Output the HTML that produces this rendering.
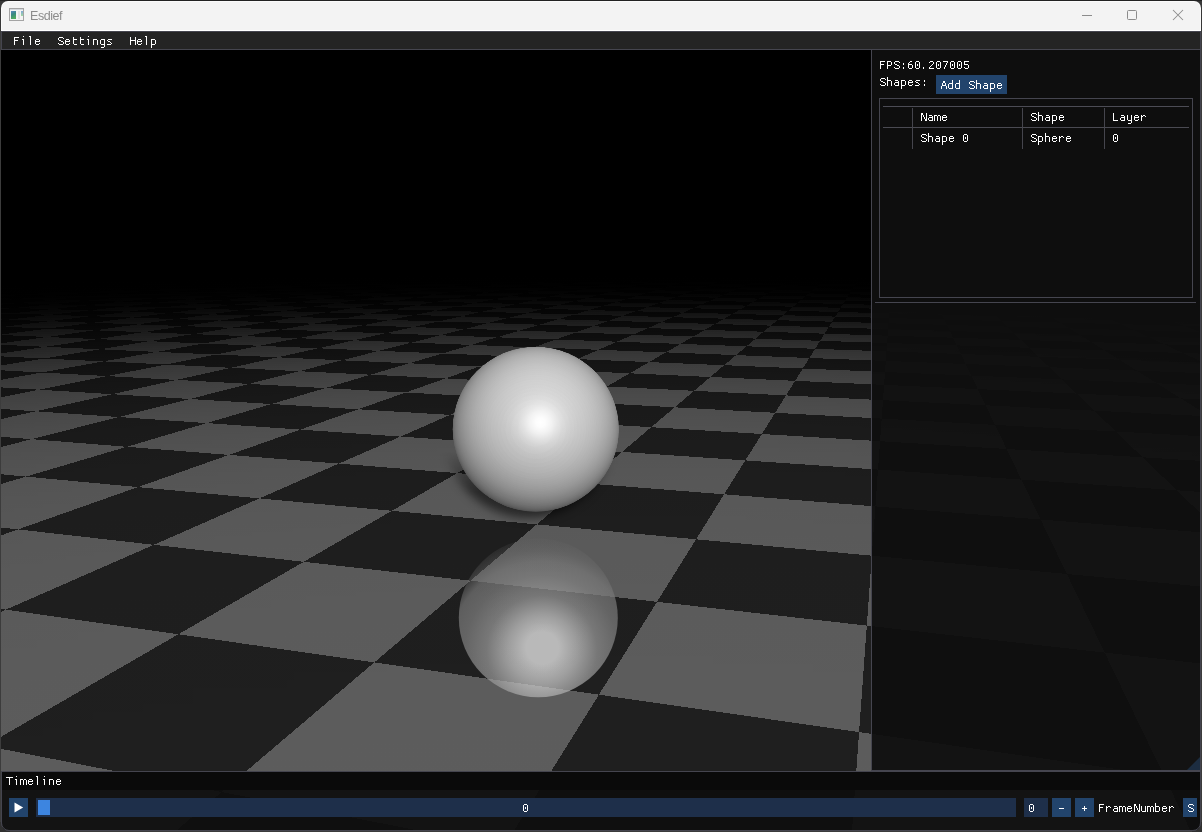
<!DOCTYPE html><html><head><meta charset="utf-8"><style>
html,body{margin:0;padding:0;width:1202px;height:832px;overflow:hidden;background:#383838;position:relative}
.a{position:absolute}
</style></head><body>
<svg width="1202" height="832" style="position:absolute;left:0;top:0">
<defs><clipPath id="vp"><rect x="1" y="50" width="1200" height="781"/></clipPath>
<linearGradient id="f0" x1="0" x2="1202" y1="0" y2="0" gradientUnits="userSpaceOnUse"><stop offset="0.000" stop-opacity="1.000"/><stop offset="0.083" stop-opacity="1.000"/><stop offset="0.166" stop-opacity="1.000"/><stop offset="0.250" stop-opacity="1.000"/><stop offset="0.333" stop-opacity="1.000"/><stop offset="0.416" stop-opacity="1.000"/><stop offset="0.500" stop-opacity="1.000"/><stop offset="0.582" stop-opacity="1.000"/><stop offset="0.666" stop-opacity="1.000"/><stop offset="0.749" stop-opacity="1.000"/><stop offset="0.832" stop-opacity="1.000"/><stop offset="0.915" stop-opacity="1.000"/><stop offset="1.000" stop-opacity="1.000"/></linearGradient><linearGradient id="f1" x1="0" x2="1202" y1="0" y2="0" gradientUnits="userSpaceOnUse"><stop offset="0.000" stop-opacity="1.000"/><stop offset="0.083" stop-opacity="1.000"/><stop offset="0.166" stop-opacity="1.000"/><stop offset="0.250" stop-opacity="1.000"/><stop offset="0.333" stop-opacity="1.000"/><stop offset="0.416" stop-opacity="1.000"/><stop offset="0.500" stop-opacity="1.000"/><stop offset="0.582" stop-opacity="1.000"/><stop offset="0.666" stop-opacity="1.000"/><stop offset="0.749" stop-opacity="1.000"/><stop offset="0.832" stop-opacity="1.000"/><stop offset="0.915" stop-opacity="1.000"/><stop offset="1.000" stop-opacity="1.000"/></linearGradient><linearGradient id="f2" x1="0" x2="1202" y1="0" y2="0" gradientUnits="userSpaceOnUse"><stop offset="0.000" stop-opacity="1.000"/><stop offset="0.083" stop-opacity="1.000"/><stop offset="0.166" stop-opacity="1.000"/><stop offset="0.250" stop-opacity="1.000"/><stop offset="0.333" stop-opacity="1.000"/><stop offset="0.416" stop-opacity="1.000"/><stop offset="0.500" stop-opacity="1.000"/><stop offset="0.582" stop-opacity="1.000"/><stop offset="0.666" stop-opacity="1.000"/><stop offset="0.749" stop-opacity="1.000"/><stop offset="0.832" stop-opacity="1.000"/><stop offset="0.915" stop-opacity="1.000"/><stop offset="1.000" stop-opacity="1.000"/></linearGradient><linearGradient id="f3" x1="0" x2="1202" y1="0" y2="0" gradientUnits="userSpaceOnUse"><stop offset="0.000" stop-opacity="1.000"/><stop offset="0.083" stop-opacity="1.000"/><stop offset="0.166" stop-opacity="1.000"/><stop offset="0.250" stop-opacity="1.000"/><stop offset="0.333" stop-opacity="1.000"/><stop offset="0.416" stop-opacity="1.000"/><stop offset="0.500" stop-opacity="1.000"/><stop offset="0.582" stop-opacity="1.000"/><stop offset="0.666" stop-opacity="1.000"/><stop offset="0.749" stop-opacity="1.000"/><stop offset="0.832" stop-opacity="1.000"/><stop offset="0.915" stop-opacity="1.000"/><stop offset="1.000" stop-opacity="1.000"/></linearGradient><linearGradient id="f4" x1="0" x2="1202" y1="0" y2="0" gradientUnits="userSpaceOnUse"><stop offset="0.000" stop-opacity="1.000"/><stop offset="0.083" stop-opacity="1.000"/><stop offset="0.166" stop-opacity="1.000"/><stop offset="0.250" stop-opacity="1.000"/><stop offset="0.333" stop-opacity="1.000"/><stop offset="0.416" stop-opacity="1.000"/><stop offset="0.500" stop-opacity="1.000"/><stop offset="0.582" stop-opacity="1.000"/><stop offset="0.666" stop-opacity="1.000"/><stop offset="0.749" stop-opacity="1.000"/><stop offset="0.832" stop-opacity="1.000"/><stop offset="0.915" stop-opacity="1.000"/><stop offset="1.000" stop-opacity="1.000"/></linearGradient><linearGradient id="f5" x1="0" x2="1202" y1="0" y2="0" gradientUnits="userSpaceOnUse"><stop offset="0.000" stop-opacity="1.000"/><stop offset="0.083" stop-opacity="1.000"/><stop offset="0.166" stop-opacity="1.000"/><stop offset="0.250" stop-opacity="1.000"/><stop offset="0.333" stop-opacity="1.000"/><stop offset="0.416" stop-opacity="1.000"/><stop offset="0.500" stop-opacity="1.000"/><stop offset="0.582" stop-opacity="1.000"/><stop offset="0.666" stop-opacity="1.000"/><stop offset="0.749" stop-opacity="1.000"/><stop offset="0.832" stop-opacity="1.000"/><stop offset="0.915" stop-opacity="1.000"/><stop offset="1.000" stop-opacity="1.000"/></linearGradient><linearGradient id="f6" x1="0" x2="1202" y1="0" y2="0" gradientUnits="userSpaceOnUse"><stop offset="0.000" stop-opacity="1.000"/><stop offset="0.083" stop-opacity="1.000"/><stop offset="0.166" stop-opacity="1.000"/><stop offset="0.250" stop-opacity="1.000"/><stop offset="0.333" stop-opacity="1.000"/><stop offset="0.416" stop-opacity="1.000"/><stop offset="0.500" stop-opacity="1.000"/><stop offset="0.582" stop-opacity="1.000"/><stop offset="0.666" stop-opacity="1.000"/><stop offset="0.749" stop-opacity="1.000"/><stop offset="0.832" stop-opacity="1.000"/><stop offset="0.915" stop-opacity="1.000"/><stop offset="1.000" stop-opacity="1.000"/></linearGradient><linearGradient id="f7" x1="0" x2="1202" y1="0" y2="0" gradientUnits="userSpaceOnUse"><stop offset="0.000" stop-opacity="1.000"/><stop offset="0.083" stop-opacity="1.000"/><stop offset="0.166" stop-opacity="1.000"/><stop offset="0.250" stop-opacity="1.000"/><stop offset="0.333" stop-opacity="1.000"/><stop offset="0.416" stop-opacity="1.000"/><stop offset="0.500" stop-opacity="1.000"/><stop offset="0.582" stop-opacity="1.000"/><stop offset="0.666" stop-opacity="1.000"/><stop offset="0.749" stop-opacity="1.000"/><stop offset="0.832" stop-opacity="1.000"/><stop offset="0.915" stop-opacity="1.000"/><stop offset="1.000" stop-opacity="1.000"/></linearGradient><linearGradient id="f8" x1="0" x2="1202" y1="0" y2="0" gradientUnits="userSpaceOnUse"><stop offset="0.000" stop-opacity="1.000"/><stop offset="0.083" stop-opacity="1.000"/><stop offset="0.166" stop-opacity="1.000"/><stop offset="0.250" stop-opacity="1.000"/><stop offset="0.333" stop-opacity="1.000"/><stop offset="0.416" stop-opacity="1.000"/><stop offset="0.500" stop-opacity="1.000"/><stop offset="0.582" stop-opacity="1.000"/><stop offset="0.666" stop-opacity="1.000"/><stop offset="0.749" stop-opacity="1.000"/><stop offset="0.832" stop-opacity="1.000"/><stop offset="0.915" stop-opacity="1.000"/><stop offset="1.000" stop-opacity="1.000"/></linearGradient><linearGradient id="f9" x1="0" x2="1202" y1="0" y2="0" gradientUnits="userSpaceOnUse"><stop offset="0.000" stop-opacity="1.000"/><stop offset="0.083" stop-opacity="1.000"/><stop offset="0.166" stop-opacity="1.000"/><stop offset="0.250" stop-opacity="1.000"/><stop offset="0.333" stop-opacity="1.000"/><stop offset="0.416" stop-opacity="1.000"/><stop offset="0.500" stop-opacity="1.000"/><stop offset="0.582" stop-opacity="1.000"/><stop offset="0.666" stop-opacity="1.000"/><stop offset="0.749" stop-opacity="1.000"/><stop offset="0.832" stop-opacity="1.000"/><stop offset="0.915" stop-opacity="1.000"/><stop offset="1.000" stop-opacity="1.000"/></linearGradient><linearGradient id="f10" x1="0" x2="1202" y1="0" y2="0" gradientUnits="userSpaceOnUse"><stop offset="0.000" stop-opacity="1.000"/><stop offset="0.083" stop-opacity="1.000"/><stop offset="0.166" stop-opacity="1.000"/><stop offset="0.250" stop-opacity="1.000"/><stop offset="0.333" stop-opacity="1.000"/><stop offset="0.416" stop-opacity="1.000"/><stop offset="0.500" stop-opacity="1.000"/><stop offset="0.582" stop-opacity="1.000"/><stop offset="0.666" stop-opacity="1.000"/><stop offset="0.749" stop-opacity="1.000"/><stop offset="0.832" stop-opacity="1.000"/><stop offset="0.915" stop-opacity="1.000"/><stop offset="1.000" stop-opacity="1.000"/></linearGradient><linearGradient id="f11" x1="0" x2="1202" y1="0" y2="0" gradientUnits="userSpaceOnUse"><stop offset="0.000" stop-opacity="1.000"/><stop offset="0.083" stop-opacity="1.000"/><stop offset="0.166" stop-opacity="1.000"/><stop offset="0.250" stop-opacity="1.000"/><stop offset="0.333" stop-opacity="1.000"/><stop offset="0.416" stop-opacity="1.000"/><stop offset="0.500" stop-opacity="1.000"/><stop offset="0.582" stop-opacity="1.000"/><stop offset="0.666" stop-opacity="1.000"/><stop offset="0.749" stop-opacity="1.000"/><stop offset="0.832" stop-opacity="1.000"/><stop offset="0.915" stop-opacity="1.000"/><stop offset="1.000" stop-opacity="1.000"/></linearGradient><linearGradient id="f12" x1="0" x2="1202" y1="0" y2="0" gradientUnits="userSpaceOnUse"><stop offset="0.000" stop-opacity="1.000"/><stop offset="0.083" stop-opacity="1.000"/><stop offset="0.166" stop-opacity="1.000"/><stop offset="0.250" stop-opacity="1.000"/><stop offset="0.333" stop-opacity="1.000"/><stop offset="0.416" stop-opacity="1.000"/><stop offset="0.500" stop-opacity="1.000"/><stop offset="0.582" stop-opacity="1.000"/><stop offset="0.666" stop-opacity="1.000"/><stop offset="0.749" stop-opacity="1.000"/><stop offset="0.832" stop-opacity="1.000"/><stop offset="0.915" stop-opacity="1.000"/><stop offset="1.000" stop-opacity="1.000"/></linearGradient><linearGradient id="f13" x1="0" x2="1202" y1="0" y2="0" gradientUnits="userSpaceOnUse"><stop offset="0.000" stop-opacity="1.000"/><stop offset="0.083" stop-opacity="1.000"/><stop offset="0.166" stop-opacity="1.000"/><stop offset="0.250" stop-opacity="1.000"/><stop offset="0.333" stop-opacity="1.000"/><stop offset="0.416" stop-opacity="1.000"/><stop offset="0.500" stop-opacity="1.000"/><stop offset="0.582" stop-opacity="1.000"/><stop offset="0.666" stop-opacity="1.000"/><stop offset="0.749" stop-opacity="1.000"/><stop offset="0.832" stop-opacity="1.000"/><stop offset="0.915" stop-opacity="1.000"/><stop offset="1.000" stop-opacity="1.000"/></linearGradient><linearGradient id="f14" x1="0" x2="1202" y1="0" y2="0" gradientUnits="userSpaceOnUse"><stop offset="0.000" stop-opacity="1.000"/><stop offset="0.083" stop-opacity="1.000"/><stop offset="0.166" stop-opacity="1.000"/><stop offset="0.250" stop-opacity="1.000"/><stop offset="0.333" stop-opacity="1.000"/><stop offset="0.416" stop-opacity="1.000"/><stop offset="0.500" stop-opacity="1.000"/><stop offset="0.582" stop-opacity="1.000"/><stop offset="0.666" stop-opacity="1.000"/><stop offset="0.749" stop-opacity="1.000"/><stop offset="0.832" stop-opacity="1.000"/><stop offset="0.915" stop-opacity="1.000"/><stop offset="1.000" stop-opacity="1.000"/></linearGradient><linearGradient id="f15" x1="0" x2="1202" y1="0" y2="0" gradientUnits="userSpaceOnUse"><stop offset="0.000" stop-opacity="1.000"/><stop offset="0.083" stop-opacity="1.000"/><stop offset="0.166" stop-opacity="1.000"/><stop offset="0.250" stop-opacity="1.000"/><stop offset="0.333" stop-opacity="1.000"/><stop offset="0.416" stop-opacity="1.000"/><stop offset="0.500" stop-opacity="1.000"/><stop offset="0.582" stop-opacity="1.000"/><stop offset="0.666" stop-opacity="1.000"/><stop offset="0.749" stop-opacity="1.000"/><stop offset="0.832" stop-opacity="1.000"/><stop offset="0.915" stop-opacity="1.000"/><stop offset="1.000" stop-opacity="1.000"/></linearGradient><linearGradient id="f16" x1="0" x2="1202" y1="0" y2="0" gradientUnits="userSpaceOnUse"><stop offset="0.000" stop-opacity="1.000"/><stop offset="0.083" stop-opacity="1.000"/><stop offset="0.166" stop-opacity="1.000"/><stop offset="0.250" stop-opacity="1.000"/><stop offset="0.333" stop-opacity="1.000"/><stop offset="0.416" stop-opacity="1.000"/><stop offset="0.500" stop-opacity="1.000"/><stop offset="0.582" stop-opacity="1.000"/><stop offset="0.666" stop-opacity="1.000"/><stop offset="0.749" stop-opacity="1.000"/><stop offset="0.832" stop-opacity="1.000"/><stop offset="0.915" stop-opacity="1.000"/><stop offset="1.000" stop-opacity="1.000"/></linearGradient><linearGradient id="f17" x1="0" x2="1202" y1="0" y2="0" gradientUnits="userSpaceOnUse"><stop offset="0.000" stop-opacity="1.000"/><stop offset="0.083" stop-opacity="1.000"/><stop offset="0.166" stop-opacity="1.000"/><stop offset="0.250" stop-opacity="1.000"/><stop offset="0.333" stop-opacity="1.000"/><stop offset="0.416" stop-opacity="1.000"/><stop offset="0.500" stop-opacity="1.000"/><stop offset="0.582" stop-opacity="1.000"/><stop offset="0.666" stop-opacity="1.000"/><stop offset="0.749" stop-opacity="1.000"/><stop offset="0.832" stop-opacity="1.000"/><stop offset="0.915" stop-opacity="1.000"/><stop offset="1.000" stop-opacity="1.000"/></linearGradient><linearGradient id="f18" x1="0" x2="1202" y1="0" y2="0" gradientUnits="userSpaceOnUse"><stop offset="0.000" stop-opacity="1.000"/><stop offset="0.083" stop-opacity="1.000"/><stop offset="0.166" stop-opacity="1.000"/><stop offset="0.250" stop-opacity="1.000"/><stop offset="0.333" stop-opacity="1.000"/><stop offset="0.416" stop-opacity="1.000"/><stop offset="0.500" stop-opacity="1.000"/><stop offset="0.582" stop-opacity="1.000"/><stop offset="0.666" stop-opacity="1.000"/><stop offset="0.749" stop-opacity="1.000"/><stop offset="0.832" stop-opacity="1.000"/><stop offset="0.915" stop-opacity="1.000"/><stop offset="1.000" stop-opacity="1.000"/></linearGradient><linearGradient id="f19" x1="0" x2="1202" y1="0" y2="0" gradientUnits="userSpaceOnUse"><stop offset="0.000" stop-opacity="1.000"/><stop offset="0.083" stop-opacity="1.000"/><stop offset="0.166" stop-opacity="1.000"/><stop offset="0.250" stop-opacity="1.000"/><stop offset="0.333" stop-opacity="1.000"/><stop offset="0.416" stop-opacity="1.000"/><stop offset="0.500" stop-opacity="1.000"/><stop offset="0.582" stop-opacity="1.000"/><stop offset="0.666" stop-opacity="1.000"/><stop offset="0.749" stop-opacity="1.000"/><stop offset="0.832" stop-opacity="1.000"/><stop offset="0.915" stop-opacity="1.000"/><stop offset="1.000" stop-opacity="1.000"/></linearGradient><linearGradient id="f20" x1="0" x2="1202" y1="0" y2="0" gradientUnits="userSpaceOnUse"><stop offset="0.000" stop-opacity="1.000"/><stop offset="0.083" stop-opacity="1.000"/><stop offset="0.166" stop-opacity="1.000"/><stop offset="0.250" stop-opacity="1.000"/><stop offset="0.333" stop-opacity="1.000"/><stop offset="0.416" stop-opacity="1.000"/><stop offset="0.500" stop-opacity="1.000"/><stop offset="0.582" stop-opacity="1.000"/><stop offset="0.666" stop-opacity="1.000"/><stop offset="0.749" stop-opacity="1.000"/><stop offset="0.832" stop-opacity="1.000"/><stop offset="0.915" stop-opacity="1.000"/><stop offset="1.000" stop-opacity="1.000"/></linearGradient><linearGradient id="f21" x1="0" x2="1202" y1="0" y2="0" gradientUnits="userSpaceOnUse"><stop offset="0.000" stop-opacity="1.000"/><stop offset="0.083" stop-opacity="1.000"/><stop offset="0.166" stop-opacity="1.000"/><stop offset="0.250" stop-opacity="1.000"/><stop offset="0.333" stop-opacity="1.000"/><stop offset="0.416" stop-opacity="1.000"/><stop offset="0.500" stop-opacity="1.000"/><stop offset="0.582" stop-opacity="1.000"/><stop offset="0.666" stop-opacity="1.000"/><stop offset="0.749" stop-opacity="1.000"/><stop offset="0.832" stop-opacity="1.000"/><stop offset="0.915" stop-opacity="1.000"/><stop offset="1.000" stop-opacity="1.000"/></linearGradient><linearGradient id="f22" x1="0" x2="1202" y1="0" y2="0" gradientUnits="userSpaceOnUse"><stop offset="0.000" stop-opacity="1.000"/><stop offset="0.083" stop-opacity="1.000"/><stop offset="0.166" stop-opacity="1.000"/><stop offset="0.250" stop-opacity="1.000"/><stop offset="0.333" stop-opacity="1.000"/><stop offset="0.416" stop-opacity="1.000"/><stop offset="0.500" stop-opacity="1.000"/><stop offset="0.582" stop-opacity="1.000"/><stop offset="0.666" stop-opacity="1.000"/><stop offset="0.749" stop-opacity="1.000"/><stop offset="0.832" stop-opacity="1.000"/><stop offset="0.915" stop-opacity="1.000"/><stop offset="1.000" stop-opacity="1.000"/></linearGradient><linearGradient id="f23" x1="0" x2="1202" y1="0" y2="0" gradientUnits="userSpaceOnUse"><stop offset="0.000" stop-opacity="1.000"/><stop offset="0.083" stop-opacity="1.000"/><stop offset="0.166" stop-opacity="1.000"/><stop offset="0.250" stop-opacity="1.000"/><stop offset="0.333" stop-opacity="1.000"/><stop offset="0.416" stop-opacity="1.000"/><stop offset="0.500" stop-opacity="1.000"/><stop offset="0.582" stop-opacity="1.000"/><stop offset="0.666" stop-opacity="1.000"/><stop offset="0.749" stop-opacity="1.000"/><stop offset="0.832" stop-opacity="1.000"/><stop offset="0.915" stop-opacity="1.000"/><stop offset="1.000" stop-opacity="1.000"/></linearGradient><linearGradient id="f24" x1="0" x2="1202" y1="0" y2="0" gradientUnits="userSpaceOnUse"><stop offset="0.000" stop-opacity="1.000"/><stop offset="0.083" stop-opacity="1.000"/><stop offset="0.166" stop-opacity="1.000"/><stop offset="0.250" stop-opacity="1.000"/><stop offset="0.333" stop-opacity="1.000"/><stop offset="0.416" stop-opacity="1.000"/><stop offset="0.500" stop-opacity="1.000"/><stop offset="0.582" stop-opacity="1.000"/><stop offset="0.666" stop-opacity="1.000"/><stop offset="0.749" stop-opacity="1.000"/><stop offset="0.832" stop-opacity="1.000"/><stop offset="0.915" stop-opacity="1.000"/><stop offset="1.000" stop-opacity="1.000"/></linearGradient><linearGradient id="f25" x1="0" x2="1202" y1="0" y2="0" gradientUnits="userSpaceOnUse"><stop offset="0.000" stop-opacity="1.000"/><stop offset="0.083" stop-opacity="1.000"/><stop offset="0.166" stop-opacity="1.000"/><stop offset="0.250" stop-opacity="1.000"/><stop offset="0.333" stop-opacity="1.000"/><stop offset="0.416" stop-opacity="1.000"/><stop offset="0.500" stop-opacity="1.000"/><stop offset="0.582" stop-opacity="1.000"/><stop offset="0.666" stop-opacity="1.000"/><stop offset="0.749" stop-opacity="1.000"/><stop offset="0.832" stop-opacity="1.000"/><stop offset="0.915" stop-opacity="1.000"/><stop offset="1.000" stop-opacity="1.000"/></linearGradient><linearGradient id="f26" x1="0" x2="1202" y1="0" y2="0" gradientUnits="userSpaceOnUse"><stop offset="0.000" stop-opacity="1.000"/><stop offset="0.083" stop-opacity="1.000"/><stop offset="0.166" stop-opacity="1.000"/><stop offset="0.250" stop-opacity="1.000"/><stop offset="0.333" stop-opacity="1.000"/><stop offset="0.416" stop-opacity="1.000"/><stop offset="0.500" stop-opacity="1.000"/><stop offset="0.582" stop-opacity="1.000"/><stop offset="0.666" stop-opacity="1.000"/><stop offset="0.749" stop-opacity="1.000"/><stop offset="0.832" stop-opacity="1.000"/><stop offset="0.915" stop-opacity="1.000"/><stop offset="1.000" stop-opacity="1.000"/></linearGradient><linearGradient id="f27" x1="0" x2="1202" y1="0" y2="0" gradientUnits="userSpaceOnUse"><stop offset="0.000" stop-opacity="1.000"/><stop offset="0.083" stop-opacity="1.000"/><stop offset="0.166" stop-opacity="1.000"/><stop offset="0.250" stop-opacity="1.000"/><stop offset="0.333" stop-opacity="1.000"/><stop offset="0.416" stop-opacity="1.000"/><stop offset="0.500" stop-opacity="1.000"/><stop offset="0.582" stop-opacity="1.000"/><stop offset="0.666" stop-opacity="1.000"/><stop offset="0.749" stop-opacity="1.000"/><stop offset="0.832" stop-opacity="1.000"/><stop offset="0.915" stop-opacity="1.000"/><stop offset="1.000" stop-opacity="1.000"/></linearGradient><linearGradient id="f28" x1="0" x2="1202" y1="0" y2="0" gradientUnits="userSpaceOnUse"><stop offset="0.000" stop-opacity="1.000"/><stop offset="0.083" stop-opacity="1.000"/><stop offset="0.166" stop-opacity="1.000"/><stop offset="0.250" stop-opacity="1.000"/><stop offset="0.333" stop-opacity="1.000"/><stop offset="0.416" stop-opacity="1.000"/><stop offset="0.500" stop-opacity="1.000"/><stop offset="0.582" stop-opacity="1.000"/><stop offset="0.666" stop-opacity="1.000"/><stop offset="0.749" stop-opacity="1.000"/><stop offset="0.832" stop-opacity="1.000"/><stop offset="0.915" stop-opacity="1.000"/><stop offset="1.000" stop-opacity="1.000"/></linearGradient><linearGradient id="f29" x1="0" x2="1202" y1="0" y2="0" gradientUnits="userSpaceOnUse"><stop offset="0.000" stop-opacity="1.000"/><stop offset="0.083" stop-opacity="1.000"/><stop offset="0.166" stop-opacity="1.000"/><stop offset="0.250" stop-opacity="1.000"/><stop offset="0.333" stop-opacity="0.999"/><stop offset="0.416" stop-opacity="0.999"/><stop offset="0.500" stop-opacity="0.999"/><stop offset="0.582" stop-opacity="0.999"/><stop offset="0.666" stop-opacity="0.999"/><stop offset="0.749" stop-opacity="1.000"/><stop offset="0.832" stop-opacity="1.000"/><stop offset="0.915" stop-opacity="1.000"/><stop offset="1.000" stop-opacity="1.000"/></linearGradient><linearGradient id="f30" x1="0" x2="1202" y1="0" y2="0" gradientUnits="userSpaceOnUse"><stop offset="0.000" stop-opacity="1.000"/><stop offset="0.083" stop-opacity="1.000"/><stop offset="0.166" stop-opacity="1.000"/><stop offset="0.250" stop-opacity="0.999"/><stop offset="0.333" stop-opacity="0.999"/><stop offset="0.416" stop-opacity="0.998"/><stop offset="0.500" stop-opacity="0.998"/><stop offset="0.582" stop-opacity="0.998"/><stop offset="0.666" stop-opacity="0.999"/><stop offset="0.749" stop-opacity="0.999"/><stop offset="0.832" stop-opacity="1.000"/><stop offset="0.915" stop-opacity="1.000"/><stop offset="1.000" stop-opacity="1.000"/></linearGradient><linearGradient id="f31" x1="0" x2="1202" y1="0" y2="0" gradientUnits="userSpaceOnUse"><stop offset="0.000" stop-opacity="1.000"/><stop offset="0.083" stop-opacity="1.000"/><stop offset="0.166" stop-opacity="0.999"/><stop offset="0.250" stop-opacity="0.999"/><stop offset="0.333" stop-opacity="0.998"/><stop offset="0.416" stop-opacity="0.997"/><stop offset="0.500" stop-opacity="0.996"/><stop offset="0.582" stop-opacity="0.997"/><stop offset="0.666" stop-opacity="0.997"/><stop offset="0.749" stop-opacity="0.998"/><stop offset="0.832" stop-opacity="0.999"/><stop offset="0.915" stop-opacity="1.000"/><stop offset="1.000" stop-opacity="1.000"/></linearGradient><linearGradient id="f32" x1="0" x2="1202" y1="0" y2="0" gradientUnits="userSpaceOnUse"><stop offset="0.000" stop-opacity="1.000"/><stop offset="0.083" stop-opacity="0.999"/><stop offset="0.166" stop-opacity="0.999"/><stop offset="0.250" stop-opacity="0.997"/><stop offset="0.333" stop-opacity="0.996"/><stop offset="0.416" stop-opacity="0.995"/><stop offset="0.500" stop-opacity="0.994"/><stop offset="0.582" stop-opacity="0.994"/><stop offset="0.666" stop-opacity="0.995"/><stop offset="0.749" stop-opacity="0.997"/><stop offset="0.832" stop-opacity="0.998"/><stop offset="0.915" stop-opacity="0.999"/><stop offset="1.000" stop-opacity="1.000"/></linearGradient><linearGradient id="f33" x1="0" x2="1202" y1="0" y2="0" gradientUnits="userSpaceOnUse"><stop offset="0.000" stop-opacity="1.000"/><stop offset="0.083" stop-opacity="0.999"/><stop offset="0.166" stop-opacity="0.997"/><stop offset="0.250" stop-opacity="0.995"/><stop offset="0.333" stop-opacity="0.993"/><stop offset="0.416" stop-opacity="0.991"/><stop offset="0.500" stop-opacity="0.990"/><stop offset="0.582" stop-opacity="0.991"/><stop offset="0.666" stop-opacity="0.992"/><stop offset="0.749" stop-opacity="0.995"/><stop offset="0.832" stop-opacity="0.997"/><stop offset="0.915" stop-opacity="0.998"/><stop offset="1.000" stop-opacity="0.999"/></linearGradient><linearGradient id="f34" x1="0" x2="1202" y1="0" y2="0" gradientUnits="userSpaceOnUse"><stop offset="0.000" stop-opacity="0.999"/><stop offset="0.083" stop-opacity="0.998"/><stop offset="0.166" stop-opacity="0.996"/><stop offset="0.250" stop-opacity="0.993"/><stop offset="0.333" stop-opacity="0.989"/><stop offset="0.416" stop-opacity="0.987"/><stop offset="0.500" stop-opacity="0.986"/><stop offset="0.582" stop-opacity="0.986"/><stop offset="0.666" stop-opacity="0.989"/><stop offset="0.749" stop-opacity="0.992"/><stop offset="0.832" stop-opacity="0.995"/><stop offset="0.915" stop-opacity="0.997"/><stop offset="1.000" stop-opacity="0.999"/></linearGradient><linearGradient id="f35" x1="0" x2="1202" y1="0" y2="0" gradientUnits="userSpaceOnUse"><stop offset="0.000" stop-opacity="0.998"/><stop offset="0.083" stop-opacity="0.996"/><stop offset="0.166" stop-opacity="0.993"/><stop offset="0.250" stop-opacity="0.989"/><stop offset="0.333" stop-opacity="0.984"/><stop offset="0.416" stop-opacity="0.981"/><stop offset="0.500" stop-opacity="0.979"/><stop offset="0.582" stop-opacity="0.980"/><stop offset="0.666" stop-opacity="0.983"/><stop offset="0.749" stop-opacity="0.988"/><stop offset="0.832" stop-opacity="0.992"/><stop offset="0.915" stop-opacity="0.995"/><stop offset="1.000" stop-opacity="0.998"/></linearGradient><linearGradient id="f36" x1="0" x2="1202" y1="0" y2="0" gradientUnits="userSpaceOnUse"><stop offset="0.000" stop-opacity="0.997"/><stop offset="0.083" stop-opacity="0.994"/><stop offset="0.166" stop-opacity="0.990"/><stop offset="0.250" stop-opacity="0.984"/><stop offset="0.333" stop-opacity="0.978"/><stop offset="0.416" stop-opacity="0.973"/><stop offset="0.500" stop-opacity="0.971"/><stop offset="0.582" stop-opacity="0.973"/><stop offset="0.666" stop-opacity="0.977"/><stop offset="0.749" stop-opacity="0.982"/><stop offset="0.832" stop-opacity="0.988"/><stop offset="0.915" stop-opacity="0.993"/><stop offset="1.000" stop-opacity="0.996"/></linearGradient><linearGradient id="f37" x1="0" x2="1202" y1="0" y2="0" gradientUnits="userSpaceOnUse"><stop offset="0.000" stop-opacity="0.996"/><stop offset="0.083" stop-opacity="0.991"/><stop offset="0.166" stop-opacity="0.985"/><stop offset="0.250" stop-opacity="0.978"/><stop offset="0.333" stop-opacity="0.970"/><stop offset="0.416" stop-opacity="0.964"/><stop offset="0.500" stop-opacity="0.962"/><stop offset="0.582" stop-opacity="0.963"/><stop offset="0.666" stop-opacity="0.968"/><stop offset="0.749" stop-opacity="0.975"/><stop offset="0.832" stop-opacity="0.983"/><stop offset="0.915" stop-opacity="0.990"/><stop offset="1.000" stop-opacity="0.994"/></linearGradient><linearGradient id="f38" x1="0" x2="1202" y1="0" y2="0" gradientUnits="userSpaceOnUse"><stop offset="0.000" stop-opacity="0.993"/><stop offset="0.083" stop-opacity="0.987"/><stop offset="0.166" stop-opacity="0.979"/><stop offset="0.250" stop-opacity="0.970"/><stop offset="0.333" stop-opacity="0.961"/><stop offset="0.416" stop-opacity="0.954"/><stop offset="0.500" stop-opacity="0.951"/><stop offset="0.582" stop-opacity="0.953"/><stop offset="0.666" stop-opacity="0.959"/><stop offset="0.749" stop-opacity="0.967"/><stop offset="0.832" stop-opacity="0.977"/><stop offset="0.915" stop-opacity="0.985"/><stop offset="1.000" stop-opacity="0.992"/></linearGradient><linearGradient id="f39" x1="0" x2="1202" y1="0" y2="0" gradientUnits="userSpaceOnUse"><stop offset="0.000" stop-opacity="0.990"/><stop offset="0.083" stop-opacity="0.982"/><stop offset="0.166" stop-opacity="0.972"/><stop offset="0.250" stop-opacity="0.960"/><stop offset="0.333" stop-opacity="0.950"/><stop offset="0.416" stop-opacity="0.942"/><stop offset="0.500" stop-opacity="0.938"/><stop offset="0.582" stop-opacity="0.940"/><stop offset="0.666" stop-opacity="0.947"/><stop offset="0.749" stop-opacity="0.957"/><stop offset="0.832" stop-opacity="0.969"/><stop offset="0.915" stop-opacity="0.979"/><stop offset="1.000" stop-opacity="0.988"/></linearGradient><linearGradient id="f40" x1="0" x2="1202" y1="0" y2="0" gradientUnits="userSpaceOnUse"><stop offset="0.000" stop-opacity="0.986"/><stop offset="0.083" stop-opacity="0.976"/><stop offset="0.166" stop-opacity="0.963"/><stop offset="0.250" stop-opacity="0.950"/><stop offset="0.333" stop-opacity="0.937"/><stop offset="0.416" stop-opacity="0.928"/><stop offset="0.500" stop-opacity="0.924"/><stop offset="0.582" stop-opacity="0.926"/><stop offset="0.666" stop-opacity="0.934"/><stop offset="0.749" stop-opacity="0.946"/><stop offset="0.832" stop-opacity="0.960"/><stop offset="0.915" stop-opacity="0.973"/><stop offset="1.000" stop-opacity="0.983"/></linearGradient><linearGradient id="f41" x1="0" x2="1202" y1="0" y2="0" gradientUnits="userSpaceOnUse"><stop offset="0.000" stop-opacity="0.981"/><stop offset="0.083" stop-opacity="0.969"/><stop offset="0.166" stop-opacity="0.954"/><stop offset="0.250" stop-opacity="0.937"/><stop offset="0.333" stop-opacity="0.923"/><stop offset="0.416" stop-opacity="0.913"/><stop offset="0.500" stop-opacity="0.908"/><stop offset="0.582" stop-opacity="0.911"/><stop offset="0.666" stop-opacity="0.920"/><stop offset="0.749" stop-opacity="0.933"/><stop offset="0.832" stop-opacity="0.949"/><stop offset="0.915" stop-opacity="0.965"/><stop offset="1.000" stop-opacity="0.978"/></linearGradient><linearGradient id="f42" x1="0" x2="1202" y1="0" y2="0" gradientUnits="userSpaceOnUse"><stop offset="0.000" stop-opacity="0.975"/><stop offset="0.083" stop-opacity="0.960"/><stop offset="0.166" stop-opacity="0.942"/><stop offset="0.250" stop-opacity="0.924"/><stop offset="0.333" stop-opacity="0.907"/><stop offset="0.416" stop-opacity="0.896"/><stop offset="0.500" stop-opacity="0.891"/><stop offset="0.582" stop-opacity="0.894"/><stop offset="0.666" stop-opacity="0.904"/><stop offset="0.749" stop-opacity="0.919"/><stop offset="0.832" stop-opacity="0.937"/><stop offset="0.915" stop-opacity="0.955"/><stop offset="1.000" stop-opacity="0.971"/></linearGradient><linearGradient id="f43" x1="0" x2="1202" y1="0" y2="0" gradientUnits="userSpaceOnUse"><stop offset="0.000" stop-opacity="0.968"/><stop offset="0.083" stop-opacity="0.950"/><stop offset="0.166" stop-opacity="0.929"/><stop offset="0.250" stop-opacity="0.909"/><stop offset="0.333" stop-opacity="0.891"/><stop offset="0.416" stop-opacity="0.878"/><stop offset="0.500" stop-opacity="0.873"/><stop offset="0.582" stop-opacity="0.877"/><stop offset="0.666" stop-opacity="0.887"/><stop offset="0.749" stop-opacity="0.904"/><stop offset="0.832" stop-opacity="0.924"/><stop offset="0.915" stop-opacity="0.944"/><stop offset="1.000" stop-opacity="0.963"/></linearGradient><linearGradient id="f44" x1="0" x2="1202" y1="0" y2="0" gradientUnits="userSpaceOnUse"><stop offset="0.000" stop-opacity="0.959"/><stop offset="0.083" stop-opacity="0.939"/><stop offset="0.166" stop-opacity="0.916"/><stop offset="0.250" stop-opacity="0.893"/><stop offset="0.333" stop-opacity="0.873"/><stop offset="0.416" stop-opacity="0.860"/><stop offset="0.500" stop-opacity="0.854"/><stop offset="0.582" stop-opacity="0.858"/><stop offset="0.666" stop-opacity="0.869"/><stop offset="0.749" stop-opacity="0.888"/><stop offset="0.832" stop-opacity="0.910"/><stop offset="0.915" stop-opacity="0.932"/><stop offset="1.000" stop-opacity="0.954"/></linearGradient><linearGradient id="f45" x1="0" x2="1202" y1="0" y2="0" gradientUnits="userSpaceOnUse"><stop offset="0.000" stop-opacity="0.949"/><stop offset="0.083" stop-opacity="0.926"/><stop offset="0.166" stop-opacity="0.900"/><stop offset="0.250" stop-opacity="0.876"/><stop offset="0.333" stop-opacity="0.854"/><stop offset="0.416" stop-opacity="0.840"/><stop offset="0.500" stop-opacity="0.834"/><stop offset="0.582" stop-opacity="0.838"/><stop offset="0.666" stop-opacity="0.851"/><stop offset="0.749" stop-opacity="0.870"/><stop offset="0.832" stop-opacity="0.894"/><stop offset="0.915" stop-opacity="0.919"/><stop offset="1.000" stop-opacity="0.943"/></linearGradient><linearGradient id="f46" x1="0" x2="1202" y1="0" y2="0" gradientUnits="userSpaceOnUse"><stop offset="0.000" stop-opacity="0.938"/><stop offset="0.083" stop-opacity="0.912"/><stop offset="0.166" stop-opacity="0.884"/><stop offset="0.250" stop-opacity="0.857"/><stop offset="0.333" stop-opacity="0.835"/><stop offset="0.416" stop-opacity="0.820"/><stop offset="0.500" stop-opacity="0.814"/><stop offset="0.582" stop-opacity="0.818"/><stop offset="0.666" stop-opacity="0.831"/><stop offset="0.749" stop-opacity="0.852"/><stop offset="0.832" stop-opacity="0.878"/><stop offset="0.915" stop-opacity="0.905"/><stop offset="1.000" stop-opacity="0.932"/></linearGradient><linearGradient id="f47" x1="0" x2="1202" y1="0" y2="0" gradientUnits="userSpaceOnUse"><stop offset="0.000" stop-opacity="0.927"/><stop offset="0.083" stop-opacity="0.898"/><stop offset="0.166" stop-opacity="0.867"/><stop offset="0.250" stop-opacity="0.839"/><stop offset="0.333" stop-opacity="0.815"/><stop offset="0.416" stop-opacity="0.799"/><stop offset="0.500" stop-opacity="0.793"/><stop offset="0.582" stop-opacity="0.797"/><stop offset="0.666" stop-opacity="0.811"/><stop offset="0.749" stop-opacity="0.833"/><stop offset="0.832" stop-opacity="0.860"/><stop offset="0.915" stop-opacity="0.890"/><stop offset="1.000" stop-opacity="0.919"/></linearGradient><linearGradient id="f48" x1="0" x2="1202" y1="0" y2="0" gradientUnits="userSpaceOnUse"><stop offset="0.000" stop-opacity="0.914"/><stop offset="0.083" stop-opacity="0.882"/><stop offset="0.166" stop-opacity="0.849"/><stop offset="0.250" stop-opacity="0.819"/><stop offset="0.333" stop-opacity="0.794"/><stop offset="0.416" stop-opacity="0.778"/><stop offset="0.500" stop-opacity="0.772"/><stop offset="0.582" stop-opacity="0.776"/><stop offset="0.666" stop-opacity="0.790"/><stop offset="0.749" stop-opacity="0.813"/><stop offset="0.832" stop-opacity="0.842"/><stop offset="0.915" stop-opacity="0.874"/><stop offset="1.000" stop-opacity="0.906"/></linearGradient><linearGradient id="f49" x1="0" x2="1202" y1="0" y2="0" gradientUnits="userSpaceOnUse"><stop offset="0.000" stop-opacity="0.900"/><stop offset="0.083" stop-opacity="0.866"/><stop offset="0.166" stop-opacity="0.831"/><stop offset="0.250" stop-opacity="0.799"/><stop offset="0.333" stop-opacity="0.774"/><stop offset="0.416" stop-opacity="0.757"/><stop offset="0.500" stop-opacity="0.750"/><stop offset="0.582" stop-opacity="0.754"/><stop offset="0.666" stop-opacity="0.769"/><stop offset="0.749" stop-opacity="0.793"/><stop offset="0.832" stop-opacity="0.823"/><stop offset="0.915" stop-opacity="0.857"/><stop offset="1.000" stop-opacity="0.891"/></linearGradient><linearGradient id="f50" x1="0" x2="1202" y1="0" y2="0" gradientUnits="userSpaceOnUse"><stop offset="0.000" stop-opacity="0.885"/><stop offset="0.083" stop-opacity="0.848"/><stop offset="0.166" stop-opacity="0.812"/><stop offset="0.250" stop-opacity="0.779"/><stop offset="0.333" stop-opacity="0.752"/><stop offset="0.416" stop-opacity="0.735"/><stop offset="0.500" stop-opacity="0.728"/><stop offset="0.582" stop-opacity="0.733"/><stop offset="0.666" stop-opacity="0.748"/><stop offset="0.749" stop-opacity="0.773"/><stop offset="0.832" stop-opacity="0.804"/><stop offset="0.915" stop-opacity="0.839"/><stop offset="1.000" stop-opacity="0.876"/></linearGradient><linearGradient id="f51" x1="0" x2="1202" y1="0" y2="0" gradientUnits="userSpaceOnUse"><stop offset="0.000" stop-opacity="0.869"/><stop offset="0.083" stop-opacity="0.831"/><stop offset="0.166" stop-opacity="0.793"/><stop offset="0.250" stop-opacity="0.758"/><stop offset="0.333" stop-opacity="0.731"/><stop offset="0.416" stop-opacity="0.714"/><stop offset="0.500" stop-opacity="0.707"/><stop offset="0.582" stop-opacity="0.711"/><stop offset="0.666" stop-opacity="0.727"/><stop offset="0.749" stop-opacity="0.752"/><stop offset="0.832" stop-opacity="0.785"/><stop offset="0.915" stop-opacity="0.821"/><stop offset="1.000" stop-opacity="0.860"/></linearGradient><linearGradient id="f52" x1="0" x2="1202" y1="0" y2="0" gradientUnits="userSpaceOnUse"><stop offset="0.000" stop-opacity="0.853"/><stop offset="0.083" stop-opacity="0.812"/><stop offset="0.166" stop-opacity="0.773"/><stop offset="0.250" stop-opacity="0.738"/><stop offset="0.333" stop-opacity="0.710"/><stop offset="0.416" stop-opacity="0.692"/><stop offset="0.500" stop-opacity="0.685"/><stop offset="0.582" stop-opacity="0.690"/><stop offset="0.666" stop-opacity="0.706"/><stop offset="0.749" stop-opacity="0.731"/><stop offset="0.832" stop-opacity="0.765"/><stop offset="0.915" stop-opacity="0.803"/><stop offset="1.000" stop-opacity="0.843"/></linearGradient><linearGradient id="f53" x1="0" x2="1202" y1="0" y2="0" gradientUnits="userSpaceOnUse"><stop offset="0.000" stop-opacity="0.836"/><stop offset="0.083" stop-opacity="0.794"/><stop offset="0.166" stop-opacity="0.753"/><stop offset="0.250" stop-opacity="0.717"/><stop offset="0.333" stop-opacity="0.689"/><stop offset="0.416" stop-opacity="0.671"/><stop offset="0.500" stop-opacity="0.664"/><stop offset="0.582" stop-opacity="0.669"/><stop offset="0.666" stop-opacity="0.685"/><stop offset="0.749" stop-opacity="0.711"/><stop offset="0.832" stop-opacity="0.745"/><stop offset="0.915" stop-opacity="0.784"/><stop offset="1.000" stop-opacity="0.826"/></linearGradient><linearGradient id="f54" x1="0" x2="1202" y1="0" y2="0" gradientUnits="userSpaceOnUse"><stop offset="0.000" stop-opacity="0.819"/><stop offset="0.083" stop-opacity="0.775"/><stop offset="0.166" stop-opacity="0.733"/><stop offset="0.250" stop-opacity="0.697"/><stop offset="0.333" stop-opacity="0.668"/><stop offset="0.416" stop-opacity="0.650"/><stop offset="0.500" stop-opacity="0.643"/><stop offset="0.582" stop-opacity="0.648"/><stop offset="0.666" stop-opacity="0.664"/><stop offset="0.749" stop-opacity="0.690"/><stop offset="0.832" stop-opacity="0.725"/><stop offset="0.915" stop-opacity="0.765"/><stop offset="1.000" stop-opacity="0.809"/></linearGradient><linearGradient id="f55" x1="0" x2="1202" y1="0" y2="0" gradientUnits="userSpaceOnUse"><stop offset="0.000" stop-opacity="0.801"/><stop offset="0.083" stop-opacity="0.756"/><stop offset="0.166" stop-opacity="0.713"/><stop offset="0.250" stop-opacity="0.676"/><stop offset="0.333" stop-opacity="0.648"/><stop offset="0.416" stop-opacity="0.629"/><stop offset="0.500" stop-opacity="0.623"/><stop offset="0.582" stop-opacity="0.627"/><stop offset="0.666" stop-opacity="0.644"/><stop offset="0.749" stop-opacity="0.670"/><stop offset="0.832" stop-opacity="0.705"/><stop offset="0.915" stop-opacity="0.746"/><stop offset="1.000" stop-opacity="0.791"/></linearGradient><linearGradient id="f56" x1="0" x2="1202" y1="0" y2="0" gradientUnits="userSpaceOnUse"><stop offset="0.000" stop-opacity="0.783"/><stop offset="0.083" stop-opacity="0.736"/><stop offset="0.166" stop-opacity="0.693"/><stop offset="0.250" stop-opacity="0.656"/><stop offset="0.333" stop-opacity="0.627"/><stop offset="0.416" stop-opacity="0.609"/><stop offset="0.500" stop-opacity="0.602"/><stop offset="0.582" stop-opacity="0.607"/><stop offset="0.666" stop-opacity="0.623"/><stop offset="0.749" stop-opacity="0.650"/><stop offset="0.832" stop-opacity="0.685"/><stop offset="0.915" stop-opacity="0.727"/><stop offset="1.000" stop-opacity="0.773"/></linearGradient><linearGradient id="f57" x1="0" x2="1202" y1="0" y2="0" gradientUnits="userSpaceOnUse"><stop offset="0.000" stop-opacity="0.765"/><stop offset="0.083" stop-opacity="0.717"/><stop offset="0.166" stop-opacity="0.673"/><stop offset="0.250" stop-opacity="0.636"/><stop offset="0.333" stop-opacity="0.608"/><stop offset="0.416" stop-opacity="0.589"/><stop offset="0.500" stop-opacity="0.583"/><stop offset="0.582" stop-opacity="0.587"/><stop offset="0.666" stop-opacity="0.604"/><stop offset="0.749" stop-opacity="0.630"/><stop offset="0.832" stop-opacity="0.665"/><stop offset="0.915" stop-opacity="0.708"/><stop offset="1.000" stop-opacity="0.755"/></linearGradient><linearGradient id="f58" x1="0" x2="1202" y1="0" y2="0" gradientUnits="userSpaceOnUse"><stop offset="0.000" stop-opacity="0.746"/><stop offset="0.083" stop-opacity="0.698"/><stop offset="0.166" stop-opacity="0.654"/><stop offset="0.250" stop-opacity="0.617"/><stop offset="0.333" stop-opacity="0.588"/><stop offset="0.416" stop-opacity="0.570"/><stop offset="0.500" stop-opacity="0.563"/><stop offset="0.582" stop-opacity="0.568"/><stop offset="0.666" stop-opacity="0.584"/><stop offset="0.749" stop-opacity="0.611"/><stop offset="0.832" stop-opacity="0.646"/><stop offset="0.915" stop-opacity="0.688"/><stop offset="1.000" stop-opacity="0.736"/></linearGradient><linearGradient id="f59" x1="0" x2="1202" y1="0" y2="0" gradientUnits="userSpaceOnUse"><stop offset="0.000" stop-opacity="0.728"/><stop offset="0.083" stop-opacity="0.679"/><stop offset="0.166" stop-opacity="0.635"/><stop offset="0.250" stop-opacity="0.597"/><stop offset="0.333" stop-opacity="0.569"/><stop offset="0.416" stop-opacity="0.551"/><stop offset="0.500" stop-opacity="0.545"/><stop offset="0.582" stop-opacity="0.549"/><stop offset="0.666" stop-opacity="0.565"/><stop offset="0.749" stop-opacity="0.592"/><stop offset="0.832" stop-opacity="0.627"/><stop offset="0.915" stop-opacity="0.670"/><stop offset="1.000" stop-opacity="0.718"/></linearGradient><linearGradient id="f60" x1="0" x2="1202" y1="0" y2="0" gradientUnits="userSpaceOnUse"><stop offset="0.000" stop-opacity="0.710"/><stop offset="0.083" stop-opacity="0.660"/><stop offset="0.166" stop-opacity="0.616"/><stop offset="0.250" stop-opacity="0.579"/><stop offset="0.333" stop-opacity="0.551"/><stop offset="0.416" stop-opacity="0.533"/><stop offset="0.500" stop-opacity="0.526"/><stop offset="0.582" stop-opacity="0.531"/><stop offset="0.666" stop-opacity="0.547"/><stop offset="0.749" stop-opacity="0.573"/><stop offset="0.832" stop-opacity="0.608"/><stop offset="0.915" stop-opacity="0.651"/><stop offset="1.000" stop-opacity="0.700"/></linearGradient><linearGradient id="f61" x1="0" x2="1202" y1="0" y2="0" gradientUnits="userSpaceOnUse"><stop offset="0.000" stop-opacity="0.692"/><stop offset="0.083" stop-opacity="0.642"/><stop offset="0.166" stop-opacity="0.597"/><stop offset="0.250" stop-opacity="0.560"/><stop offset="0.333" stop-opacity="0.533"/><stop offset="0.416" stop-opacity="0.515"/><stop offset="0.500" stop-opacity="0.509"/><stop offset="0.582" stop-opacity="0.513"/><stop offset="0.666" stop-opacity="0.529"/><stop offset="0.749" stop-opacity="0.555"/><stop offset="0.832" stop-opacity="0.590"/><stop offset="0.915" stop-opacity="0.632"/><stop offset="1.000" stop-opacity="0.681"/></linearGradient><linearGradient id="f62" x1="0" x2="1202" y1="0" y2="0" gradientUnits="userSpaceOnUse"><stop offset="0.000" stop-opacity="0.673"/><stop offset="0.083" stop-opacity="0.624"/><stop offset="0.166" stop-opacity="0.579"/><stop offset="0.250" stop-opacity="0.543"/><stop offset="0.333" stop-opacity="0.515"/><stop offset="0.416" stop-opacity="0.498"/><stop offset="0.500" stop-opacity="0.491"/><stop offset="0.582" stop-opacity="0.496"/><stop offset="0.666" stop-opacity="0.511"/><stop offset="0.749" stop-opacity="0.537"/><stop offset="0.832" stop-opacity="0.572"/><stop offset="0.915" stop-opacity="0.614"/><stop offset="1.000" stop-opacity="0.663"/></linearGradient><linearGradient id="f63" x1="0" x2="1202" y1="0" y2="0" gradientUnits="userSpaceOnUse"><stop offset="0.000" stop-opacity="0.656"/><stop offset="0.083" stop-opacity="0.606"/><stop offset="0.166" stop-opacity="0.562"/><stop offset="0.250" stop-opacity="0.525"/><stop offset="0.333" stop-opacity="0.498"/><stop offset="0.416" stop-opacity="0.481"/><stop offset="0.500" stop-opacity="0.475"/><stop offset="0.582" stop-opacity="0.479"/><stop offset="0.666" stop-opacity="0.494"/><stop offset="0.749" stop-opacity="0.520"/><stop offset="0.832" stop-opacity="0.554"/><stop offset="0.915" stop-opacity="0.597"/><stop offset="1.000" stop-opacity="0.646"/></linearGradient><linearGradient id="f64" x1="0" x2="1202" y1="0" y2="0" gradientUnits="userSpaceOnUse"><stop offset="0.000" stop-opacity="0.638"/><stop offset="0.083" stop-opacity="0.588"/><stop offset="0.166" stop-opacity="0.544"/><stop offset="0.250" stop-opacity="0.508"/><stop offset="0.333" stop-opacity="0.481"/><stop offset="0.416" stop-opacity="0.465"/><stop offset="0.500" stop-opacity="0.459"/><stop offset="0.582" stop-opacity="0.463"/><stop offset="0.666" stop-opacity="0.478"/><stop offset="0.749" stop-opacity="0.503"/><stop offset="0.832" stop-opacity="0.537"/><stop offset="0.915" stop-opacity="0.579"/><stop offset="1.000" stop-opacity="0.628"/></linearGradient><linearGradient id="f65" x1="0" x2="1202" y1="0" y2="0" gradientUnits="userSpaceOnUse"><stop offset="0.000" stop-opacity="0.620"/><stop offset="0.083" stop-opacity="0.571"/><stop offset="0.166" stop-opacity="0.527"/><stop offset="0.250" stop-opacity="0.492"/><stop offset="0.333" stop-opacity="0.466"/><stop offset="0.416" stop-opacity="0.449"/><stop offset="0.500" stop-opacity="0.443"/><stop offset="0.582" stop-opacity="0.447"/><stop offset="0.666" stop-opacity="0.462"/><stop offset="0.749" stop-opacity="0.487"/><stop offset="0.832" stop-opacity="0.520"/><stop offset="0.915" stop-opacity="0.562"/><stop offset="1.000" stop-opacity="0.611"/></linearGradient><linearGradient id="f66" x1="0" x2="1202" y1="0" y2="0" gradientUnits="userSpaceOnUse"><stop offset="0.000" stop-opacity="0.603"/><stop offset="0.083" stop-opacity="0.554"/><stop offset="0.166" stop-opacity="0.511"/><stop offset="0.250" stop-opacity="0.476"/><stop offset="0.333" stop-opacity="0.450"/><stop offset="0.416" stop-opacity="0.434"/><stop offset="0.500" stop-opacity="0.428"/><stop offset="0.582" stop-opacity="0.432"/><stop offset="0.666" stop-opacity="0.447"/><stop offset="0.749" stop-opacity="0.471"/><stop offset="0.832" stop-opacity="0.504"/><stop offset="0.915" stop-opacity="0.545"/><stop offset="1.000" stop-opacity="0.594"/></linearGradient><linearGradient id="f67" x1="0" x2="1202" y1="0" y2="0" gradientUnits="userSpaceOnUse"><stop offset="0.000" stop-opacity="0.587"/><stop offset="0.083" stop-opacity="0.538"/><stop offset="0.166" stop-opacity="0.495"/><stop offset="0.250" stop-opacity="0.461"/><stop offset="0.333" stop-opacity="0.435"/><stop offset="0.416" stop-opacity="0.419"/><stop offset="0.500" stop-opacity="0.414"/><stop offset="0.582" stop-opacity="0.418"/><stop offset="0.666" stop-opacity="0.432"/><stop offset="0.749" stop-opacity="0.456"/><stop offset="0.832" stop-opacity="0.489"/><stop offset="0.915" stop-opacity="0.529"/><stop offset="1.000" stop-opacity="0.577"/></linearGradient><linearGradient id="f68" x1="0" x2="1202" y1="0" y2="0" gradientUnits="userSpaceOnUse"><stop offset="0.000" stop-opacity="0.570"/><stop offset="0.083" stop-opacity="0.522"/><stop offset="0.166" stop-opacity="0.480"/><stop offset="0.250" stop-opacity="0.446"/><stop offset="0.333" stop-opacity="0.421"/><stop offset="0.416" stop-opacity="0.405"/><stop offset="0.500" stop-opacity="0.400"/><stop offset="0.582" stop-opacity="0.404"/><stop offset="0.666" stop-opacity="0.418"/><stop offset="0.749" stop-opacity="0.441"/><stop offset="0.832" stop-opacity="0.473"/><stop offset="0.915" stop-opacity="0.513"/><stop offset="1.000" stop-opacity="0.561"/></linearGradient><linearGradient id="f69" x1="0" x2="1202" y1="0" y2="0" gradientUnits="userSpaceOnUse"><stop offset="0.000" stop-opacity="0.554"/><stop offset="0.083" stop-opacity="0.506"/><stop offset="0.166" stop-opacity="0.465"/><stop offset="0.250" stop-opacity="0.431"/><stop offset="0.333" stop-opacity="0.407"/><stop offset="0.416" stop-opacity="0.392"/><stop offset="0.500" stop-opacity="0.386"/><stop offset="0.582" stop-opacity="0.390"/><stop offset="0.666" stop-opacity="0.404"/><stop offset="0.749" stop-opacity="0.427"/><stop offset="0.832" stop-opacity="0.458"/><stop offset="0.915" stop-opacity="0.498"/><stop offset="1.000" stop-opacity="0.545"/></linearGradient><linearGradient id="f70" x1="0" x2="1202" y1="0" y2="0" gradientUnits="userSpaceOnUse"><stop offset="0.000" stop-opacity="0.538"/><stop offset="0.083" stop-opacity="0.491"/><stop offset="0.166" stop-opacity="0.450"/><stop offset="0.250" stop-opacity="0.417"/><stop offset="0.333" stop-opacity="0.393"/><stop offset="0.416" stop-opacity="0.379"/><stop offset="0.500" stop-opacity="0.373"/><stop offset="0.582" stop-opacity="0.377"/><stop offset="0.666" stop-opacity="0.391"/><stop offset="0.749" stop-opacity="0.413"/><stop offset="0.832" stop-opacity="0.444"/><stop offset="0.915" stop-opacity="0.483"/><stop offset="1.000" stop-opacity="0.530"/></linearGradient><linearGradient id="f71" x1="0" x2="1202" y1="0" y2="0" gradientUnits="userSpaceOnUse"><stop offset="0.000" stop-opacity="0.523"/><stop offset="0.083" stop-opacity="0.476"/><stop offset="0.166" stop-opacity="0.436"/><stop offset="0.250" stop-opacity="0.404"/><stop offset="0.333" stop-opacity="0.380"/><stop offset="0.416" stop-opacity="0.366"/><stop offset="0.500" stop-opacity="0.361"/><stop offset="0.582" stop-opacity="0.365"/><stop offset="0.666" stop-opacity="0.378"/><stop offset="0.749" stop-opacity="0.400"/><stop offset="0.832" stop-opacity="0.430"/><stop offset="0.915" stop-opacity="0.468"/><stop offset="1.000" stop-opacity="0.515"/></linearGradient><linearGradient id="f72" x1="0" x2="1202" y1="0" y2="0" gradientUnits="userSpaceOnUse"><stop offset="0.000" stop-opacity="0.508"/><stop offset="0.083" stop-opacity="0.462"/><stop offset="0.166" stop-opacity="0.422"/><stop offset="0.250" stop-opacity="0.391"/><stop offset="0.333" stop-opacity="0.368"/><stop offset="0.416" stop-opacity="0.354"/><stop offset="0.500" stop-opacity="0.349"/><stop offset="0.582" stop-opacity="0.352"/><stop offset="0.666" stop-opacity="0.365"/><stop offset="0.749" stop-opacity="0.387"/><stop offset="0.832" stop-opacity="0.417"/><stop offset="0.915" stop-opacity="0.454"/><stop offset="1.000" stop-opacity="0.500"/></linearGradient><linearGradient id="f73" x1="0" x2="1202" y1="0" y2="0" gradientUnits="userSpaceOnUse"><stop offset="0.000" stop-opacity="0.493"/><stop offset="0.083" stop-opacity="0.448"/><stop offset="0.166" stop-opacity="0.409"/><stop offset="0.250" stop-opacity="0.378"/><stop offset="0.333" stop-opacity="0.356"/><stop offset="0.416" stop-opacity="0.342"/><stop offset="0.500" stop-opacity="0.337"/><stop offset="0.582" stop-opacity="0.341"/><stop offset="0.666" stop-opacity="0.353"/><stop offset="0.749" stop-opacity="0.374"/><stop offset="0.832" stop-opacity="0.404"/><stop offset="0.915" stop-opacity="0.441"/><stop offset="1.000" stop-opacity="0.485"/></linearGradient><linearGradient id="f74" x1="0" x2="1202" y1="0" y2="0" gradientUnits="userSpaceOnUse"><stop offset="0.000" stop-opacity="0.479"/><stop offset="0.083" stop-opacity="0.434"/><stop offset="0.166" stop-opacity="0.396"/><stop offset="0.250" stop-opacity="0.366"/><stop offset="0.333" stop-opacity="0.344"/><stop offset="0.416" stop-opacity="0.331"/><stop offset="0.500" stop-opacity="0.326"/><stop offset="0.582" stop-opacity="0.330"/><stop offset="0.666" stop-opacity="0.342"/><stop offset="0.749" stop-opacity="0.362"/><stop offset="0.832" stop-opacity="0.391"/><stop offset="0.915" stop-opacity="0.427"/><stop offset="1.000" stop-opacity="0.472"/></linearGradient><linearGradient id="f75" x1="0" x2="1202" y1="0" y2="0" gradientUnits="userSpaceOnUse"><stop offset="0.000" stop-opacity="0.465"/><stop offset="0.083" stop-opacity="0.421"/><stop offset="0.166" stop-opacity="0.384"/><stop offset="0.250" stop-opacity="0.354"/><stop offset="0.333" stop-opacity="0.333"/><stop offset="0.416" stop-opacity="0.320"/><stop offset="0.500" stop-opacity="0.315"/><stop offset="0.582" stop-opacity="0.319"/><stop offset="0.666" stop-opacity="0.331"/><stop offset="0.749" stop-opacity="0.351"/><stop offset="0.832" stop-opacity="0.379"/><stop offset="0.915" stop-opacity="0.415"/><stop offset="1.000" stop-opacity="0.458"/></linearGradient><linearGradient id="f76" x1="0" x2="1202" y1="0" y2="0" gradientUnits="userSpaceOnUse"><stop offset="0.000" stop-opacity="0.452"/><stop offset="0.083" stop-opacity="0.409"/><stop offset="0.166" stop-opacity="0.372"/><stop offset="0.250" stop-opacity="0.343"/><stop offset="0.333" stop-opacity="0.322"/><stop offset="0.416" stop-opacity="0.309"/><stop offset="0.500" stop-opacity="0.305"/><stop offset="0.582" stop-opacity="0.308"/><stop offset="0.666" stop-opacity="0.320"/><stop offset="0.749" stop-opacity="0.340"/><stop offset="0.832" stop-opacity="0.367"/><stop offset="0.915" stop-opacity="0.402"/><stop offset="1.000" stop-opacity="0.445"/></linearGradient><linearGradient id="f77" x1="0" x2="1202" y1="0" y2="0" gradientUnits="userSpaceOnUse"><stop offset="0.000" stop-opacity="0.439"/><stop offset="0.083" stop-opacity="0.396"/><stop offset="0.166" stop-opacity="0.361"/><stop offset="0.250" stop-opacity="0.332"/><stop offset="0.333" stop-opacity="0.312"/><stop offset="0.416" stop-opacity="0.299"/><stop offset="0.500" stop-opacity="0.295"/><stop offset="0.582" stop-opacity="0.298"/><stop offset="0.666" stop-opacity="0.310"/><stop offset="0.749" stop-opacity="0.329"/><stop offset="0.832" stop-opacity="0.356"/><stop offset="0.915" stop-opacity="0.390"/><stop offset="1.000" stop-opacity="0.432"/></linearGradient><linearGradient id="f78" x1="0" x2="1202" y1="0" y2="0" gradientUnits="userSpaceOnUse"><stop offset="0.000" stop-opacity="0.426"/><stop offset="0.083" stop-opacity="0.384"/><stop offset="0.166" stop-opacity="0.349"/><stop offset="0.250" stop-opacity="0.322"/><stop offset="0.333" stop-opacity="0.302"/><stop offset="0.416" stop-opacity="0.290"/><stop offset="0.500" stop-opacity="0.285"/><stop offset="0.582" stop-opacity="0.289"/><stop offset="0.666" stop-opacity="0.300"/><stop offset="0.749" stop-opacity="0.319"/><stop offset="0.832" stop-opacity="0.345"/><stop offset="0.915" stop-opacity="0.378"/><stop offset="1.000" stop-opacity="0.420"/></linearGradient><linearGradient id="f79" x1="0" x2="1202" y1="0" y2="0" gradientUnits="userSpaceOnUse"><stop offset="0.000" stop-opacity="0.414"/><stop offset="0.083" stop-opacity="0.373"/><stop offset="0.166" stop-opacity="0.339"/><stop offset="0.250" stop-opacity="0.312"/><stop offset="0.333" stop-opacity="0.292"/><stop offset="0.416" stop-opacity="0.280"/><stop offset="0.500" stop-opacity="0.276"/><stop offset="0.582" stop-opacity="0.279"/><stop offset="0.666" stop-opacity="0.290"/><stop offset="0.749" stop-opacity="0.309"/><stop offset="0.832" stop-opacity="0.334"/><stop offset="0.915" stop-opacity="0.367"/><stop offset="1.000" stop-opacity="0.407"/></linearGradient><linearGradient id="f80" x1="0" x2="1202" y1="0" y2="0" gradientUnits="userSpaceOnUse"><stop offset="0.000" stop-opacity="0.402"/><stop offset="0.083" stop-opacity="0.362"/><stop offset="0.166" stop-opacity="0.328"/><stop offset="0.250" stop-opacity="0.302"/><stop offset="0.333" stop-opacity="0.283"/><stop offset="0.416" stop-opacity="0.272"/><stop offset="0.500" stop-opacity="0.267"/><stop offset="0.582" stop-opacity="0.271"/><stop offset="0.666" stop-opacity="0.281"/><stop offset="0.749" stop-opacity="0.299"/><stop offset="0.832" stop-opacity="0.324"/><stop offset="0.915" stop-opacity="0.356"/><stop offset="1.000" stop-opacity="0.396"/></linearGradient><linearGradient id="f81" x1="0" x2="1202" y1="0" y2="0" gradientUnits="userSpaceOnUse"><stop offset="0.000" stop-opacity="0.391"/><stop offset="0.083" stop-opacity="0.351"/><stop offset="0.166" stop-opacity="0.318"/><stop offset="0.250" stop-opacity="0.293"/><stop offset="0.333" stop-opacity="0.274"/><stop offset="0.416" stop-opacity="0.263"/><stop offset="0.500" stop-opacity="0.259"/><stop offset="0.582" stop-opacity="0.262"/><stop offset="0.666" stop-opacity="0.272"/><stop offset="0.749" stop-opacity="0.290"/><stop offset="0.832" stop-opacity="0.314"/><stop offset="0.915" stop-opacity="0.346"/><stop offset="1.000" stop-opacity="0.385"/></linearGradient><linearGradient id="f82" x1="0" x2="1202" y1="0" y2="0" gradientUnits="userSpaceOnUse"><stop offset="0.000" stop-opacity="0.380"/><stop offset="0.083" stop-opacity="0.341"/><stop offset="0.166" stop-opacity="0.309"/><stop offset="0.250" stop-opacity="0.284"/><stop offset="0.333" stop-opacity="0.266"/><stop offset="0.416" stop-opacity="0.255"/><stop offset="0.500" stop-opacity="0.251"/><stop offset="0.582" stop-opacity="0.254"/><stop offset="0.666" stop-opacity="0.264"/><stop offset="0.749" stop-opacity="0.281"/><stop offset="0.832" stop-opacity="0.305"/><stop offset="0.915" stop-opacity="0.335"/><stop offset="1.000" stop-opacity="0.374"/></linearGradient><linearGradient id="f83" x1="0" x2="1202" y1="0" y2="0" gradientUnits="userSpaceOnUse"><stop offset="0.000" stop-opacity="0.369"/><stop offset="0.083" stop-opacity="0.331"/><stop offset="0.166" stop-opacity="0.299"/><stop offset="0.250" stop-opacity="0.275"/><stop offset="0.333" stop-opacity="0.257"/><stop offset="0.416" stop-opacity="0.247"/><stop offset="0.500" stop-opacity="0.243"/><stop offset="0.582" stop-opacity="0.246"/><stop offset="0.666" stop-opacity="0.256"/><stop offset="0.749" stop-opacity="0.272"/><stop offset="0.832" stop-opacity="0.296"/><stop offset="0.915" stop-opacity="0.326"/><stop offset="1.000" stop-opacity="0.363"/></linearGradient><linearGradient id="f84" x1="0" x2="1202" y1="0" y2="0" gradientUnits="userSpaceOnUse"><stop offset="0.000" stop-opacity="0.358"/><stop offset="0.083" stop-opacity="0.321"/><stop offset="0.166" stop-opacity="0.291"/><stop offset="0.250" stop-opacity="0.267"/><stop offset="0.333" stop-opacity="0.249"/><stop offset="0.416" stop-opacity="0.239"/><stop offset="0.500" stop-opacity="0.235"/><stop offset="0.582" stop-opacity="0.238"/><stop offset="0.666" stop-opacity="0.248"/><stop offset="0.749" stop-opacity="0.264"/><stop offset="0.832" stop-opacity="0.287"/><stop offset="0.915" stop-opacity="0.316"/><stop offset="1.000" stop-opacity="0.353"/></linearGradient><linearGradient id="f85" x1="0" x2="1202" y1="0" y2="0" gradientUnits="userSpaceOnUse"><stop offset="0.000" stop-opacity="0.348"/><stop offset="0.083" stop-opacity="0.312"/><stop offset="0.166" stop-opacity="0.282"/><stop offset="0.250" stop-opacity="0.259"/><stop offset="0.333" stop-opacity="0.242"/><stop offset="0.416" stop-opacity="0.232"/><stop offset="0.500" stop-opacity="0.228"/><stop offset="0.582" stop-opacity="0.231"/><stop offset="0.666" stop-opacity="0.240"/><stop offset="0.749" stop-opacity="0.256"/><stop offset="0.832" stop-opacity="0.278"/><stop offset="0.915" stop-opacity="0.307"/><stop offset="1.000" stop-opacity="0.343"/></linearGradient><linearGradient id="f86" x1="0" x2="1202" y1="0" y2="0" gradientUnits="userSpaceOnUse"><stop offset="0.000" stop-opacity="0.338"/><stop offset="0.083" stop-opacity="0.303"/><stop offset="0.166" stop-opacity="0.274"/><stop offset="0.250" stop-opacity="0.251"/><stop offset="0.333" stop-opacity="0.234"/><stop offset="0.416" stop-opacity="0.225"/><stop offset="0.500" stop-opacity="0.221"/><stop offset="0.582" stop-opacity="0.224"/><stop offset="0.666" stop-opacity="0.233"/><stop offset="0.749" stop-opacity="0.248"/><stop offset="0.832" stop-opacity="0.270"/><stop offset="0.915" stop-opacity="0.298"/><stop offset="1.000" stop-opacity="0.333"/></linearGradient><linearGradient id="f87" x1="0" x2="1202" y1="0" y2="0" gradientUnits="userSpaceOnUse"><stop offset="0.000" stop-opacity="0.329"/><stop offset="0.083" stop-opacity="0.294"/><stop offset="0.166" stop-opacity="0.265"/><stop offset="0.250" stop-opacity="0.243"/><stop offset="0.333" stop-opacity="0.227"/><stop offset="0.416" stop-opacity="0.218"/><stop offset="0.500" stop-opacity="0.214"/><stop offset="0.582" stop-opacity="0.217"/><stop offset="0.666" stop-opacity="0.226"/><stop offset="0.749" stop-opacity="0.241"/><stop offset="0.832" stop-opacity="0.262"/><stop offset="0.915" stop-opacity="0.290"/><stop offset="1.000" stop-opacity="0.324"/></linearGradient><linearGradient id="f88" x1="0" x2="1202" y1="0" y2="0" gradientUnits="userSpaceOnUse"><stop offset="0.000" stop-opacity="0.320"/><stop offset="0.083" stop-opacity="0.286"/><stop offset="0.166" stop-opacity="0.258"/><stop offset="0.250" stop-opacity="0.236"/><stop offset="0.333" stop-opacity="0.221"/><stop offset="0.416" stop-opacity="0.211"/><stop offset="0.500" stop-opacity="0.208"/><stop offset="0.582" stop-opacity="0.210"/><stop offset="0.666" stop-opacity="0.219"/><stop offset="0.749" stop-opacity="0.234"/><stop offset="0.832" stop-opacity="0.254"/><stop offset="0.915" stop-opacity="0.281"/><stop offset="1.000" stop-opacity="0.315"/></linearGradient><linearGradient id="f89" x1="0" x2="1202" y1="0" y2="0" gradientUnits="userSpaceOnUse"><stop offset="0.000" stop-opacity="0.311"/><stop offset="0.083" stop-opacity="0.277"/><stop offset="0.166" stop-opacity="0.250"/><stop offset="0.250" stop-opacity="0.229"/><stop offset="0.333" stop-opacity="0.214"/><stop offset="0.416" stop-opacity="0.205"/><stop offset="0.500" stop-opacity="0.202"/><stop offset="0.582" stop-opacity="0.204"/><stop offset="0.666" stop-opacity="0.213"/><stop offset="0.749" stop-opacity="0.227"/><stop offset="0.832" stop-opacity="0.247"/><stop offset="0.915" stop-opacity="0.273"/><stop offset="1.000" stop-opacity="0.306"/></linearGradient><linearGradient id="f90" x1="0" x2="1202" y1="0" y2="0" gradientUnits="userSpaceOnUse"><stop offset="0.000" stop-opacity="0.302"/><stop offset="0.083" stop-opacity="0.270"/><stop offset="0.166" stop-opacity="0.243"/><stop offset="0.250" stop-opacity="0.222"/><stop offset="0.333" stop-opacity="0.208"/><stop offset="0.416" stop-opacity="0.199"/><stop offset="0.500" stop-opacity="0.196"/><stop offset="0.582" stop-opacity="0.198"/><stop offset="0.666" stop-opacity="0.206"/><stop offset="0.749" stop-opacity="0.220"/><stop offset="0.832" stop-opacity="0.240"/><stop offset="0.915" stop-opacity="0.265"/><stop offset="1.000" stop-opacity="0.298"/></linearGradient><linearGradient id="f91" x1="0" x2="1202" y1="0" y2="0" gradientUnits="userSpaceOnUse"><stop offset="0.000" stop-opacity="0.294"/><stop offset="0.083" stop-opacity="0.262"/><stop offset="0.166" stop-opacity="0.236"/><stop offset="0.250" stop-opacity="0.216"/><stop offset="0.333" stop-opacity="0.202"/><stop offset="0.416" stop-opacity="0.193"/><stop offset="0.500" stop-opacity="0.190"/><stop offset="0.582" stop-opacity="0.192"/><stop offset="0.666" stop-opacity="0.200"/><stop offset="0.749" stop-opacity="0.214"/><stop offset="0.832" stop-opacity="0.233"/><stop offset="0.915" stop-opacity="0.258"/><stop offset="1.000" stop-opacity="0.289"/></linearGradient><linearGradient id="f92" x1="0" x2="1202" y1="0" y2="0" gradientUnits="userSpaceOnUse"><stop offset="0.000" stop-opacity="0.286"/><stop offset="0.083" stop-opacity="0.255"/><stop offset="0.166" stop-opacity="0.229"/><stop offset="0.250" stop-opacity="0.210"/><stop offset="0.333" stop-opacity="0.196"/><stop offset="0.416" stop-opacity="0.187"/><stop offset="0.500" stop-opacity="0.184"/><stop offset="0.582" stop-opacity="0.187"/><stop offset="0.666" stop-opacity="0.194"/><stop offset="0.749" stop-opacity="0.208"/><stop offset="0.832" stop-opacity="0.226"/><stop offset="0.915" stop-opacity="0.251"/><stop offset="1.000" stop-opacity="0.281"/></linearGradient><linearGradient id="f93" x1="0" x2="1202" y1="0" y2="0" gradientUnits="userSpaceOnUse"><stop offset="0.000" stop-opacity="0.278"/><stop offset="0.083" stop-opacity="0.248"/><stop offset="0.166" stop-opacity="0.223"/><stop offset="0.250" stop-opacity="0.204"/><stop offset="0.333" stop-opacity="0.190"/><stop offset="0.416" stop-opacity="0.182"/><stop offset="0.500" stop-opacity="0.179"/><stop offset="0.582" stop-opacity="0.181"/><stop offset="0.666" stop-opacity="0.189"/><stop offset="0.749" stop-opacity="0.202"/><stop offset="0.832" stop-opacity="0.220"/><stop offset="0.915" stop-opacity="0.244"/><stop offset="1.000" stop-opacity="0.274"/></linearGradient><linearGradient id="f94" x1="0" x2="1202" y1="0" y2="0" gradientUnits="userSpaceOnUse"><stop offset="0.000" stop-opacity="0.271"/><stop offset="0.083" stop-opacity="0.241"/><stop offset="0.166" stop-opacity="0.217"/><stop offset="0.250" stop-opacity="0.198"/><stop offset="0.333" stop-opacity="0.185"/><stop offset="0.416" stop-opacity="0.177"/><stop offset="0.500" stop-opacity="0.174"/><stop offset="0.582" stop-opacity="0.176"/><stop offset="0.666" stop-opacity="0.183"/><stop offset="0.749" stop-opacity="0.196"/><stop offset="0.832" stop-opacity="0.214"/><stop offset="0.915" stop-opacity="0.237"/><stop offset="1.000" stop-opacity="0.266"/></linearGradient><linearGradient id="f95" x1="0" x2="1202" y1="0" y2="0" gradientUnits="userSpaceOnUse"><stop offset="0.000" stop-opacity="0.263"/><stop offset="0.083" stop-opacity="0.234"/><stop offset="0.166" stop-opacity="0.210"/><stop offset="0.250" stop-opacity="0.192"/><stop offset="0.333" stop-opacity="0.179"/><stop offset="0.416" stop-opacity="0.171"/><stop offset="0.500" stop-opacity="0.169"/><stop offset="0.582" stop-opacity="0.171"/><stop offset="0.666" stop-opacity="0.178"/><stop offset="0.749" stop-opacity="0.190"/><stop offset="0.832" stop-opacity="0.208"/><stop offset="0.915" stop-opacity="0.231"/><stop offset="1.000" stop-opacity="0.259"/></linearGradient><linearGradient id="f96" x1="0" x2="1202" y1="0" y2="0" gradientUnits="userSpaceOnUse"><stop offset="0.000" stop-opacity="0.256"/><stop offset="0.083" stop-opacity="0.228"/><stop offset="0.166" stop-opacity="0.205"/><stop offset="0.250" stop-opacity="0.187"/><stop offset="0.333" stop-opacity="0.174"/><stop offset="0.416" stop-opacity="0.167"/><stop offset="0.500" stop-opacity="0.164"/><stop offset="0.582" stop-opacity="0.166"/><stop offset="0.666" stop-opacity="0.173"/><stop offset="0.749" stop-opacity="0.185"/><stop offset="0.832" stop-opacity="0.202"/><stop offset="0.915" stop-opacity="0.224"/><stop offset="1.000" stop-opacity="0.252"/></linearGradient><linearGradient id="f97" x1="0" x2="1202" y1="0" y2="0" gradientUnits="userSpaceOnUse"><stop offset="0.000" stop-opacity="0.249"/><stop offset="0.083" stop-opacity="0.222"/><stop offset="0.166" stop-opacity="0.199"/><stop offset="0.250" stop-opacity="0.182"/><stop offset="0.333" stop-opacity="0.169"/><stop offset="0.416" stop-opacity="0.162"/><stop offset="0.500" stop-opacity="0.159"/><stop offset="0.582" stop-opacity="0.161"/><stop offset="0.666" stop-opacity="0.168"/><stop offset="0.749" stop-opacity="0.180"/><stop offset="0.832" stop-opacity="0.197"/><stop offset="0.915" stop-opacity="0.218"/><stop offset="1.000" stop-opacity="0.246"/></linearGradient><linearGradient id="f98" x1="0" x2="1202" y1="0" y2="0" gradientUnits="userSpaceOnUse"><stop offset="0.000" stop-opacity="0.243"/><stop offset="0.083" stop-opacity="0.216"/><stop offset="0.166" stop-opacity="0.194"/><stop offset="0.250" stop-opacity="0.177"/><stop offset="0.333" stop-opacity="0.165"/><stop offset="0.416" stop-opacity="0.157"/><stop offset="0.500" stop-opacity="0.155"/><stop offset="0.582" stop-opacity="0.157"/><stop offset="0.666" stop-opacity="0.164"/><stop offset="0.749" stop-opacity="0.175"/><stop offset="0.832" stop-opacity="0.191"/><stop offset="0.915" stop-opacity="0.212"/><stop offset="1.000" stop-opacity="0.239"/></linearGradient><linearGradient id="f99" x1="0" x2="1202" y1="0" y2="0" gradientUnits="userSpaceOnUse"><stop offset="0.000" stop-opacity="0.236"/><stop offset="0.083" stop-opacity="0.210"/><stop offset="0.166" stop-opacity="0.188"/><stop offset="0.250" stop-opacity="0.172"/><stop offset="0.333" stop-opacity="0.160"/><stop offset="0.416" stop-opacity="0.153"/><stop offset="0.500" stop-opacity="0.151"/><stop offset="0.582" stop-opacity="0.153"/><stop offset="0.666" stop-opacity="0.159"/><stop offset="0.749" stop-opacity="0.170"/><stop offset="0.832" stop-opacity="0.186"/><stop offset="0.915" stop-opacity="0.207"/><stop offset="1.000" stop-opacity="0.233"/></linearGradient><linearGradient id="f100" x1="0" x2="1202" y1="0" y2="0" gradientUnits="userSpaceOnUse"><stop offset="0.000" stop-opacity="0.230"/><stop offset="0.083" stop-opacity="0.204"/><stop offset="0.166" stop-opacity="0.183"/><stop offset="0.250" stop-opacity="0.167"/><stop offset="0.333" stop-opacity="0.156"/><stop offset="0.416" stop-opacity="0.149"/><stop offset="0.500" stop-opacity="0.146"/><stop offset="0.582" stop-opacity="0.148"/><stop offset="0.666" stop-opacity="0.155"/><stop offset="0.749" stop-opacity="0.166"/><stop offset="0.832" stop-opacity="0.181"/><stop offset="0.915" stop-opacity="0.201"/><stop offset="1.000" stop-opacity="0.227"/></linearGradient><linearGradient id="f101" x1="0" x2="1202" y1="0" y2="0" gradientUnits="userSpaceOnUse"><stop offset="0.000" stop-opacity="0.224"/><stop offset="0.083" stop-opacity="0.199"/><stop offset="0.166" stop-opacity="0.178"/><stop offset="0.250" stop-opacity="0.163"/><stop offset="0.333" stop-opacity="0.151"/><stop offset="0.416" stop-opacity="0.145"/><stop offset="0.500" stop-opacity="0.142"/><stop offset="0.582" stop-opacity="0.144"/><stop offset="0.666" stop-opacity="0.150"/><stop offset="0.749" stop-opacity="0.161"/><stop offset="0.832" stop-opacity="0.176"/><stop offset="0.915" stop-opacity="0.196"/><stop offset="1.000" stop-opacity="0.221"/></linearGradient><linearGradient id="f102" x1="0" x2="1202" y1="0" y2="0" gradientUnits="userSpaceOnUse"><stop offset="0.000" stop-opacity="0.218"/><stop offset="0.083" stop-opacity="0.194"/><stop offset="0.166" stop-opacity="0.174"/><stop offset="0.250" stop-opacity="0.158"/><stop offset="0.333" stop-opacity="0.147"/><stop offset="0.416" stop-opacity="0.141"/><stop offset="0.500" stop-opacity="0.139"/><stop offset="0.582" stop-opacity="0.140"/><stop offset="0.666" stop-opacity="0.146"/><stop offset="0.749" stop-opacity="0.157"/><stop offset="0.832" stop-opacity="0.171"/><stop offset="0.915" stop-opacity="0.191"/><stop offset="1.000" stop-opacity="0.215"/></linearGradient><linearGradient id="f103" x1="0" x2="1202" y1="0" y2="0" gradientUnits="userSpaceOnUse"><stop offset="0.000" stop-opacity="0.213"/><stop offset="0.083" stop-opacity="0.189"/><stop offset="0.166" stop-opacity="0.169"/><stop offset="0.250" stop-opacity="0.154"/><stop offset="0.333" stop-opacity="0.143"/><stop offset="0.416" stop-opacity="0.137"/><stop offset="0.500" stop-opacity="0.135"/><stop offset="0.582" stop-opacity="0.137"/><stop offset="0.666" stop-opacity="0.143"/><stop offset="0.749" stop-opacity="0.153"/><stop offset="0.832" stop-opacity="0.167"/><stop offset="0.915" stop-opacity="0.186"/><stop offset="1.000" stop-opacity="0.210"/></linearGradient><linearGradient id="f104" x1="0" x2="1202" y1="0" y2="0" gradientUnits="userSpaceOnUse"><stop offset="0.000" stop-opacity="0.207"/><stop offset="0.083" stop-opacity="0.184"/><stop offset="0.166" stop-opacity="0.165"/><stop offset="0.250" stop-opacity="0.150"/><stop offset="0.333" stop-opacity="0.140"/><stop offset="0.416" stop-opacity="0.133"/><stop offset="0.500" stop-opacity="0.131"/><stop offset="0.582" stop-opacity="0.133"/><stop offset="0.666" stop-opacity="0.139"/><stop offset="0.749" stop-opacity="0.149"/><stop offset="0.832" stop-opacity="0.163"/><stop offset="0.915" stop-opacity="0.181"/><stop offset="1.000" stop-opacity="0.204"/></linearGradient><linearGradient id="f105" x1="0" x2="1202" y1="0" y2="0" gradientUnits="userSpaceOnUse"><stop offset="0.000" stop-opacity="0.202"/><stop offset="0.083" stop-opacity="0.179"/><stop offset="0.166" stop-opacity="0.160"/><stop offset="0.250" stop-opacity="0.146"/><stop offset="0.333" stop-opacity="0.136"/><stop offset="0.416" stop-opacity="0.130"/><stop offset="0.500" stop-opacity="0.128"/><stop offset="0.582" stop-opacity="0.129"/><stop offset="0.666" stop-opacity="0.135"/><stop offset="0.749" stop-opacity="0.145"/><stop offset="0.832" stop-opacity="0.158"/><stop offset="0.915" stop-opacity="0.176"/><stop offset="1.000" stop-opacity="0.199"/></linearGradient><linearGradient id="f106" x1="0" x2="1202" y1="0" y2="0" gradientUnits="userSpaceOnUse"><stop offset="0.000" stop-opacity="0.197"/><stop offset="0.083" stop-opacity="0.174"/><stop offset="0.166" stop-opacity="0.156"/><stop offset="0.250" stop-opacity="0.142"/><stop offset="0.333" stop-opacity="0.132"/><stop offset="0.416" stop-opacity="0.126"/><stop offset="0.500" stop-opacity="0.124"/><stop offset="0.582" stop-opacity="0.126"/><stop offset="0.666" stop-opacity="0.132"/><stop offset="0.749" stop-opacity="0.141"/><stop offset="0.832" stop-opacity="0.154"/><stop offset="0.915" stop-opacity="0.172"/><stop offset="1.000" stop-opacity="0.194"/></linearGradient><linearGradient id="f107" x1="0" x2="1202" y1="0" y2="0" gradientUnits="userSpaceOnUse"><stop offset="0.000" stop-opacity="0.192"/><stop offset="0.083" stop-opacity="0.170"/><stop offset="0.166" stop-opacity="0.152"/><stop offset="0.250" stop-opacity="0.139"/><stop offset="0.333" stop-opacity="0.129"/><stop offset="0.416" stop-opacity="0.123"/><stop offset="0.500" stop-opacity="0.121"/><stop offset="0.582" stop-opacity="0.123"/><stop offset="0.666" stop-opacity="0.128"/><stop offset="0.749" stop-opacity="0.137"/><stop offset="0.832" stop-opacity="0.150"/><stop offset="0.915" stop-opacity="0.167"/><stop offset="1.000" stop-opacity="0.189"/></linearGradient><linearGradient id="f108" x1="0" x2="1202" y1="0" y2="0" gradientUnits="userSpaceOnUse"><stop offset="0.000" stop-opacity="0.187"/><stop offset="0.083" stop-opacity="0.166"/><stop offset="0.166" stop-opacity="0.148"/><stop offset="0.250" stop-opacity="0.135"/><stop offset="0.333" stop-opacity="0.126"/><stop offset="0.416" stop-opacity="0.120"/><stop offset="0.500" stop-opacity="0.118"/><stop offset="0.582" stop-opacity="0.120"/><stop offset="0.666" stop-opacity="0.125"/><stop offset="0.749" stop-opacity="0.134"/><stop offset="0.832" stop-opacity="0.147"/><stop offset="0.915" stop-opacity="0.163"/><stop offset="1.000" stop-opacity="0.185"/></linearGradient><linearGradient id="f109" x1="0" x2="1202" y1="0" y2="0" gradientUnits="userSpaceOnUse"><stop offset="0.000" stop-opacity="0.183"/><stop offset="0.083" stop-opacity="0.161"/><stop offset="0.166" stop-opacity="0.144"/><stop offset="0.250" stop-opacity="0.132"/><stop offset="0.333" stop-opacity="0.122"/><stop offset="0.416" stop-opacity="0.117"/><stop offset="0.500" stop-opacity="0.115"/><stop offset="0.582" stop-opacity="0.117"/><stop offset="0.666" stop-opacity="0.122"/><stop offset="0.749" stop-opacity="0.130"/><stop offset="0.832" stop-opacity="0.143"/><stop offset="0.915" stop-opacity="0.159"/><stop offset="1.000" stop-opacity="0.180"/></linearGradient><linearGradient id="f110" x1="0" x2="1202" y1="0" y2="0" gradientUnits="userSpaceOnUse"><stop offset="0.000" stop-opacity="0.178"/><stop offset="0.083" stop-opacity="0.157"/><stop offset="0.166" stop-opacity="0.141"/><stop offset="0.250" stop-opacity="0.128"/><stop offset="0.333" stop-opacity="0.119"/><stop offset="0.416" stop-opacity="0.114"/><stop offset="0.500" stop-opacity="0.112"/><stop offset="0.582" stop-opacity="0.114"/><stop offset="0.666" stop-opacity="0.119"/><stop offset="0.749" stop-opacity="0.127"/><stop offset="0.832" stop-opacity="0.139"/><stop offset="0.915" stop-opacity="0.155"/><stop offset="1.000" stop-opacity="0.176"/></linearGradient><linearGradient id="f111" x1="0" x2="1202" y1="0" y2="0" gradientUnits="userSpaceOnUse"><stop offset="0.000" stop-opacity="0.172"/><stop offset="0.083" stop-opacity="0.152"/><stop offset="0.166" stop-opacity="0.136"/><stop offset="0.250" stop-opacity="0.123"/><stop offset="0.333" stop-opacity="0.115"/><stop offset="0.416" stop-opacity="0.110"/><stop offset="0.500" stop-opacity="0.108"/><stop offset="0.582" stop-opacity="0.109"/><stop offset="0.666" stop-opacity="0.114"/><stop offset="0.749" stop-opacity="0.122"/><stop offset="0.832" stop-opacity="0.134"/><stop offset="0.915" stop-opacity="0.150"/><stop offset="1.000" stop-opacity="0.169"/></linearGradient><linearGradient id="f112" x1="0" x2="1202" y1="0" y2="0" gradientUnits="userSpaceOnUse"><stop offset="0.000" stop-opacity="0.164"/><stop offset="0.083" stop-opacity="0.144"/><stop offset="0.166" stop-opacity="0.129"/><stop offset="0.250" stop-opacity="0.117"/><stop offset="0.333" stop-opacity="0.109"/><stop offset="0.416" stop-opacity="0.104"/><stop offset="0.500" stop-opacity="0.103"/><stop offset="0.582" stop-opacity="0.104"/><stop offset="0.666" stop-opacity="0.109"/><stop offset="0.749" stop-opacity="0.116"/><stop offset="0.832" stop-opacity="0.128"/><stop offset="0.915" stop-opacity="0.142"/><stop offset="1.000" stop-opacity="0.161"/></linearGradient><linearGradient id="f113" x1="0" x2="1202" y1="0" y2="0" gradientUnits="userSpaceOnUse"><stop offset="0.000" stop-opacity="0.156"/><stop offset="0.083" stop-opacity="0.138"/><stop offset="0.166" stop-opacity="0.123"/><stop offset="0.250" stop-opacity="0.112"/><stop offset="0.333" stop-opacity="0.104"/><stop offset="0.416" stop-opacity="0.099"/><stop offset="0.500" stop-opacity="0.098"/><stop offset="0.582" stop-opacity="0.099"/><stop offset="0.666" stop-opacity="0.103"/><stop offset="0.749" stop-opacity="0.111"/><stop offset="0.832" stop-opacity="0.122"/><stop offset="0.915" stop-opacity="0.136"/><stop offset="1.000" stop-opacity="0.154"/></linearGradient><linearGradient id="f114" x1="0" x2="1202" y1="0" y2="0" gradientUnits="userSpaceOnUse"><stop offset="0.000" stop-opacity="0.149"/><stop offset="0.083" stop-opacity="0.131"/><stop offset="0.166" stop-opacity="0.117"/><stop offset="0.250" stop-opacity="0.106"/><stop offset="0.333" stop-opacity="0.099"/><stop offset="0.416" stop-opacity="0.094"/><stop offset="0.500" stop-opacity="0.093"/><stop offset="0.582" stop-opacity="0.094"/><stop offset="0.666" stop-opacity="0.098"/><stop offset="0.749" stop-opacity="0.106"/><stop offset="0.832" stop-opacity="0.116"/><stop offset="0.915" stop-opacity="0.129"/><stop offset="1.000" stop-opacity="0.147"/></linearGradient><linearGradient id="f115" x1="0" x2="1202" y1="0" y2="0" gradientUnits="userSpaceOnUse"><stop offset="0.000" stop-opacity="0.142"/><stop offset="0.083" stop-opacity="0.125"/><stop offset="0.166" stop-opacity="0.112"/><stop offset="0.250" stop-opacity="0.101"/><stop offset="0.333" stop-opacity="0.094"/><stop offset="0.416" stop-opacity="0.090"/><stop offset="0.500" stop-opacity="0.089"/><stop offset="0.582" stop-opacity="0.090"/><stop offset="0.666" stop-opacity="0.094"/><stop offset="0.749" stop-opacity="0.101"/><stop offset="0.832" stop-opacity="0.110"/><stop offset="0.915" stop-opacity="0.123"/><stop offset="1.000" stop-opacity="0.140"/></linearGradient><linearGradient id="f116" x1="0" x2="1202" y1="0" y2="0" gradientUnits="userSpaceOnUse"><stop offset="0.000" stop-opacity="0.135"/><stop offset="0.083" stop-opacity="0.119"/><stop offset="0.166" stop-opacity="0.107"/><stop offset="0.250" stop-opacity="0.097"/><stop offset="0.333" stop-opacity="0.090"/><stop offset="0.416" stop-opacity="0.086"/><stop offset="0.500" stop-opacity="0.084"/><stop offset="0.582" stop-opacity="0.086"/><stop offset="0.666" stop-opacity="0.089"/><stop offset="0.749" stop-opacity="0.096"/><stop offset="0.832" stop-opacity="0.105"/><stop offset="0.915" stop-opacity="0.118"/><stop offset="1.000" stop-opacity="0.134"/></linearGradient><linearGradient id="f117" x1="0" x2="1202" y1="0" y2="0" gradientUnits="userSpaceOnUse"><stop offset="0.000" stop-opacity="0.129"/><stop offset="0.083" stop-opacity="0.114"/><stop offset="0.166" stop-opacity="0.102"/><stop offset="0.250" stop-opacity="0.092"/><stop offset="0.333" stop-opacity="0.086"/><stop offset="0.416" stop-opacity="0.082"/><stop offset="0.500" stop-opacity="0.081"/><stop offset="0.582" stop-opacity="0.082"/><stop offset="0.666" stop-opacity="0.085"/><stop offset="0.749" stop-opacity="0.092"/><stop offset="0.832" stop-opacity="0.101"/><stop offset="0.915" stop-opacity="0.113"/><stop offset="1.000" stop-opacity="0.128"/></linearGradient><linearGradient id="f118" x1="0" x2="1202" y1="0" y2="0" gradientUnits="userSpaceOnUse"><stop offset="0.000" stop-opacity="0.124"/><stop offset="0.083" stop-opacity="0.109"/><stop offset="0.166" stop-opacity="0.097"/><stop offset="0.250" stop-opacity="0.088"/><stop offset="0.333" stop-opacity="0.082"/><stop offset="0.416" stop-opacity="0.078"/><stop offset="0.500" stop-opacity="0.077"/><stop offset="0.582" stop-opacity="0.078"/><stop offset="0.666" stop-opacity="0.082"/><stop offset="0.749" stop-opacity="0.088"/><stop offset="0.832" stop-opacity="0.096"/><stop offset="0.915" stop-opacity="0.108"/><stop offset="1.000" stop-opacity="0.122"/></linearGradient><linearGradient id="f119" x1="0" x2="1202" y1="0" y2="0" gradientUnits="userSpaceOnUse"><stop offset="0.000" stop-opacity="0.118"/><stop offset="0.083" stop-opacity="0.104"/><stop offset="0.166" stop-opacity="0.093"/><stop offset="0.250" stop-opacity="0.084"/><stop offset="0.333" stop-opacity="0.078"/><stop offset="0.416" stop-opacity="0.075"/><stop offset="0.500" stop-opacity="0.074"/><stop offset="0.582" stop-opacity="0.075"/><stop offset="0.666" stop-opacity="0.078"/><stop offset="0.749" stop-opacity="0.084"/><stop offset="0.832" stop-opacity="0.092"/><stop offset="0.915" stop-opacity="0.103"/><stop offset="1.000" stop-opacity="0.117"/></linearGradient><linearGradient id="f120" x1="0" x2="1202" y1="0" y2="0" gradientUnits="userSpaceOnUse"><stop offset="0.000" stop-opacity="0.113"/><stop offset="0.083" stop-opacity="0.100"/><stop offset="0.166" stop-opacity="0.089"/><stop offset="0.250" stop-opacity="0.081"/><stop offset="0.333" stop-opacity="0.075"/><stop offset="0.416" stop-opacity="0.072"/><stop offset="0.500" stop-opacity="0.070"/><stop offset="0.582" stop-opacity="0.071"/><stop offset="0.666" stop-opacity="0.075"/><stop offset="0.749" stop-opacity="0.080"/><stop offset="0.832" stop-opacity="0.088"/><stop offset="0.915" stop-opacity="0.098"/><stop offset="1.000" stop-opacity="0.112"/></linearGradient><linearGradient id="f121" x1="0" x2="1202" y1="0" y2="0" gradientUnits="userSpaceOnUse"><stop offset="0.000" stop-opacity="0.109"/><stop offset="0.083" stop-opacity="0.095"/><stop offset="0.166" stop-opacity="0.085"/><stop offset="0.250" stop-opacity="0.077"/><stop offset="0.333" stop-opacity="0.072"/><stop offset="0.416" stop-opacity="0.069"/><stop offset="0.500" stop-opacity="0.067"/><stop offset="0.582" stop-opacity="0.068"/><stop offset="0.666" stop-opacity="0.071"/><stop offset="0.749" stop-opacity="0.077"/><stop offset="0.832" stop-opacity="0.084"/><stop offset="0.915" stop-opacity="0.094"/><stop offset="1.000" stop-opacity="0.107"/></linearGradient><linearGradient id="f122" x1="0" x2="1202" y1="0" y2="0" gradientUnits="userSpaceOnUse"><stop offset="0.000" stop-opacity="0.104"/><stop offset="0.083" stop-opacity="0.091"/><stop offset="0.166" stop-opacity="0.082"/><stop offset="0.250" stop-opacity="0.074"/><stop offset="0.333" stop-opacity="0.069"/><stop offset="0.416" stop-opacity="0.066"/><stop offset="0.500" stop-opacity="0.065"/><stop offset="0.582" stop-opacity="0.065"/><stop offset="0.666" stop-opacity="0.068"/><stop offset="0.749" stop-opacity="0.073"/><stop offset="0.832" stop-opacity="0.081"/><stop offset="0.915" stop-opacity="0.090"/><stop offset="1.000" stop-opacity="0.103"/></linearGradient><linearGradient id="f123" x1="0" x2="1202" y1="0" y2="0" gradientUnits="userSpaceOnUse"><stop offset="0.000" stop-opacity="0.100"/><stop offset="0.083" stop-opacity="0.088"/><stop offset="0.166" stop-opacity="0.078"/><stop offset="0.250" stop-opacity="0.071"/><stop offset="0.333" stop-opacity="0.066"/><stop offset="0.416" stop-opacity="0.063"/><stop offset="0.500" stop-opacity="0.062"/><stop offset="0.582" stop-opacity="0.063"/><stop offset="0.666" stop-opacity="0.066"/><stop offset="0.749" stop-opacity="0.070"/><stop offset="0.832" stop-opacity="0.077"/><stop offset="0.915" stop-opacity="0.087"/><stop offset="1.000" stop-opacity="0.099"/></linearGradient><linearGradient id="f124" x1="0" x2="1202" y1="0" y2="0" gradientUnits="userSpaceOnUse"><stop offset="0.000" stop-opacity="0.096"/><stop offset="0.083" stop-opacity="0.084"/><stop offset="0.166" stop-opacity="0.075"/><stop offset="0.250" stop-opacity="0.068"/><stop offset="0.333" stop-opacity="0.063"/><stop offset="0.416" stop-opacity="0.060"/><stop offset="0.500" stop-opacity="0.059"/><stop offset="0.582" stop-opacity="0.060"/><stop offset="0.666" stop-opacity="0.063"/><stop offset="0.749" stop-opacity="0.068"/><stop offset="0.832" stop-opacity="0.074"/><stop offset="0.915" stop-opacity="0.083"/><stop offset="1.000" stop-opacity="0.095"/></linearGradient><linearGradient id="f125" x1="0" x2="1202" y1="0" y2="0" gradientUnits="userSpaceOnUse"><stop offset="0.000" stop-opacity="0.092"/><stop offset="0.083" stop-opacity="0.081"/><stop offset="0.166" stop-opacity="0.072"/><stop offset="0.250" stop-opacity="0.065"/><stop offset="0.333" stop-opacity="0.061"/><stop offset="0.416" stop-opacity="0.058"/><stop offset="0.500" stop-opacity="0.057"/><stop offset="0.582" stop-opacity="0.058"/><stop offset="0.666" stop-opacity="0.060"/><stop offset="0.749" stop-opacity="0.065"/><stop offset="0.832" stop-opacity="0.071"/><stop offset="0.915" stop-opacity="0.080"/><stop offset="1.000" stop-opacity="0.091"/></linearGradient><linearGradient id="f126" x1="0" x2="1202" y1="0" y2="0" gradientUnits="userSpaceOnUse"><stop offset="0.000" stop-opacity="0.088"/><stop offset="0.083" stop-opacity="0.078"/><stop offset="0.166" stop-opacity="0.069"/><stop offset="0.250" stop-opacity="0.063"/><stop offset="0.333" stop-opacity="0.058"/><stop offset="0.416" stop-opacity="0.056"/><stop offset="0.500" stop-opacity="0.055"/><stop offset="0.582" stop-opacity="0.055"/><stop offset="0.666" stop-opacity="0.058"/><stop offset="0.749" stop-opacity="0.062"/><stop offset="0.832" stop-opacity="0.068"/><stop offset="0.915" stop-opacity="0.077"/><stop offset="1.000" stop-opacity="0.087"/></linearGradient><linearGradient id="f127" x1="0" x2="1202" y1="0" y2="0" gradientUnits="userSpaceOnUse"><stop offset="0.000" stop-opacity="0.085"/><stop offset="0.083" stop-opacity="0.075"/><stop offset="0.166" stop-opacity="0.066"/><stop offset="0.250" stop-opacity="0.060"/><stop offset="0.333" stop-opacity="0.056"/><stop offset="0.416" stop-opacity="0.053"/><stop offset="0.500" stop-opacity="0.052"/><stop offset="0.582" stop-opacity="0.053"/><stop offset="0.666" stop-opacity="0.056"/><stop offset="0.749" stop-opacity="0.060"/><stop offset="0.832" stop-opacity="0.066"/><stop offset="0.915" stop-opacity="0.074"/><stop offset="1.000" stop-opacity="0.084"/></linearGradient><linearGradient id="f128" x1="0" x2="1202" y1="0" y2="0" gradientUnits="userSpaceOnUse"><stop offset="0.000" stop-opacity="0.082"/><stop offset="0.083" stop-opacity="0.072"/><stop offset="0.166" stop-opacity="0.064"/><stop offset="0.250" stop-opacity="0.058"/><stop offset="0.333" stop-opacity="0.054"/><stop offset="0.416" stop-opacity="0.051"/><stop offset="0.500" stop-opacity="0.050"/><stop offset="0.582" stop-opacity="0.051"/><stop offset="0.666" stop-opacity="0.053"/><stop offset="0.749" stop-opacity="0.057"/><stop offset="0.832" stop-opacity="0.063"/><stop offset="0.915" stop-opacity="0.071"/><stop offset="1.000" stop-opacity="0.081"/></linearGradient><linearGradient id="f129" x1="0" x2="1202" y1="0" y2="0" gradientUnits="userSpaceOnUse"><stop offset="0.000" stop-opacity="0.078"/><stop offset="0.083" stop-opacity="0.069"/><stop offset="0.166" stop-opacity="0.061"/><stop offset="0.250" stop-opacity="0.056"/><stop offset="0.333" stop-opacity="0.052"/><stop offset="0.416" stop-opacity="0.049"/><stop offset="0.500" stop-opacity="0.049"/><stop offset="0.582" stop-opacity="0.049"/><stop offset="0.666" stop-opacity="0.051"/><stop offset="0.749" stop-opacity="0.055"/><stop offset="0.832" stop-opacity="0.061"/><stop offset="0.915" stop-opacity="0.068"/><stop offset="1.000" stop-opacity="0.078"/></linearGradient><linearGradient id="f130" x1="0" x2="1202" y1="0" y2="0" gradientUnits="userSpaceOnUse"><stop offset="0.000" stop-opacity="0.076"/><stop offset="0.083" stop-opacity="0.066"/><stop offset="0.166" stop-opacity="0.059"/><stop offset="0.250" stop-opacity="0.054"/><stop offset="0.333" stop-opacity="0.050"/><stop offset="0.416" stop-opacity="0.047"/><stop offset="0.500" stop-opacity="0.047"/><stop offset="0.582" stop-opacity="0.047"/><stop offset="0.666" stop-opacity="0.050"/><stop offset="0.749" stop-opacity="0.053"/><stop offset="0.832" stop-opacity="0.059"/><stop offset="0.915" stop-opacity="0.066"/><stop offset="1.000" stop-opacity="0.075"/></linearGradient><linearGradient id="f131" x1="0" x2="1202" y1="0" y2="0" gradientUnits="userSpaceOnUse"><stop offset="0.000" stop-opacity="0.073"/><stop offset="0.083" stop-opacity="0.064"/><stop offset="0.166" stop-opacity="0.057"/><stop offset="0.250" stop-opacity="0.052"/><stop offset="0.333" stop-opacity="0.048"/><stop offset="0.416" stop-opacity="0.046"/><stop offset="0.500" stop-opacity="0.045"/><stop offset="0.582" stop-opacity="0.046"/><stop offset="0.666" stop-opacity="0.048"/><stop offset="0.749" stop-opacity="0.051"/><stop offset="0.832" stop-opacity="0.056"/><stop offset="0.915" stop-opacity="0.063"/><stop offset="1.000" stop-opacity="0.072"/></linearGradient><linearGradient id="f132" x1="0" x2="1202" y1="0" y2="0" gradientUnits="userSpaceOnUse"><stop offset="0.000" stop-opacity="0.070"/><stop offset="0.083" stop-opacity="0.062"/><stop offset="0.166" stop-opacity="0.055"/><stop offset="0.250" stop-opacity="0.050"/><stop offset="0.333" stop-opacity="0.046"/><stop offset="0.416" stop-opacity="0.044"/><stop offset="0.500" stop-opacity="0.043"/><stop offset="0.582" stop-opacity="0.044"/><stop offset="0.666" stop-opacity="0.046"/><stop offset="0.749" stop-opacity="0.049"/><stop offset="0.832" stop-opacity="0.054"/><stop offset="0.915" stop-opacity="0.061"/><stop offset="1.000" stop-opacity="0.069"/></linearGradient><linearGradient id="f133" x1="0" x2="1202" y1="0" y2="0" gradientUnits="userSpaceOnUse"><stop offset="0.000" stop-opacity="0.068"/><stop offset="0.083" stop-opacity="0.059"/><stop offset="0.166" stop-opacity="0.053"/><stop offset="0.250" stop-opacity="0.048"/><stop offset="0.333" stop-opacity="0.044"/><stop offset="0.416" stop-opacity="0.042"/><stop offset="0.500" stop-opacity="0.042"/><stop offset="0.582" stop-opacity="0.042"/><stop offset="0.666" stop-opacity="0.044"/><stop offset="0.749" stop-opacity="0.048"/><stop offset="0.832" stop-opacity="0.052"/><stop offset="0.915" stop-opacity="0.059"/><stop offset="1.000" stop-opacity="0.067"/></linearGradient><linearGradient id="f134" x1="0" x2="1202" y1="0" y2="0" gradientUnits="userSpaceOnUse"><stop offset="0.000" stop-opacity="0.065"/><stop offset="0.083" stop-opacity="0.057"/><stop offset="0.166" stop-opacity="0.051"/><stop offset="0.250" stop-opacity="0.046"/><stop offset="0.333" stop-opacity="0.043"/><stop offset="0.416" stop-opacity="0.041"/><stop offset="0.500" stop-opacity="0.040"/><stop offset="0.582" stop-opacity="0.041"/><stop offset="0.666" stop-opacity="0.043"/><stop offset="0.749" stop-opacity="0.046"/><stop offset="0.832" stop-opacity="0.050"/><stop offset="0.915" stop-opacity="0.057"/><stop offset="1.000" stop-opacity="0.064"/></linearGradient><linearGradient id="f135" x1="0" x2="1202" y1="0" y2="0" gradientUnits="userSpaceOnUse"><stop offset="0.000" stop-opacity="0.063"/><stop offset="0.083" stop-opacity="0.055"/><stop offset="0.166" stop-opacity="0.049"/><stop offset="0.250" stop-opacity="0.045"/><stop offset="0.333" stop-opacity="0.041"/><stop offset="0.416" stop-opacity="0.039"/><stop offset="0.500" stop-opacity="0.039"/><stop offset="0.582" stop-opacity="0.039"/><stop offset="0.666" stop-opacity="0.041"/><stop offset="0.749" stop-opacity="0.044"/><stop offset="0.832" stop-opacity="0.049"/><stop offset="0.915" stop-opacity="0.055"/><stop offset="1.000" stop-opacity="0.062"/></linearGradient><linearGradient id="f136" x1="0" x2="1202" y1="0" y2="0" gradientUnits="userSpaceOnUse"><stop offset="0.000" stop-opacity="0.061"/><stop offset="0.083" stop-opacity="0.053"/><stop offset="0.166" stop-opacity="0.047"/><stop offset="0.250" stop-opacity="0.043"/><stop offset="0.333" stop-opacity="0.040"/><stop offset="0.416" stop-opacity="0.038"/><stop offset="0.500" stop-opacity="0.037"/><stop offset="0.582" stop-opacity="0.038"/><stop offset="0.666" stop-opacity="0.040"/><stop offset="0.749" stop-opacity="0.043"/><stop offset="0.832" stop-opacity="0.047"/><stop offset="0.915" stop-opacity="0.053"/><stop offset="1.000" stop-opacity="0.060"/></linearGradient><linearGradient id="f137" x1="0" x2="1202" y1="0" y2="0" gradientUnits="userSpaceOnUse"><stop offset="0.000" stop-opacity="0.059"/><stop offset="0.083" stop-opacity="0.051"/><stop offset="0.166" stop-opacity="0.046"/><stop offset="0.250" stop-opacity="0.042"/><stop offset="0.333" stop-opacity="0.039"/><stop offset="0.416" stop-opacity="0.037"/><stop offset="0.500" stop-opacity="0.036"/><stop offset="0.582" stop-opacity="0.037"/><stop offset="0.666" stop-opacity="0.038"/><stop offset="0.749" stop-opacity="0.041"/><stop offset="0.832" stop-opacity="0.045"/><stop offset="0.915" stop-opacity="0.051"/><stop offset="1.000" stop-opacity="0.058"/></linearGradient><linearGradient id="f138" x1="0" x2="1202" y1="0" y2="0" gradientUnits="userSpaceOnUse"><stop offset="0.000" stop-opacity="0.057"/><stop offset="0.083" stop-opacity="0.050"/><stop offset="0.166" stop-opacity="0.044"/><stop offset="0.250" stop-opacity="0.040"/><stop offset="0.333" stop-opacity="0.037"/><stop offset="0.416" stop-opacity="0.036"/><stop offset="0.500" stop-opacity="0.035"/><stop offset="0.582" stop-opacity="0.035"/><stop offset="0.666" stop-opacity="0.037"/><stop offset="0.749" stop-opacity="0.040"/><stop offset="0.832" stop-opacity="0.044"/><stop offset="0.915" stop-opacity="0.049"/><stop offset="1.000" stop-opacity="0.056"/></linearGradient><linearGradient id="f139" x1="0" x2="1202" y1="0" y2="0" gradientUnits="userSpaceOnUse"><stop offset="0.000" stop-opacity="0.055"/><stop offset="0.083" stop-opacity="0.048"/><stop offset="0.166" stop-opacity="0.043"/><stop offset="0.250" stop-opacity="0.039"/><stop offset="0.333" stop-opacity="0.036"/><stop offset="0.416" stop-opacity="0.034"/><stop offset="0.500" stop-opacity="0.034"/><stop offset="0.582" stop-opacity="0.034"/><stop offset="0.666" stop-opacity="0.036"/><stop offset="0.749" stop-opacity="0.039"/><stop offset="0.832" stop-opacity="0.042"/><stop offset="0.915" stop-opacity="0.048"/><stop offset="1.000" stop-opacity="0.054"/></linearGradient><linearGradient id="f140" x1="0" x2="1202" y1="0" y2="0" gradientUnits="userSpaceOnUse"><stop offset="0.000" stop-opacity="0.053"/><stop offset="0.083" stop-opacity="0.046"/><stop offset="0.166" stop-opacity="0.041"/><stop offset="0.250" stop-opacity="0.038"/><stop offset="0.333" stop-opacity="0.035"/><stop offset="0.416" stop-opacity="0.033"/><stop offset="0.500" stop-opacity="0.033"/><stop offset="0.582" stop-opacity="0.033"/><stop offset="0.666" stop-opacity="0.035"/><stop offset="0.749" stop-opacity="0.037"/><stop offset="0.832" stop-opacity="0.041"/><stop offset="0.915" stop-opacity="0.046"/><stop offset="1.000" stop-opacity="0.052"/></linearGradient><linearGradient id="f141" x1="0" x2="1202" y1="0" y2="0" gradientUnits="userSpaceOnUse"><stop offset="0.000" stop-opacity="0.051"/><stop offset="0.083" stop-opacity="0.045"/><stop offset="0.166" stop-opacity="0.040"/><stop offset="0.250" stop-opacity="0.036"/><stop offset="0.333" stop-opacity="0.034"/><stop offset="0.416" stop-opacity="0.032"/><stop offset="0.500" stop-opacity="0.032"/><stop offset="0.582" stop-opacity="0.032"/><stop offset="0.666" stop-opacity="0.034"/><stop offset="0.749" stop-opacity="0.036"/><stop offset="0.832" stop-opacity="0.040"/><stop offset="0.915" stop-opacity="0.044"/><stop offset="1.000" stop-opacity="0.051"/></linearGradient><linearGradient id="f142" x1="0" x2="1202" y1="0" y2="0" gradientUnits="userSpaceOnUse"><stop offset="0.000" stop-opacity="0.049"/><stop offset="0.083" stop-opacity="0.043"/><stop offset="0.166" stop-opacity="0.039"/><stop offset="0.250" stop-opacity="0.035"/><stop offset="0.333" stop-opacity="0.033"/><stop offset="0.416" stop-opacity="0.031"/><stop offset="0.500" stop-opacity="0.031"/><stop offset="0.582" stop-opacity="0.031"/><stop offset="0.666" stop-opacity="0.032"/><stop offset="0.749" stop-opacity="0.035"/><stop offset="0.832" stop-opacity="0.038"/><stop offset="0.915" stop-opacity="0.043"/><stop offset="1.000" stop-opacity="0.049"/></linearGradient><linearGradient id="f143" x1="0" x2="1202" y1="0" y2="0" gradientUnits="userSpaceOnUse"><stop offset="0.000" stop-opacity="0.048"/><stop offset="0.083" stop-opacity="0.042"/><stop offset="0.166" stop-opacity="0.037"/><stop offset="0.250" stop-opacity="0.034"/><stop offset="0.333" stop-opacity="0.032"/><stop offset="0.416" stop-opacity="0.030"/><stop offset="0.500" stop-opacity="0.030"/><stop offset="0.582" stop-opacity="0.030"/><stop offset="0.666" stop-opacity="0.031"/><stop offset="0.749" stop-opacity="0.034"/><stop offset="0.832" stop-opacity="0.037"/><stop offset="0.915" stop-opacity="0.042"/><stop offset="1.000" stop-opacity="0.047"/></linearGradient><linearGradient id="f144" x1="0" x2="1202" y1="0" y2="0" gradientUnits="userSpaceOnUse"><stop offset="0.000" stop-opacity="0.046"/><stop offset="0.083" stop-opacity="0.041"/><stop offset="0.166" stop-opacity="0.036"/><stop offset="0.250" stop-opacity="0.033"/><stop offset="0.333" stop-opacity="0.031"/><stop offset="0.416" stop-opacity="0.029"/><stop offset="0.500" stop-opacity="0.029"/><stop offset="0.582" stop-opacity="0.029"/><stop offset="0.666" stop-opacity="0.030"/><stop offset="0.749" stop-opacity="0.033"/><stop offset="0.832" stop-opacity="0.036"/><stop offset="0.915" stop-opacity="0.040"/><stop offset="1.000" stop-opacity="0.046"/></linearGradient><linearGradient id="f145" x1="0" x2="1202" y1="0" y2="0" gradientUnits="userSpaceOnUse"><stop offset="0.000" stop-opacity="0.045"/><stop offset="0.083" stop-opacity="0.039"/><stop offset="0.166" stop-opacity="0.035"/><stop offset="0.250" stop-opacity="0.032"/><stop offset="0.333" stop-opacity="0.030"/><stop offset="0.416" stop-opacity="0.028"/><stop offset="0.500" stop-opacity="0.028"/><stop offset="0.582" stop-opacity="0.028"/><stop offset="0.666" stop-opacity="0.030"/><stop offset="0.749" stop-opacity="0.032"/><stop offset="0.832" stop-opacity="0.035"/><stop offset="0.915" stop-opacity="0.039"/><stop offset="1.000" stop-opacity="0.045"/></linearGradient><linearGradient id="f146" x1="0" x2="1202" y1="0" y2="0" gradientUnits="userSpaceOnUse"><stop offset="0.000" stop-opacity="0.044"/><stop offset="0.083" stop-opacity="0.038"/><stop offset="0.166" stop-opacity="0.034"/><stop offset="0.250" stop-opacity="0.031"/><stop offset="0.333" stop-opacity="0.029"/><stop offset="0.416" stop-opacity="0.027"/><stop offset="0.500" stop-opacity="0.027"/><stop offset="0.582" stop-opacity="0.027"/><stop offset="0.666" stop-opacity="0.029"/><stop offset="0.749" stop-opacity="0.031"/><stop offset="0.832" stop-opacity="0.034"/><stop offset="0.915" stop-opacity="0.038"/><stop offset="1.000" stop-opacity="0.043"/></linearGradient><linearGradient id="f147" x1="0" x2="1202" y1="0" y2="0" gradientUnits="userSpaceOnUse"><stop offset="0.000" stop-opacity="0.042"/><stop offset="0.083" stop-opacity="0.037"/><stop offset="0.166" stop-opacity="0.033"/><stop offset="0.250" stop-opacity="0.030"/><stop offset="0.333" stop-opacity="0.028"/><stop offset="0.416" stop-opacity="0.027"/><stop offset="0.500" stop-opacity="0.026"/><stop offset="0.582" stop-opacity="0.027"/><stop offset="0.666" stop-opacity="0.028"/><stop offset="0.749" stop-opacity="0.030"/><stop offset="0.832" stop-opacity="0.033"/><stop offset="0.915" stop-opacity="0.037"/><stop offset="1.000" stop-opacity="0.042"/></linearGradient><linearGradient id="f148" x1="0" x2="1202" y1="0" y2="0" gradientUnits="userSpaceOnUse"><stop offset="0.000" stop-opacity="0.041"/><stop offset="0.083" stop-opacity="0.036"/><stop offset="0.166" stop-opacity="0.032"/><stop offset="0.250" stop-opacity="0.029"/><stop offset="0.333" stop-opacity="0.027"/><stop offset="0.416" stop-opacity="0.026"/><stop offset="0.500" stop-opacity="0.025"/><stop offset="0.582" stop-opacity="0.026"/><stop offset="0.666" stop-opacity="0.027"/><stop offset="0.749" stop-opacity="0.029"/><stop offset="0.832" stop-opacity="0.032"/><stop offset="0.915" stop-opacity="0.036"/><stop offset="1.000" stop-opacity="0.041"/></linearGradient><linearGradient id="f149" x1="0" x2="1202" y1="0" y2="0" gradientUnits="userSpaceOnUse"><stop offset="0.000" stop-opacity="0.040"/><stop offset="0.083" stop-opacity="0.035"/><stop offset="0.166" stop-opacity="0.031"/><stop offset="0.250" stop-opacity="0.028"/><stop offset="0.333" stop-opacity="0.026"/><stop offset="0.416" stop-opacity="0.025"/><stop offset="0.500" stop-opacity="0.025"/><stop offset="0.582" stop-opacity="0.025"/><stop offset="0.666" stop-opacity="0.026"/><stop offset="0.749" stop-opacity="0.028"/><stop offset="0.832" stop-opacity="0.031"/><stop offset="0.915" stop-opacity="0.035"/><stop offset="1.000" stop-opacity="0.039"/></linearGradient><linearGradient id="f150" x1="0" x2="1202" y1="0" y2="0" gradientUnits="userSpaceOnUse"><stop offset="0.000" stop-opacity="0.039"/><stop offset="0.083" stop-opacity="0.034"/><stop offset="0.166" stop-opacity="0.030"/><stop offset="0.250" stop-opacity="0.027"/><stop offset="0.333" stop-opacity="0.025"/><stop offset="0.416" stop-opacity="0.024"/><stop offset="0.500" stop-opacity="0.024"/><stop offset="0.582" stop-opacity="0.024"/><stop offset="0.666" stop-opacity="0.025"/><stop offset="0.749" stop-opacity="0.027"/><stop offset="0.832" stop-opacity="0.030"/><stop offset="0.915" stop-opacity="0.034"/><stop offset="1.000" stop-opacity="0.038"/></linearGradient><linearGradient id="f151" x1="0" x2="1202" y1="0" y2="0" gradientUnits="userSpaceOnUse"><stop offset="0.000" stop-opacity="0.037"/><stop offset="0.083" stop-opacity="0.032"/><stop offset="0.166" stop-opacity="0.029"/><stop offset="0.250" stop-opacity="0.026"/><stop offset="0.333" stop-opacity="0.024"/><stop offset="0.416" stop-opacity="0.023"/><stop offset="0.500" stop-opacity="0.023"/><stop offset="0.582" stop-opacity="0.023"/><stop offset="0.666" stop-opacity="0.024"/><stop offset="0.749" stop-opacity="0.026"/><stop offset="0.832" stop-opacity="0.029"/><stop offset="0.915" stop-opacity="0.032"/><stop offset="1.000" stop-opacity="0.037"/></linearGradient><linearGradient id="f152" x1="0" x2="1202" y1="0" y2="0" gradientUnits="userSpaceOnUse"><stop offset="0.000" stop-opacity="0.035"/><stop offset="0.083" stop-opacity="0.031"/><stop offset="0.166" stop-opacity="0.027"/><stop offset="0.250" stop-opacity="0.025"/><stop offset="0.333" stop-opacity="0.023"/><stop offset="0.416" stop-opacity="0.022"/><stop offset="0.500" stop-opacity="0.022"/><stop offset="0.582" stop-opacity="0.022"/><stop offset="0.666" stop-opacity="0.023"/><stop offset="0.749" stop-opacity="0.025"/><stop offset="0.832" stop-opacity="0.027"/><stop offset="0.915" stop-opacity="0.030"/><stop offset="1.000" stop-opacity="0.035"/></linearGradient><linearGradient id="f153" x1="0" x2="1202" y1="0" y2="0" gradientUnits="userSpaceOnUse"><stop offset="0.000" stop-opacity="0.033"/><stop offset="0.083" stop-opacity="0.029"/><stop offset="0.166" stop-opacity="0.026"/><stop offset="0.250" stop-opacity="0.023"/><stop offset="0.333" stop-opacity="0.022"/><stop offset="0.416" stop-opacity="0.021"/><stop offset="0.500" stop-opacity="0.020"/><stop offset="0.582" stop-opacity="0.021"/><stop offset="0.666" stop-opacity="0.022"/><stop offset="0.749" stop-opacity="0.023"/><stop offset="0.832" stop-opacity="0.026"/><stop offset="0.915" stop-opacity="0.029"/><stop offset="1.000" stop-opacity="0.033"/></linearGradient><linearGradient id="f154" x1="0" x2="1202" y1="0" y2="0" gradientUnits="userSpaceOnUse"><stop offset="0.000" stop-opacity="0.031"/><stop offset="0.083" stop-opacity="0.027"/><stop offset="0.166" stop-opacity="0.024"/><stop offset="0.250" stop-opacity="0.022"/><stop offset="0.333" stop-opacity="0.021"/><stop offset="0.416" stop-opacity="0.020"/><stop offset="0.500" stop-opacity="0.019"/><stop offset="0.582" stop-opacity="0.020"/><stop offset="0.666" stop-opacity="0.021"/><stop offset="0.749" stop-opacity="0.022"/><stop offset="0.832" stop-opacity="0.024"/><stop offset="0.915" stop-opacity="0.027"/><stop offset="1.000" stop-opacity="0.031"/></linearGradient><linearGradient id="f155" x1="0" x2="1202" y1="0" y2="0" gradientUnits="userSpaceOnUse"><stop offset="0.000" stop-opacity="0.030"/><stop offset="0.083" stop-opacity="0.026"/><stop offset="0.166" stop-opacity="0.023"/><stop offset="0.250" stop-opacity="0.021"/><stop offset="0.333" stop-opacity="0.020"/><stop offset="0.416" stop-opacity="0.019"/><stop offset="0.500" stop-opacity="0.018"/><stop offset="0.582" stop-opacity="0.019"/><stop offset="0.666" stop-opacity="0.020"/><stop offset="0.749" stop-opacity="0.021"/><stop offset="0.832" stop-opacity="0.023"/><stop offset="0.915" stop-opacity="0.026"/><stop offset="1.000" stop-opacity="0.029"/></linearGradient><linearGradient id="f156" x1="0" x2="1202" y1="0" y2="0" gradientUnits="userSpaceOnUse"><stop offset="0.000" stop-opacity="0.028"/><stop offset="0.083" stop-opacity="0.025"/><stop offset="0.166" stop-opacity="0.022"/><stop offset="0.250" stop-opacity="0.020"/><stop offset="0.333" stop-opacity="0.019"/><stop offset="0.416" stop-opacity="0.018"/><stop offset="0.500" stop-opacity="0.017"/><stop offset="0.582" stop-opacity="0.018"/><stop offset="0.666" stop-opacity="0.019"/><stop offset="0.749" stop-opacity="0.020"/><stop offset="0.832" stop-opacity="0.022"/><stop offset="0.915" stop-opacity="0.024"/><stop offset="1.000" stop-opacity="0.028"/></linearGradient><linearGradient id="f157" x1="0" x2="1202" y1="0" y2="0" gradientUnits="userSpaceOnUse"><stop offset="0.000" stop-opacity="0.027"/><stop offset="0.083" stop-opacity="0.023"/><stop offset="0.166" stop-opacity="0.021"/><stop offset="0.250" stop-opacity="0.019"/><stop offset="0.333" stop-opacity="0.018"/><stop offset="0.416" stop-opacity="0.017"/><stop offset="0.500" stop-opacity="0.017"/><stop offset="0.582" stop-opacity="0.017"/><stop offset="0.666" stop-opacity="0.018"/><stop offset="0.749" stop-opacity="0.019"/><stop offset="0.832" stop-opacity="0.021"/><stop offset="0.915" stop-opacity="0.023"/><stop offset="1.000" stop-opacity="0.026"/></linearGradient><linearGradient id="f158" x1="0" x2="1202" y1="0" y2="0" gradientUnits="userSpaceOnUse"><stop offset="0.000" stop-opacity="0.025"/><stop offset="0.083" stop-opacity="0.022"/><stop offset="0.166" stop-opacity="0.020"/><stop offset="0.250" stop-opacity="0.018"/><stop offset="0.333" stop-opacity="0.017"/><stop offset="0.416" stop-opacity="0.016"/><stop offset="0.500" stop-opacity="0.016"/><stop offset="0.582" stop-opacity="0.016"/><stop offset="0.666" stop-opacity="0.017"/><stop offset="0.749" stop-opacity="0.018"/><stop offset="0.832" stop-opacity="0.020"/><stop offset="0.915" stop-opacity="0.022"/><stop offset="1.000" stop-opacity="0.025"/></linearGradient><linearGradient id="f159" x1="0" x2="1202" y1="0" y2="0" gradientUnits="userSpaceOnUse"><stop offset="0.000" stop-opacity="0.024"/><stop offset="0.083" stop-opacity="0.021"/><stop offset="0.166" stop-opacity="0.019"/><stop offset="0.250" stop-opacity="0.017"/><stop offset="0.333" stop-opacity="0.016"/><stop offset="0.416" stop-opacity="0.015"/><stop offset="0.500" stop-opacity="0.015"/><stop offset="0.582" stop-opacity="0.015"/><stop offset="0.666" stop-opacity="0.016"/><stop offset="0.749" stop-opacity="0.017"/><stop offset="0.832" stop-opacity="0.019"/><stop offset="0.915" stop-opacity="0.021"/><stop offset="1.000" stop-opacity="0.024"/></linearGradient><linearGradient id="f160" x1="0" x2="1202" y1="0" y2="0" gradientUnits="userSpaceOnUse"><stop offset="0.000" stop-opacity="0.023"/><stop offset="0.083" stop-opacity="0.020"/><stop offset="0.166" stop-opacity="0.018"/><stop offset="0.250" stop-opacity="0.016"/><stop offset="0.333" stop-opacity="0.015"/><stop offset="0.416" stop-opacity="0.015"/><stop offset="0.500" stop-opacity="0.014"/><stop offset="0.582" stop-opacity="0.015"/><stop offset="0.666" stop-opacity="0.015"/><stop offset="0.749" stop-opacity="0.016"/><stop offset="0.832" stop-opacity="0.018"/><stop offset="0.915" stop-opacity="0.020"/><stop offset="1.000" stop-opacity="0.023"/></linearGradient><linearGradient id="f161" x1="0" x2="1202" y1="0" y2="0" gradientUnits="userSpaceOnUse"><stop offset="0.000" stop-opacity="0.022"/><stop offset="0.083" stop-opacity="0.019"/><stop offset="0.166" stop-opacity="0.017"/><stop offset="0.250" stop-opacity="0.016"/><stop offset="0.333" stop-opacity="0.015"/><stop offset="0.416" stop-opacity="0.014"/><stop offset="0.500" stop-opacity="0.014"/><stop offset="0.582" stop-opacity="0.014"/><stop offset="0.666" stop-opacity="0.015"/><stop offset="0.749" stop-opacity="0.016"/><stop offset="0.832" stop-opacity="0.017"/><stop offset="0.915" stop-opacity="0.019"/><stop offset="1.000" stop-opacity="0.022"/></linearGradient><linearGradient id="f162" x1="0" x2="1202" y1="0" y2="0" gradientUnits="userSpaceOnUse"><stop offset="0.000" stop-opacity="0.021"/><stop offset="0.083" stop-opacity="0.018"/><stop offset="0.166" stop-opacity="0.016"/><stop offset="0.250" stop-opacity="0.015"/><stop offset="0.333" stop-opacity="0.014"/><stop offset="0.416" stop-opacity="0.013"/><stop offset="0.500" stop-opacity="0.013"/><stop offset="0.582" stop-opacity="0.013"/><stop offset="0.666" stop-opacity="0.014"/><stop offset="0.749" stop-opacity="0.015"/><stop offset="0.832" stop-opacity="0.016"/><stop offset="0.915" stop-opacity="0.018"/><stop offset="1.000" stop-opacity="0.021"/></linearGradient><linearGradient id="f163" x1="0" x2="1202" y1="0" y2="0" gradientUnits="userSpaceOnUse"><stop offset="0.000" stop-opacity="0.020"/><stop offset="0.083" stop-opacity="0.018"/><stop offset="0.166" stop-opacity="0.016"/><stop offset="0.250" stop-opacity="0.014"/><stop offset="0.333" stop-opacity="0.013"/><stop offset="0.416" stop-opacity="0.013"/><stop offset="0.500" stop-opacity="0.013"/><stop offset="0.582" stop-opacity="0.013"/><stop offset="0.666" stop-opacity="0.013"/><stop offset="0.749" stop-opacity="0.014"/><stop offset="0.832" stop-opacity="0.016"/><stop offset="0.915" stop-opacity="0.017"/><stop offset="1.000" stop-opacity="0.020"/></linearGradient><linearGradient id="f164" x1="0" x2="1202" y1="0" y2="0" gradientUnits="userSpaceOnUse"><stop offset="0.000" stop-opacity="0.019"/><stop offset="0.083" stop-opacity="0.017"/><stop offset="0.166" stop-opacity="0.015"/><stop offset="0.250" stop-opacity="0.014"/><stop offset="0.333" stop-opacity="0.013"/><stop offset="0.416" stop-opacity="0.012"/><stop offset="0.500" stop-opacity="0.012"/><stop offset="0.582" stop-opacity="0.012"/><stop offset="0.666" stop-opacity="0.013"/><stop offset="0.749" stop-opacity="0.014"/><stop offset="0.832" stop-opacity="0.015"/><stop offset="0.915" stop-opacity="0.017"/><stop offset="1.000" stop-opacity="0.019"/></linearGradient><linearGradient id="f165" x1="0" x2="1202" y1="0" y2="0" gradientUnits="userSpaceOnUse"><stop offset="0.000" stop-opacity="0.018"/><stop offset="0.083" stop-opacity="0.016"/><stop offset="0.166" stop-opacity="0.014"/><stop offset="0.250" stop-opacity="0.013"/><stop offset="0.333" stop-opacity="0.012"/><stop offset="0.416" stop-opacity="0.012"/><stop offset="0.500" stop-opacity="0.012"/><stop offset="0.582" stop-opacity="0.012"/><stop offset="0.666" stop-opacity="0.012"/><stop offset="0.749" stop-opacity="0.013"/><stop offset="0.832" stop-opacity="0.014"/><stop offset="0.915" stop-opacity="0.016"/><stop offset="1.000" stop-opacity="0.018"/></linearGradient><linearGradient id="f166" x1="0" x2="1202" y1="0" y2="0" gradientUnits="userSpaceOnUse"><stop offset="0.000" stop-opacity="0.018"/><stop offset="0.083" stop-opacity="0.015"/><stop offset="0.166" stop-opacity="0.014"/><stop offset="0.250" stop-opacity="0.013"/><stop offset="0.333" stop-opacity="0.012"/><stop offset="0.416" stop-opacity="0.011"/><stop offset="0.500" stop-opacity="0.011"/><stop offset="0.582" stop-opacity="0.011"/><stop offset="0.666" stop-opacity="0.012"/><stop offset="0.749" stop-opacity="0.013"/><stop offset="0.832" stop-opacity="0.014"/><stop offset="0.915" stop-opacity="0.015"/><stop offset="1.000" stop-opacity="0.017"/></linearGradient><linearGradient id="f167" x1="0" x2="1202" y1="0" y2="0" gradientUnits="userSpaceOnUse"><stop offset="0.000" stop-opacity="0.017"/><stop offset="0.083" stop-opacity="0.015"/><stop offset="0.166" stop-opacity="0.013"/><stop offset="0.250" stop-opacity="0.012"/><stop offset="0.333" stop-opacity="0.011"/><stop offset="0.416" stop-opacity="0.011"/><stop offset="0.500" stop-opacity="0.011"/><stop offset="0.582" stop-opacity="0.011"/><stop offset="0.666" stop-opacity="0.011"/><stop offset="0.749" stop-opacity="0.012"/><stop offset="0.832" stop-opacity="0.013"/><stop offset="0.915" stop-opacity="0.015"/><stop offset="1.000" stop-opacity="0.017"/></linearGradient><linearGradient id="f168" x1="0" x2="1202" y1="0" y2="0" gradientUnits="userSpaceOnUse"><stop offset="0.000" stop-opacity="0.016"/><stop offset="0.083" stop-opacity="0.014"/><stop offset="0.166" stop-opacity="0.013"/><stop offset="0.250" stop-opacity="0.012"/><stop offset="0.333" stop-opacity="0.011"/><stop offset="0.416" stop-opacity="0.010"/><stop offset="0.500" stop-opacity="0.010"/><stop offset="0.582" stop-opacity="0.010"/><stop offset="0.666" stop-opacity="0.011"/><stop offset="0.749" stop-opacity="0.012"/><stop offset="0.832" stop-opacity="0.013"/><stop offset="0.915" stop-opacity="0.014"/><stop offset="1.000" stop-opacity="0.016"/></linearGradient><linearGradient id="f169" x1="0" x2="1202" y1="0" y2="0" gradientUnits="userSpaceOnUse"><stop offset="0.000" stop-opacity="0.016"/><stop offset="0.083" stop-opacity="0.014"/><stop offset="0.166" stop-opacity="0.012"/><stop offset="0.250" stop-opacity="0.011"/><stop offset="0.333" stop-opacity="0.010"/><stop offset="0.416" stop-opacity="0.010"/><stop offset="0.500" stop-opacity="0.010"/><stop offset="0.582" stop-opacity="0.010"/><stop offset="0.666" stop-opacity="0.010"/><stop offset="0.749" stop-opacity="0.011"/><stop offset="0.832" stop-opacity="0.012"/><stop offset="0.915" stop-opacity="0.014"/><stop offset="1.000" stop-opacity="0.015"/></linearGradient><linearGradient id="f170" x1="0" x2="1202" y1="0" y2="0" gradientUnits="userSpaceOnUse"><stop offset="0.000" stop-opacity="0.015"/><stop offset="0.083" stop-opacity="0.013"/><stop offset="0.166" stop-opacity="0.012"/><stop offset="0.250" stop-opacity="0.011"/><stop offset="0.333" stop-opacity="0.010"/><stop offset="0.416" stop-opacity="0.010"/><stop offset="0.500" stop-opacity="0.010"/><stop offset="0.582" stop-opacity="0.010"/><stop offset="0.666" stop-opacity="0.010"/><stop offset="0.749" stop-opacity="0.011"/><stop offset="0.832" stop-opacity="0.012"/><stop offset="0.915" stop-opacity="0.013"/><stop offset="1.000" stop-opacity="0.015"/></linearGradient><linearGradient id="f171" x1="0" x2="1202" y1="0" y2="0" gradientUnits="userSpaceOnUse"><stop offset="0.000" stop-opacity="0.014"/><stop offset="0.083" stop-opacity="0.013"/><stop offset="0.166" stop-opacity="0.011"/><stop offset="0.250" stop-opacity="0.010"/><stop offset="0.333" stop-opacity="0.010"/><stop offset="0.416" stop-opacity="0.009"/><stop offset="0.500" stop-opacity="0.009"/><stop offset="0.582" stop-opacity="0.009"/><stop offset="0.666" stop-opacity="0.010"/><stop offset="0.749" stop-opacity="0.010"/><stop offset="0.832" stop-opacity="0.011"/><stop offset="0.915" stop-opacity="0.013"/><stop offset="1.000" stop-opacity="0.014"/></linearGradient><linearGradient id="f172" x1="0" x2="1202" y1="0" y2="0" gradientUnits="userSpaceOnUse"><stop offset="0.000" stop-opacity="0.014"/><stop offset="0.083" stop-opacity="0.012"/><stop offset="0.166" stop-opacity="0.011"/><stop offset="0.250" stop-opacity="0.010"/><stop offset="0.333" stop-opacity="0.009"/><stop offset="0.416" stop-opacity="0.009"/><stop offset="0.500" stop-opacity="0.009"/><stop offset="0.582" stop-opacity="0.009"/><stop offset="0.666" stop-opacity="0.009"/><stop offset="0.749" stop-opacity="0.010"/><stop offset="0.832" stop-opacity="0.011"/><stop offset="0.915" stop-opacity="0.012"/><stop offset="1.000" stop-opacity="0.014"/></linearGradient><linearGradient id="f173" x1="0" x2="1202" y1="0" y2="0" gradientUnits="userSpaceOnUse"><stop offset="0.000" stop-opacity="0.013"/><stop offset="0.083" stop-opacity="0.012"/><stop offset="0.166" stop-opacity="0.011"/><stop offset="0.250" stop-opacity="0.010"/><stop offset="0.333" stop-opacity="0.009"/><stop offset="0.416" stop-opacity="0.009"/><stop offset="0.500" stop-opacity="0.009"/><stop offset="0.582" stop-opacity="0.009"/><stop offset="0.666" stop-opacity="0.009"/><stop offset="0.749" stop-opacity="0.010"/><stop offset="0.832" stop-opacity="0.011"/><stop offset="0.915" stop-opacity="0.012"/><stop offset="1.000" stop-opacity="0.013"/></linearGradient><linearGradient id="f174" x1="0" x2="1202" y1="0" y2="0" gradientUnits="userSpaceOnUse"><stop offset="0.000" stop-opacity="0.013"/><stop offset="0.083" stop-opacity="0.011"/><stop offset="0.166" stop-opacity="0.010"/><stop offset="0.250" stop-opacity="0.009"/><stop offset="0.333" stop-opacity="0.009"/><stop offset="0.416" stop-opacity="0.008"/><stop offset="0.500" stop-opacity="0.008"/><stop offset="0.582" stop-opacity="0.008"/><stop offset="0.666" stop-opacity="0.009"/><stop offset="0.749" stop-opacity="0.009"/><stop offset="0.832" stop-opacity="0.010"/><stop offset="0.915" stop-opacity="0.011"/><stop offset="1.000" stop-opacity="0.013"/></linearGradient><linearGradient id="f175" x1="0" x2="1202" y1="0" y2="0" gradientUnits="userSpaceOnUse"><stop offset="0.000" stop-opacity="0.012"/><stop offset="0.083" stop-opacity="0.011"/><stop offset="0.166" stop-opacity="0.010"/><stop offset="0.250" stop-opacity="0.009"/><stop offset="0.333" stop-opacity="0.008"/><stop offset="0.416" stop-opacity="0.008"/><stop offset="0.500" stop-opacity="0.008"/><stop offset="0.582" stop-opacity="0.008"/><stop offset="0.666" stop-opacity="0.008"/><stop offset="0.749" stop-opacity="0.009"/><stop offset="0.832" stop-opacity="0.010"/><stop offset="0.915" stop-opacity="0.011"/><stop offset="1.000" stop-opacity="0.012"/></linearGradient><linearGradient id="f176" x1="0" x2="1202" y1="0" y2="0" gradientUnits="userSpaceOnUse"><stop offset="0.000" stop-opacity="0.012"/><stop offset="0.083" stop-opacity="0.011"/><stop offset="0.166" stop-opacity="0.010"/><stop offset="0.250" stop-opacity="0.009"/><stop offset="0.333" stop-opacity="0.008"/><stop offset="0.416" stop-opacity="0.008"/><stop offset="0.500" stop-opacity="0.008"/><stop offset="0.582" stop-opacity="0.008"/><stop offset="0.666" stop-opacity="0.008"/><stop offset="0.749" stop-opacity="0.009"/><stop offset="0.832" stop-opacity="0.009"/><stop offset="0.915" stop-opacity="0.011"/><stop offset="1.000" stop-opacity="0.012"/></linearGradient><linearGradient id="f177" x1="0" x2="1202" y1="0" y2="0" gradientUnits="userSpaceOnUse"><stop offset="0.000" stop-opacity="0.012"/><stop offset="0.083" stop-opacity="0.010"/><stop offset="0.166" stop-opacity="0.009"/><stop offset="0.250" stop-opacity="0.008"/><stop offset="0.333" stop-opacity="0.008"/><stop offset="0.416" stop-opacity="0.008"/><stop offset="0.500" stop-opacity="0.007"/><stop offset="0.582" stop-opacity="0.008"/><stop offset="0.666" stop-opacity="0.008"/><stop offset="0.749" stop-opacity="0.008"/><stop offset="0.832" stop-opacity="0.009"/><stop offset="0.915" stop-opacity="0.010"/><stop offset="1.000" stop-opacity="0.012"/></linearGradient><linearGradient id="f178" x1="0" x2="1202" y1="0" y2="0" gradientUnits="userSpaceOnUse"><stop offset="0.000" stop-opacity="0.011"/><stop offset="0.083" stop-opacity="0.010"/><stop offset="0.166" stop-opacity="0.009"/><stop offset="0.250" stop-opacity="0.008"/><stop offset="0.333" stop-opacity="0.008"/><stop offset="0.416" stop-opacity="0.007"/><stop offset="0.500" stop-opacity="0.007"/><stop offset="0.582" stop-opacity="0.007"/><stop offset="0.666" stop-opacity="0.008"/><stop offset="0.749" stop-opacity="0.008"/><stop offset="0.832" stop-opacity="0.009"/><stop offset="0.915" stop-opacity="0.010"/><stop offset="1.000" stop-opacity="0.011"/></linearGradient><linearGradient id="f179" x1="0" x2="1202" y1="0" y2="0" gradientUnits="userSpaceOnUse"><stop offset="0.000" stop-opacity="0.011"/><stop offset="0.083" stop-opacity="0.010"/><stop offset="0.166" stop-opacity="0.009"/><stop offset="0.250" stop-opacity="0.008"/><stop offset="0.333" stop-opacity="0.007"/><stop offset="0.416" stop-opacity="0.007"/><stop offset="0.500" stop-opacity="0.007"/><stop offset="0.582" stop-opacity="0.007"/><stop offset="0.666" stop-opacity="0.007"/><stop offset="0.749" stop-opacity="0.008"/><stop offset="0.832" stop-opacity="0.009"/><stop offset="0.915" stop-opacity="0.010"/><stop offset="1.000" stop-opacity="0.011"/></linearGradient>
</defs>
<g clip-path="url(#vp)">
<rect x="0" y="0" width="1202" height="832" fill="#000"/>
<rect x="0" y="250" width="1202" height="611" fill="rgb(62,62,62)"/>
<path shape-rendering="crispEdges" fill="rgb(93,93,93)" d="M0.1,284.6L27.2,285.2L-2.7,287.5L-30.4,286.8ZM55.1,283.1L82.1,283.7L54.7,285.8L27.2,285.2ZM-2.7,287.5L25.5,288.1L-5.9,290.6L-34.8,289.9ZM107.7,281.6L134.5,282.2L109.5,284.3L82.1,283.7ZM54.7,285.8L82.8,286.5L54.3,288.8L25.5,288.1ZM-5.9,290.6L23.6,291.4L-9.4,294.1L-39.6,293.3ZM158.0,280.3L184.7,280.8L161.9,282.8L134.5,282.2ZM109.5,284.3L137.5,284.9L111.5,287.1L82.8,286.5ZM54.3,288.8L83.7,289.5L53.8,292.1L23.6,291.4ZM-9.4,294.1L21.6,294.9L-13.2,297.9L-44.9,297.0ZM206.2,279.0L232.8,279.5L212.0,281.4L184.7,280.8ZM161.9,282.8L189.8,283.4L166.1,285.5L137.5,284.9ZM111.5,287.1L140.8,287.8L113.7,290.3L83.7,289.5ZM53.8,292.1L84.6,292.9L53.2,295.8L21.6,294.9ZM-13.2,297.9L19.3,298.8L-17.4,302.2L-50.8,301.2ZM252.4,277.7L278.8,278.2L259.9,280.0L232.8,279.5ZM212.0,281.4L239.7,281.9L218.2,284.0L189.8,283.4ZM166.1,285.5L195.3,286.2L170.8,288.5L140.8,287.8ZM113.7,290.3L144.4,291.0L116.1,293.7L84.6,292.9ZM53.2,295.8L85.6,296.6L52.6,299.8L19.3,298.8ZM-17.4,302.2L16.8,303.2L-22.2,306.9L-57.4,305.8ZM296.7,276.5L323.0,277.0L305.8,278.7L278.8,278.2ZM259.9,280.0L287.5,280.5L268.0,282.5L239.7,281.9ZM218.2,284.0L247.3,284.6L225.1,286.8L195.3,286.2ZM170.8,288.5L201.3,289.2L175.8,291.8L144.4,291.0ZM116.1,293.7L148.4,294.5L118.8,297.5L85.6,296.6ZM52.6,299.8L86.7,300.7L51.9,304.2L16.8,303.2ZM-22.2,306.9L14.0,308.0L-27.5,312.2L-64.8,311.0ZM339.3,275.3L365.4,275.8L349.8,277.4L323.0,277.0ZM305.8,278.7L333.2,279.2L315.6,281.1L287.5,280.5ZM268.0,282.5L296.9,283.1L276.9,285.2L247.3,284.6ZM225.1,286.8L255.5,287.5L232.5,289.9L201.3,289.2ZM175.8,291.8L207.9,292.5L181.4,295.4L148.4,294.5ZM118.8,297.5L152.8,298.4L121.7,301.7L86.7,300.7ZM51.9,304.2L88.0,305.3L51.2,309.2L14.0,308.0ZM-27.5,312.2L10.9,313.5L-33.5,318.2L-73.1,316.8ZM349.8,277.4L377.1,277.9L361.2,279.7L333.2,279.2ZM315.6,281.1L344.3,281.6L326.3,283.7L296.9,283.1ZM276.9,285.2L307.1,285.8L286.5,288.2L255.5,287.5ZM232.5,289.9L264.5,290.7L240.8,293.3L207.9,292.5ZM181.4,295.4L215.2,296.2L187.6,299.3L152.8,298.4ZM121.7,301.7L157.6,302.7L125.0,306.4L88.0,305.3ZM51.2,309.2L89.4,310.4L50.3,314.8L10.9,313.5ZM-33.5,318.2L7.3,319.7L-40.4,325.1L-82.6,323.5ZM392.1,276.2L419.1,276.7L404.8,278.4L377.1,277.9ZM361.2,279.7L389.7,280.3L373.5,282.2L344.3,281.6ZM326.3,283.7L356.3,284.3L337.9,286.5L307.1,285.8ZM286.5,288.2L318.2,288.9L297.1,291.4L264.5,290.7ZM240.8,293.3L274.3,294.1L249.8,297.1L215.2,296.2ZM187.6,299.3L223.3,300.3L194.4,303.8L157.6,302.7ZM125.0,306.4L163.0,307.5L128.7,311.7L89.4,310.4ZM50.3,314.8L91.0,316.2L49.4,321.2L7.3,319.7ZM-40.4,325.1L3.2,326.8L-48.2,333.0L-93.4,331.1ZM432.6,275.1L459.5,275.5L446.7,277.2L419.1,276.7ZM404.8,278.4L433.1,278.9L418.7,280.8L389.7,280.3ZM373.5,282.2L403.3,282.8L386.9,284.9L356.3,284.3ZM337.9,286.5L369.4,287.2L350.6,289.6L318.2,288.9ZM297.1,291.4L330.4,292.2L308.7,295.0L274.3,294.1ZM249.8,297.1L285.2,298.0L259.8,301.3L223.3,300.3ZM194.4,303.8L232.2,304.8L202.1,308.7L163.0,307.5ZM128.7,311.7L169.1,313.0L132.9,317.6L91.0,316.2ZM49.4,321.2L92.8,322.8L48.3,328.5L3.2,326.8ZM471.6,274.0L498.3,274.4L486.9,276.0L459.5,275.5ZM446.7,277.2L474.8,277.7L461.9,279.5L433.1,278.9ZM418.7,280.8L448.2,281.4L433.7,283.4L403.3,282.8ZM386.9,284.9L418.1,285.5L401.5,287.8L369.4,287.2ZM350.6,289.6L383.7,290.3L364.5,293.0L330.4,292.2ZM308.7,295.0L343.9,295.8L321.5,298.9L285.2,298.0ZM259.8,301.3L297.3,302.3L271.0,305.9L232.2,304.8ZM202.1,308.7L242.3,309.9L210.7,314.3L169.1,313.0ZM132.9,317.6L176.0,319.1L137.6,324.4L92.8,322.8ZM48.3,328.5L94.9,330.3L47.0,337.0L-1.5,334.9ZM486.9,276.0L514.7,276.5L503.3,278.2L474.8,277.7ZM461.9,279.5L491.2,280.0L478.4,281.9L448.2,281.4ZM433.7,283.4L464.6,284.0L450.0,286.2L418.1,285.5ZM401.5,287.8L434.3,288.5L417.5,291.1L383.7,290.3ZM364.5,293.0L399.4,293.8L379.8,296.7L343.9,295.8ZM321.5,298.9L358.7,299.9L335.8,303.3L297.3,302.3ZM271.0,305.9L310.8,307.0L283.5,311.1L242.3,309.9ZM210.7,314.3L253.6,315.6L220.5,320.6L176.0,319.1ZM137.6,324.4L183.9,326.1L143.1,332.2L94.9,330.3ZM47.0,337.0L97.3,339.1L45.5,346.8L-6.9,344.4ZM525.5,274.9L553.1,275.3L543.1,277.0L514.7,276.5ZM503.3,278.2L532.4,278.7L521.1,280.5L491.2,280.0ZM478.4,281.9L509.1,282.5L496.2,284.6L464.6,284.0ZM450.0,286.2L482.5,286.8L467.8,289.2L434.3,288.5ZM417.5,291.1L452.0,291.8L435.0,294.6L399.4,293.8ZM379.8,296.7L416.7,297.6L396.9,300.8L358.7,299.9ZM335.8,303.3L375.3,304.3L351.8,308.2L310.8,307.0ZM283.5,311.1L326.0,312.4L297.7,317.0L253.6,315.6ZM220.5,320.6L266.4,322.1L231.7,327.8L183.9,326.1ZM143.1,332.2L193.0,334.1L149.4,341.2L97.3,339.1ZM45.5,346.8L100.1,349.3L43.8,358.5L-13.4,355.6ZM562.6,273.8L590.0,274.2L581.2,275.8L553.1,275.3ZM543.1,277.0L571.9,277.4L562.0,279.2L532.4,278.7ZM521.1,280.5L551.6,281.1L540.4,283.1L509.1,282.5ZM496.2,284.6L528.5,285.2L515.7,287.5L482.5,286.8ZM467.8,289.2L502.1,290.0L487.4,292.6L452.0,291.8ZM435.0,294.6L471.6,295.4L454.5,298.5L416.7,297.6ZM396.9,300.8L435.9,301.8L415.8,305.4L375.3,304.3ZM351.8,308.2L393.8,309.4L369.7,313.7L326.0,312.4ZM297.7,317.0L343.2,318.5L313.8,323.7L266.4,322.1ZM231.7,327.8L281.2,329.6L244.7,336.1L193.0,334.1ZM149.4,341.2L203.5,343.5L156.8,351.9L100.1,349.3ZM43.8,358.5L103.4,361.4L41.7,372.5L-21.1,369.1ZM581.2,275.8L609.8,276.2L601.3,277.9L571.9,277.4ZM562.0,279.2L592.2,279.7L582.6,281.6L551.6,281.1ZM540.4,283.1L572.3,283.7L561.4,285.9L528.5,285.2ZM515.7,287.5L549.6,288.2L537.1,290.7L502.1,290.0ZM487.4,292.6L523.5,293.4L508.9,296.3L471.6,295.4ZM454.5,298.5L493.2,299.4L476.0,302.8L435.9,301.8ZM415.8,305.4L457.4,306.5L437.0,310.6L393.8,309.4ZM369.7,313.7L414.7,315.0L390.0,319.9L343.2,318.5ZM313.8,323.7L362.7,325.4L332.3,331.4L281.2,329.6ZM244.7,336.1L298.2,338.2L259.7,345.8L203.5,343.5ZM156.8,351.9L216.0,354.5L165.7,364.5L103.4,361.4ZM41.7,372.5L107.4,376.1L39.1,389.7L-30.5,385.5ZM617.9,274.6L646.2,275.1L638.9,276.7L609.8,276.2ZM601.3,277.9L631.2,278.4L623.0,280.3L592.2,279.7ZM582.6,281.6L614.2,282.2L604.9,284.3L572.3,283.7ZM561.4,285.9L594.9,286.5L584.3,288.9L549.6,288.2ZM537.1,290.7L572.8,291.5L560.5,294.2L523.5,293.4ZM508.9,296.3L547.2,297.2L532.8,300.4L493.2,299.4ZM476.0,302.8L517.2,303.9L500.1,307.7L457.4,306.5ZM437.0,310.6L481.5,311.8L461.0,316.4L414.7,315.0ZM390.0,319.9L438.4,321.5L413.3,327.1L362.7,325.4ZM332.3,331.4L385.3,333.3L353.8,340.3L298.2,338.2ZM259.7,345.8L318.2,348.3L277.6,357.3L216.0,354.5ZM165.7,364.5L230.9,367.8L176.5,379.9L107.4,376.1ZM39.1,389.7L112.4,394.2L35.8,411.3L-42.3,405.9ZM653.1,273.5L681.2,274.0L675.0,275.5L646.2,275.1ZM638.9,276.7L668.5,277.2L661.6,278.9L631.2,278.4ZM623.0,280.3L654.3,280.8L646.5,282.8L614.2,282.2ZM604.9,284.3L638.1,284.9L629.2,287.2L594.9,286.5ZM584.3,288.9L619.7,289.6L609.4,292.2L572.8,291.5ZM560.5,294.2L598.3,295.0L586.4,298.1L547.2,297.2ZM532.8,300.4L573.5,301.4L559.4,304.9L517.2,303.9ZM500.1,307.7L544.0,308.8L527.2,313.1L481.5,311.8ZM461.0,316.4L508.7,317.8L488.3,323.0L438.4,321.5ZM413.3,327.1L465.5,328.8L440.1,335.3L385.3,333.3ZM353.8,340.3L411.5,342.6L379.0,350.8L318.2,348.3ZM277.6,357.3L341.9,360.3L299.0,371.2L230.9,367.8ZM176.5,379.9L249.0,383.9L189.8,399.0L112.4,394.2ZM35.8,411.3L118.7,417.0L31.6,439.2L-57.4,432.1ZM675.0,275.5L704.4,276.0L698.7,277.7L668.5,277.2ZM661.6,278.9L692.6,279.5L686.2,281.4L654.3,280.8ZM646.5,282.8L679.4,283.4L672.0,285.6L638.1,284.9ZM629.2,287.2L664.2,287.9L655.8,290.3L619.7,289.6ZM609.4,292.2L646.8,293.0L637.1,295.9L598.3,295.0ZM586.4,298.1L626.6,299.0L615.2,302.4L573.5,301.4ZM559.4,304.9L602.7,306.0L589.2,310.1L544.0,308.8ZM527.2,313.1L574.3,314.5L557.9,319.3L508.7,317.8ZM488.3,323.0L539.8,324.7L519.6,330.6L465.5,328.8ZM440.1,335.3L496.9,337.3L471.4,344.9L411.5,342.6ZM379.0,350.8L442.4,353.5L409.1,363.3L341.9,360.3ZM299.0,371.2L370.5,374.7L325.3,388.1L249.0,383.9ZM189.8,399.0L271.6,404.0L206.7,423.1L118.7,417.0ZM31.6,439.2L126.8,446.8L26.0,476.6L-77.4,466.9ZM709.8,274.4L738.8,274.8L734.2,276.5L704.4,276.0ZM698.7,277.7L729.4,278.2L724.2,280.0L692.6,279.5ZM686.2,281.4L718.7,281.9L712.9,284.0L679.4,283.4ZM672.0,285.6L706.6,286.2L700.0,288.6L664.2,287.9ZM655.8,290.3L692.8,291.1L685.1,293.8L646.8,293.0ZM637.1,295.9L676.7,296.8L667.7,299.9L626.6,299.0ZM615.2,302.4L657.9,303.4L647.3,307.2L602.7,306.0ZM589.2,310.1L635.6,311.3L622.8,315.8L574.3,314.5ZM557.9,319.3L608.7,320.8L593.0,326.3L539.8,324.7ZM519.6,330.6L575.5,332.5L555.8,339.5L496.9,337.3ZM471.4,344.9L533.7,347.3L508.4,356.2L442.4,353.5ZM409.1,363.3L479.3,366.5L445.5,378.4L370.5,374.7ZM325.3,388.1L405.7,392.5L358.2,409.3L271.6,404.0ZM206.7,423.1L300.5,429.6L229.0,454.9L126.8,446.8ZM26.0,476.6L137.9,487.1L18.1,529.4L-105.3,515.4ZM734.2,276.5L764.6,276.9L760.6,278.7L729.4,278.2ZM724.2,280.0L756.4,280.5L751.9,282.5L718.7,281.9ZM712.9,284.0L747.1,284.6L742.0,286.9L706.6,286.2ZM700.0,288.6L736.5,289.3L730.6,291.9L692.8,291.1ZM685.1,293.8L724.2,294.6L717.4,297.7L676.7,296.8ZM667.7,299.9L709.9,300.9L701.8,304.5L657.9,303.4ZM647.3,307.2L693.0,308.3L683.4,312.6L635.6,311.3ZM622.8,315.8L672.7,317.2L661.0,322.4L608.7,320.8ZM593.0,326.3L648.0,328.1L633.4,334.5L575.5,332.5ZM555.8,339.5L617.0,341.7L598.4,349.8L533.7,347.3ZM508.4,356.2L577.2,359.1L552.7,369.8L479.3,366.5ZM445.5,378.4L524.2,382.4L490.4,397.2L405.7,392.5ZM358.2,409.3L450.0,414.9L400.5,436.6L300.5,429.6ZM229.0,454.9L338.8,463.6L259.4,498.4L137.9,487.1ZM18.1,529.4L153.8,544.8L6.0,609.6L-146.8,587.6ZM768.4,275.3L798.4,275.7L795.5,277.4L764.6,276.9ZM760.6,278.7L792.5,279.2L789.2,281.1L756.4,280.5ZM751.9,282.5L785.7,283.1L782.0,285.2L747.1,284.6ZM742.0,286.9L778.0,287.5L773.8,290.0L736.5,289.3ZM730.6,291.9L769.2,292.6L764.3,295.5L724.2,294.6ZM717.4,297.7L759.0,298.6L753.2,301.9L709.9,300.9ZM701.8,304.5L746.9,305.6L740.0,309.5L693.0,308.3ZM683.4,312.6L732.5,313.9L724.2,318.7L672.7,317.2ZM661.0,322.4L715.0,324.0L704.8,329.9L648.0,328.1ZM633.4,334.5L693.4,336.5L680.5,343.9L617.0,341.7ZM598.4,349.8L665.9,352.4L649.1,362.1L577.2,359.1ZM552.7,369.8L629.7,373.3L606.9,386.5L524.2,382.4ZM490.4,397.2L580.0,402.1L547.5,420.9L450.0,414.9ZM400.5,436.6L507.5,444.0L457.2,473.1L338.8,463.6ZM259.4,498.4L391.9,510.8L303.8,561.8L153.8,544.8ZM6.0,609.6L178.3,634.3L-14.5,745.8L-215.2,706.6ZM795.5,277.4L827.0,277.9L824.9,279.7L792.5,279.2ZM789.2,281.1L822.6,281.6L820.2,283.7L785.7,283.1ZM782.0,285.2L817.6,285.9L814.9,288.2L778.0,287.5ZM773.8,290.0L811.9,290.7L808.7,293.4L769.2,292.6ZM764.3,295.5L805.3,296.4L801.6,299.5L759.0,298.6ZM753.2,301.9L797.6,302.9L793.2,306.7L746.9,305.6ZM740.0,309.5L788.4,310.7L783.1,315.2L732.5,313.9ZM724.2,318.7L777.3,320.2L770.8,325.6L715.0,324.0ZM704.8,329.9L763.6,331.7L755.6,338.6L693.4,336.5ZM680.5,343.9L746.5,346.3L736.1,355.1L665.9,352.4ZM649.1,362.1L724.2,365.2L710.4,377.0L629.7,373.3ZM606.9,386.5L694.1,390.8L674.7,407.3L580.0,402.1ZM547.5,420.9L651.2,427.2L622.1,451.9L507.5,444.0ZM457.2,473.1L585.2,483.3L536.8,524.4L391.9,510.8ZM303.8,561.8L470.5,580.7L374.3,662.4L178.3,634.3ZM-14.5,745.8L221.7,792.0L-57.1,1028.8L-349.1,939.3ZM829.0,276.2L860.2,276.7L859.1,278.4L827.0,277.9ZM824.9,279.7L857.9,280.3L856.7,282.2L822.6,281.6ZM820.2,283.7L855.4,284.3L854.0,286.5L817.6,285.9ZM814.9,288.2L852.5,288.9L850.9,291.5L811.9,290.7ZM808.7,293.4L849.2,294.3L847.3,297.2L805.3,296.4ZM801.6,299.5L845.3,300.5L843.1,304.0L797.6,302.9ZM793.2,306.7L840.7,307.8L838.1,312.0L788.4,310.7ZM783.1,315.2L835.2,316.6L832.0,321.7L777.3,320.2ZM770.8,325.6L828.5,327.4L824.6,333.7L763.6,331.7ZM755.6,338.6L820.1,340.8L815.1,348.8L746.5,346.3ZM736.1,355.1L809.4,358.0L802.8,368.5L724.2,365.2ZM710.4,377.0L795.1,380.8L786.0,395.4L694.1,390.8ZM674.7,407.3L775.1,412.8L761.9,434.0L651.2,427.2ZM622.1,451.9L745.3,460.4L724.1,494.3L585.2,483.3ZM536.8,524.4L696.1,539.3L657.0,601.8L470.5,580.7ZM374.3,662.4L598.9,694.7L503.6,847.2L221.7,792.0ZM861.2,275.1L892.0,275.5L891.9,277.2L860.2,276.7ZM859.1,278.4L891.7,278.9L891.6,280.8L857.9,280.3ZM856.7,282.2L891.5,282.8L891.3,284.9L855.4,284.3ZM854.0,286.5L891.1,287.2L891.0,289.7L852.5,288.9ZM850.9,291.5L890.8,292.3L890.6,295.1L849.2,294.3ZM847.3,297.2L890.3,298.2L890.1,301.5L845.3,300.5ZM843.1,304.0L889.9,305.1L889.6,309.0L840.7,307.8ZM838.1,312.0L889.3,313.3L888.9,318.0L835.2,316.6ZM832.0,321.7L888.5,323.3L888.1,329.1L828.5,327.4ZM824.6,333.7L887.7,335.7L887.1,343.0L820.1,340.8ZM815.1,348.8L886.5,351.4L885.8,360.9L809.4,358.0ZM802.8,368.5L885.0,372.0L884.1,384.9L795.1,380.8ZM786.0,395.4L883.0,400.2L881.7,418.6L775.1,412.8ZM761.9,434.0L880.1,441.2L878.0,469.6L745.3,460.4ZM724.1,494.3L875.4,506.4L871.8,555.7L696.1,539.3ZM657.0,601.8L866.8,625.6L859.1,732.1L598.9,694.7ZM891.9,277.2L924.1,277.7L925.0,279.5L891.7,278.9ZM891.6,280.8L925.9,281.4L926.9,283.4L891.5,282.8ZM891.3,284.9L927.9,285.6L929.1,287.9L891.1,287.2ZM891.0,289.7L930.3,290.4L931.5,293.1L890.8,292.3ZM890.6,295.1L932.9,296.0L934.4,299.1L890.3,298.2ZM890.1,301.5L936.1,302.5L937.9,306.2L889.9,305.1ZM889.6,309.0L939.8,310.2L941.9,314.6L889.3,313.3ZM888.9,318.0L944.3,319.5L946.9,324.9L888.5,323.3ZM888.1,329.1L949.8,331.0L953.1,337.7L887.7,335.7ZM887.1,343.0L956.7,345.4L960.9,354.0L886.5,351.4ZM885.8,360.9L965.7,364.0L971.3,375.6L885.0,372.0ZM884.1,384.9L977.8,389.1L985.6,405.3L883.0,400.2ZM881.7,418.6L995.0,424.9L1006.7,449.0L880.1,441.2ZM878.0,469.6L1021.4,479.6L1040.6,519.5L875.4,506.4ZM871.8,555.7L1066.9,574.0L1104.7,652.6L866.8,625.6ZM859.1,732.1L1164.1,775.9L1270.8,997.4L846.0,914.2ZM923.3,276.0L955.2,276.4L957.0,278.2L924.1,277.7ZM925.0,279.5L958.9,280.0L960.9,281.9L925.9,281.4ZM926.9,283.4L963.0,284.0L965.3,286.2L927.9,285.6ZM929.1,287.9L967.8,288.6L970.4,291.1L930.3,290.4ZM931.5,293.1L973.3,293.9L976.3,296.8L932.9,296.0ZM934.4,299.1L979.6,300.0L983.2,303.5L936.1,302.5ZM937.9,306.2L987.2,307.3L991.5,311.5L939.8,310.2ZM941.9,314.6L996.2,316.0L1001.4,321.0L944.3,319.5ZM946.9,324.9L1007.2,326.6L1013.6,332.9L949.8,331.0ZM953.1,337.7L1020.9,339.9L1029.1,347.8L956.7,345.4ZM960.9,354.0L1038.5,356.8L1049.3,367.2L965.7,364.0ZM971.3,375.6L1061.8,379.4L1076.6,393.6L977.8,389.1ZM985.6,405.3L1094.3,410.7L1115.8,431.5L995.0,424.9ZM1006.7,449.0L1142.6,457.3L1176.8,490.3L1021.4,479.6ZM1040.6,519.5L1222.0,534.0L1284.5,594.3L1066.9,574.0ZM1104.7,652.6L1376.8,683.4L1526.5,827.9L1164.1,775.9ZM957.0,278.2L990.4,278.7L993.4,280.5L958.9,280.0ZM960.9,281.9L996.5,282.5L999.9,284.6L963.0,284.0ZM965.3,286.2L1003.5,286.9L1007.3,289.3L967.8,288.6ZM970.4,291.1L1011.5,291.9L1015.9,294.7L973.3,293.9ZM976.3,296.8L1020.7,297.7L1026.0,301.0L979.6,300.0ZM983.2,303.5L1031.6,304.6L1037.8,308.5L987.2,307.3ZM991.5,311.5L1044.6,312.7L1052.1,317.4L996.2,316.0ZM1001.4,321.0L1060.3,322.6L1069.5,328.4L1007.2,326.6ZM1013.6,332.9L1079.8,334.8L1091.3,342.1L1020.9,339.9ZM1029.1,347.8L1104.4,350.3L1119.4,359.7L1038.5,356.8ZM1049.3,367.2L1136.7,370.6L1156.9,383.3L1061.8,379.4ZM1076.6,393.6L1180.8,398.4L1209.6,416.4L1094.3,410.7ZM1115.8,431.5L1244.8,438.6L1288.9,466.3L1142.6,457.3ZM1176.8,490.3L1345.7,502.0L1421.8,549.9L1222.0,534.0ZM993.4,280.5L1028.6,281.1L1032.9,283.1L996.5,282.5ZM999.9,284.6L1037.5,285.3L1042.5,287.6L1003.5,286.9ZM1007.3,289.3L1047.8,290.0L1053.5,292.7L1011.5,291.9ZM1015.9,294.7L1059.6,295.6L1066.3,298.7L1020.7,297.7ZM1026.0,301.0L1073.5,302.0L1081.3,305.7L1031.6,304.6ZM1037.8,308.5L1089.9,309.7L1099.3,314.1L1044.6,312.7ZM1052.1,317.4L1109.7,318.9L1121.2,324.2L1060.3,322.6ZM1069.5,328.4L1134.0,330.2L1148.3,336.9L1079.8,334.8ZM1091.3,342.1L1164.5,344.4L1182.8,353.0L1104.4,350.3ZM1119.4,359.7L1203.9,362.8L1228.3,374.2L1136.7,370.6ZM1156.9,383.3L1257.0,387.5L1291.0,403.4L1180.8,398.4ZM1024.5,279.2L1059.2,279.7L1064.4,281.6L1028.6,281.1ZM1032.9,283.1L1070.0,283.7L1075.9,285.9L1037.5,285.3ZM1042.5,287.6L1082.3,288.3L1089.1,290.8L1047.8,290.0ZM1053.5,292.7L1096.4,293.5L1104.4,296.4L1059.6,295.6ZM1066.3,298.7L1112.9,299.6L1122.2,303.0L1073.5,302.0ZM1081.3,305.7L1132.4,306.8L1143.5,310.9L1089.9,309.7ZM1099.3,314.1L1155.7,315.4L1169.1,320.4L1109.7,318.9ZM1121.2,324.2L1184.0,325.9L1200.7,332.1L1134.0,330.2ZM1148.3,336.9L1219.4,339.0L1240.5,346.8L1164.5,344.4ZM1182.8,353.0L1264.6,355.7L1292.3,366.0L1203.9,362.8ZM1064.4,281.6L1101.0,282.2L1107.8,284.3L1070.0,283.7ZM1075.9,285.9L1115.1,286.6L1122.9,289.0L1082.3,288.3ZM1089.1,290.8L1131.3,291.5L1140.4,294.3L1096.4,293.5ZM1104.4,296.4L1150.2,297.3L1160.8,300.6L1112.9,299.6ZM1122.2,303.0L1172.3,304.1L1184.8,308.0L1132.4,306.8ZM1143.5,310.9L1198.6,312.2L1213.7,316.8L1155.7,315.4ZM1169.1,320.4L1230.4,321.9L1249.0,327.6L1184.0,325.9ZM1200.7,332.1L1269.8,334.0L1293.1,341.2L1219.4,339.0ZM1094.6,280.3L1130.6,280.8L1138.3,282.8L1101.0,282.2ZM1107.8,284.3L1146.4,284.9L1155.1,287.2L1115.1,286.6ZM1122.9,289.0L1164.5,289.7L1174.6,292.3L1131.3,291.5ZM1140.4,294.3L1185.4,295.2L1197.1,298.2L1150.2,297.3ZM1160.8,300.6L1209.8,301.6L1223.6,305.2L1172.3,304.1ZM1184.8,308.0L1238.7,309.1L1255.3,313.5L1198.6,312.2ZM1138.3,282.8L1176.3,283.4L1185.8,285.6L1146.4,284.9ZM1155.1,287.2L1196.0,287.9L1207.0,290.4L1164.5,289.7ZM1174.6,292.3L1218.7,293.1L1231.5,296.0L1185.4,295.2ZM1197.1,298.2L1245.2,299.2L1260.1,302.6L1209.8,301.6ZM1167.4,281.4L1204.8,281.9L1215.1,284.0L1176.3,283.4ZM1185.8,285.6L1226.0,286.2L1237.8,288.6L1196.0,287.9Z"/>
<path shape-rendering="crispEdges" fill="rgb(31,31,31)" d="M-26.3,284.0L0.1,284.6L-30.4,286.8L-57.4,286.1ZM28.7,282.5L55.1,283.1L27.2,285.2L0.1,284.6ZM81.4,281.1L107.7,281.6L82.1,283.7L55.1,283.1ZM27.2,285.2L54.7,285.8L25.5,288.1L-2.7,287.5ZM131.7,279.7L158.0,280.3L134.5,282.2L107.7,281.6ZM82.1,283.7L109.5,284.3L82.8,286.5L54.7,285.8ZM25.5,288.1L54.3,288.8L23.6,291.4L-5.9,290.6ZM180.0,278.4L206.2,279.0L184.7,280.8L158.0,280.3ZM134.5,282.2L161.9,282.8L137.5,284.9L109.5,284.3ZM82.8,286.5L111.5,287.1L83.7,289.5L54.3,288.8ZM23.6,291.4L53.8,292.1L21.6,294.9L-9.4,294.1ZM226.4,277.2L252.4,277.7L232.8,279.5L206.2,279.0ZM184.7,280.8L212.0,281.4L189.8,283.4L161.9,282.8ZM137.5,284.9L166.1,285.5L140.8,287.8L111.5,287.1ZM83.7,289.5L113.7,290.3L84.6,292.9L53.8,292.1ZM21.6,294.9L53.2,295.8L19.3,298.8L-13.2,297.9ZM232.8,279.5L259.9,280.0L239.7,281.9L212.0,281.4ZM189.8,283.4L218.2,284.0L195.3,286.2L166.1,285.5ZM140.8,287.8L170.8,288.5L144.4,291.0L113.7,290.3ZM84.6,292.9L116.1,293.7L85.6,296.6L53.2,295.8ZM19.3,298.8L52.6,299.8L16.8,303.2L-17.4,302.2ZM278.8,278.2L305.8,278.7L287.5,280.5L259.9,280.0ZM239.7,281.9L268.0,282.5L247.3,284.6L218.2,284.0ZM195.3,286.2L225.1,286.8L201.3,289.2L170.8,288.5ZM144.4,291.0L175.8,291.8L148.4,294.5L116.1,293.7ZM85.6,296.6L118.8,297.5L86.7,300.7L52.6,299.8ZM16.8,303.2L51.9,304.2L14.0,308.0L-22.2,306.9ZM323.0,277.0L349.8,277.4L333.2,279.2L305.8,278.7ZM287.5,280.5L315.6,281.1L296.9,283.1L268.0,282.5ZM247.3,284.6L276.9,285.2L255.5,287.5L225.1,286.8ZM201.3,289.2L232.5,289.9L207.9,292.5L175.8,291.8ZM148.4,294.5L181.4,295.4L152.8,298.4L118.8,297.5ZM86.7,300.7L121.7,301.7L88.0,305.3L51.9,304.2ZM14.0,308.0L51.2,309.2L10.9,313.5L-27.5,312.2ZM365.4,275.8L392.1,276.2L377.1,277.9L349.8,277.4ZM333.2,279.2L361.2,279.7L344.3,281.6L315.6,281.1ZM296.9,283.1L326.3,283.7L307.1,285.8L276.9,285.2ZM255.5,287.5L286.5,288.2L264.5,290.7L232.5,289.9ZM207.9,292.5L240.8,293.3L215.2,296.2L181.4,295.4ZM152.8,298.4L187.6,299.3L157.6,302.7L121.7,301.7ZM88.0,305.3L125.0,306.4L89.4,310.4L51.2,309.2ZM10.9,313.5L50.3,314.8L7.3,319.7L-33.5,318.2ZM406.2,274.7L432.6,275.1L419.1,276.7L392.1,276.2ZM377.1,277.9L404.8,278.4L389.7,280.3L361.2,279.7ZM344.3,281.6L373.5,282.2L356.3,284.3L326.3,283.7ZM307.1,285.8L337.9,286.5L318.2,288.9L286.5,288.2ZM264.5,290.7L297.1,291.4L274.3,294.1L240.8,293.3ZM215.2,296.2L249.8,297.1L223.3,300.3L187.6,299.3ZM157.6,302.7L194.4,303.8L163.0,307.5L125.0,306.4ZM89.4,310.4L128.7,311.7L91.0,316.2L50.3,314.8ZM7.3,319.7L49.4,321.2L3.2,326.8L-40.4,325.1ZM419.1,276.7L446.7,277.2L433.1,278.9L404.8,278.4ZM389.7,280.3L418.7,280.8L403.3,282.8L373.5,282.2ZM356.3,284.3L386.9,284.9L369.4,287.2L337.9,286.5ZM318.2,288.9L350.6,289.6L330.4,292.2L297.1,291.4ZM274.3,294.1L308.7,295.0L285.2,298.0L249.8,297.1ZM223.3,300.3L259.8,301.3L232.2,304.8L194.4,303.8ZM163.0,307.5L202.1,308.7L169.1,313.0L128.7,311.7ZM91.0,316.2L132.9,317.6L92.8,322.8L49.4,321.2ZM3.2,326.8L48.3,328.5L-1.5,334.9L-48.2,333.0ZM459.5,275.5L486.9,276.0L474.8,277.7L446.7,277.2ZM433.1,278.9L461.9,279.5L448.2,281.4L418.7,280.8ZM403.3,282.8L433.7,283.4L418.1,285.5L386.9,284.9ZM369.4,287.2L401.5,287.8L383.7,290.3L350.6,289.6ZM330.4,292.2L364.5,293.0L343.9,295.8L308.7,295.0ZM285.2,298.0L321.5,298.9L297.3,302.3L259.8,301.3ZM232.2,304.8L271.0,305.9L242.3,309.9L202.1,308.7ZM169.1,313.0L210.7,314.3L176.0,319.1L132.9,317.6ZM92.8,322.8L137.6,324.4L94.9,330.3L48.3,328.5ZM-1.5,334.9L47.0,337.0L-6.9,344.4L-57.4,342.1ZM498.3,274.4L525.5,274.9L514.7,276.5L486.9,276.0ZM474.8,277.7L503.3,278.2L491.2,280.0L461.9,279.5ZM448.2,281.4L478.4,281.9L464.6,284.0L433.7,283.4ZM418.1,285.5L450.0,286.2L434.3,288.5L401.5,287.8ZM383.7,290.3L417.5,291.1L399.4,293.8L364.5,293.0ZM343.9,295.8L379.8,296.7L358.7,299.9L321.5,298.9ZM297.3,302.3L335.8,303.3L310.8,307.0L271.0,305.9ZM242.3,309.9L283.5,311.1L253.6,315.6L210.7,314.3ZM176.0,319.1L220.5,320.6L183.9,326.1L137.6,324.4ZM94.9,330.3L143.1,332.2L97.3,339.1L47.0,337.0ZM-6.9,344.4L45.5,346.8L-13.4,355.6L-68.2,352.9ZM535.7,273.3L562.6,273.8L553.1,275.3L525.5,274.9ZM514.7,276.5L543.1,277.0L532.4,278.7L503.3,278.2ZM491.2,280.0L521.1,280.5L509.1,282.5L478.4,281.9ZM464.6,284.0L496.2,284.6L482.5,286.8L450.0,286.2ZM434.3,288.5L467.8,289.2L452.0,291.8L417.5,291.1ZM399.4,293.8L435.0,294.6L416.7,297.6L379.8,296.7ZM358.7,299.9L396.9,300.8L375.3,304.3L335.8,303.3ZM310.8,307.0L351.8,308.2L326.0,312.4L283.5,311.1ZM253.6,315.6L297.7,317.0L266.4,322.1L220.5,320.6ZM183.9,326.1L231.7,327.8L193.0,334.1L143.1,332.2ZM97.3,339.1L149.4,341.2L100.1,349.3L45.5,346.8ZM-13.4,355.6L43.8,358.5L-21.1,369.1L-81.0,365.8ZM553.1,275.3L581.2,275.8L571.9,277.4L543.1,277.0ZM532.4,278.7L562.0,279.2L551.6,281.1L521.1,280.5ZM509.1,282.5L540.4,283.1L528.5,285.2L496.2,284.6ZM482.5,286.8L515.7,287.5L502.1,290.0L467.8,289.2ZM452.0,291.8L487.4,292.6L471.6,295.4L435.0,294.6ZM416.7,297.6L454.5,298.5L435.9,301.8L396.9,300.8ZM375.3,304.3L415.8,305.4L393.8,309.4L351.8,308.2ZM326.0,312.4L369.7,313.7L343.2,318.5L297.7,317.0ZM266.4,322.1L313.8,323.7L281.2,329.6L231.7,327.8ZM193.0,334.1L244.7,336.1L203.5,343.5L149.4,341.2ZM100.1,349.3L156.8,351.9L103.4,361.4L43.8,358.5ZM-21.1,369.1L41.7,372.5L-30.5,385.5L-96.7,381.4ZM590.0,274.2L617.9,274.6L609.8,276.2L581.2,275.8ZM571.9,277.4L601.3,277.9L592.2,279.7L562.0,279.2ZM551.6,281.1L582.6,281.6L572.3,283.7L540.4,283.1ZM528.5,285.2L561.4,285.9L549.6,288.2L515.7,287.5ZM502.1,290.0L537.1,290.7L523.5,293.4L487.4,292.6ZM471.6,295.4L508.9,296.3L493.2,299.4L454.5,298.5ZM435.9,301.8L476.0,302.8L457.4,306.5L415.8,305.4ZM393.8,309.4L437.0,310.6L414.7,315.0L369.7,313.7ZM343.2,318.5L390.0,319.9L362.7,325.4L313.8,323.7ZM281.2,329.6L332.3,331.4L298.2,338.2L244.7,336.1ZM203.5,343.5L259.7,345.8L216.0,354.5L156.8,351.9ZM103.4,361.4L165.7,364.5L107.4,376.1L41.7,372.5ZM-30.5,385.5L39.1,389.7L-42.3,405.9L-116.0,400.8ZM609.8,276.2L638.9,276.7L631.2,278.4L601.3,277.9ZM592.2,279.7L623.0,280.3L614.2,282.2L582.6,281.6ZM572.3,283.7L604.9,284.3L594.9,286.5L561.4,285.9ZM549.6,288.2L584.3,288.9L572.8,291.5L537.1,290.7ZM523.5,293.4L560.5,294.2L547.2,297.2L508.9,296.3ZM493.2,299.4L532.8,300.4L517.2,303.9L476.0,302.8ZM457.4,306.5L500.1,307.7L481.5,311.8L437.0,310.6ZM414.7,315.0L461.0,316.4L438.4,321.5L390.0,319.9ZM362.7,325.4L413.3,327.1L385.3,333.3L332.3,331.4ZM298.2,338.2L353.8,340.3L318.2,348.3L259.7,345.8ZM216.0,354.5L277.6,357.3L230.9,367.8L165.7,364.5ZM107.4,376.1L176.5,379.9L112.4,394.2L39.1,389.7ZM-42.3,405.9L35.8,411.3L-57.4,432.1L-140.7,425.5ZM646.2,275.1L675.0,275.5L668.5,277.2L638.9,276.7ZM631.2,278.4L661.6,278.9L654.3,280.8L623.0,280.3ZM614.2,282.2L646.5,282.8L638.1,284.9L604.9,284.3ZM594.9,286.5L629.2,287.2L619.7,289.6L584.3,288.9ZM572.8,291.5L609.4,292.2L598.3,295.0L560.5,294.2ZM547.2,297.2L586.4,298.1L573.5,301.4L532.8,300.4ZM517.2,303.9L559.4,304.9L544.0,308.8L500.1,307.7ZM481.5,311.8L527.2,313.1L508.7,317.8L461.0,316.4ZM438.4,321.5L488.3,323.0L465.5,328.8L413.3,327.1ZM385.3,333.3L440.1,335.3L411.5,342.6L353.8,340.3ZM318.2,348.3L379.0,350.8L341.9,360.3L277.6,357.3ZM230.9,367.8L299.0,371.2L249.0,383.9L176.5,379.9ZM112.4,394.2L189.8,399.0L118.7,417.0L35.8,411.3ZM-57.4,432.1L31.6,439.2L-77.4,466.9L-173.2,458.0ZM681.2,274.0L709.8,274.4L704.4,276.0L675.0,275.5ZM668.5,277.2L698.7,277.7L692.6,279.5L661.6,278.9ZM654.3,280.8L686.2,281.4L679.4,283.4L646.5,282.8ZM638.1,284.9L672.0,285.6L664.2,287.9L629.2,287.2ZM619.7,289.6L655.8,290.3L646.8,293.0L609.4,292.2ZM598.3,295.0L637.1,295.9L626.6,299.0L586.4,298.1ZM573.5,301.4L615.2,302.4L602.7,306.0L559.4,304.9ZM544.0,308.8L589.2,310.1L574.3,314.5L527.2,313.1ZM508.7,317.8L557.9,319.3L539.8,324.7L488.3,323.0ZM465.5,328.8L519.6,330.6L496.9,337.3L440.1,335.3ZM411.5,342.6L471.4,344.9L442.4,353.5L379.0,350.8ZM341.9,360.3L409.1,363.3L370.5,374.7L299.0,371.2ZM249.0,383.9L325.3,388.1L271.6,404.0L189.8,399.0ZM118.7,417.0L206.7,423.1L126.8,446.8L31.6,439.2ZM-77.4,466.9L26.0,476.6L-105.3,515.4L-217.9,502.6ZM704.4,276.0L734.2,276.5L729.4,278.2L698.7,277.7ZM692.6,279.5L724.2,280.0L718.7,281.9L686.2,281.4ZM679.4,283.4L712.9,284.0L706.6,286.2L672.0,285.6ZM664.2,287.9L700.0,288.6L692.8,291.1L655.8,290.3ZM646.8,293.0L685.1,293.8L676.7,296.8L637.1,295.9ZM626.6,299.0L667.7,299.9L657.9,303.4L615.2,302.4ZM602.7,306.0L647.3,307.2L635.6,311.3L589.2,310.1ZM574.3,314.5L622.8,315.8L608.7,320.8L557.9,319.3ZM539.8,324.7L593.0,326.3L575.5,332.5L519.6,330.6ZM496.9,337.3L555.8,339.5L533.7,347.3L471.4,344.9ZM442.4,353.5L508.4,356.2L479.3,366.5L409.1,363.3ZM370.5,374.7L445.5,378.4L405.7,392.5L325.3,388.1ZM271.6,404.0L358.2,409.3L300.5,429.6L206.7,423.1ZM126.8,446.8L229.0,454.9L137.9,487.1L26.0,476.6ZM-105.3,515.4L18.1,529.4L-146.8,587.6L-283.2,568.0ZM738.8,274.8L768.4,275.3L764.6,276.9L734.2,276.5ZM729.4,278.2L760.6,278.7L756.4,280.5L724.2,280.0ZM718.7,281.9L751.9,282.5L747.1,284.6L712.9,284.0ZM706.6,286.2L742.0,286.9L736.5,289.3L700.0,288.6ZM692.8,291.1L730.6,291.9L724.2,294.6L685.1,293.8ZM676.7,296.8L717.4,297.7L709.9,300.9L667.7,299.9ZM657.9,303.4L701.8,304.5L693.0,308.3L647.3,307.2ZM635.6,311.3L683.4,312.6L672.7,317.2L622.8,315.8ZM608.7,320.8L661.0,322.4L648.0,328.1L593.0,326.3ZM575.5,332.5L633.4,334.5L617.0,341.7L555.8,339.5ZM533.7,347.3L598.4,349.8L577.2,359.1L508.4,356.2ZM479.3,366.5L552.7,369.8L524.2,382.4L445.5,378.4ZM405.7,392.5L490.4,397.2L450.0,414.9L358.2,409.3ZM300.5,429.6L400.5,436.6L338.8,463.6L229.0,454.9ZM137.9,487.1L259.4,498.4L153.8,544.8L18.1,529.4ZM-146.8,587.6L6.0,609.6L-215.2,706.6L-387.9,672.8ZM764.6,276.9L795.5,277.4L792.5,279.2L760.6,278.7ZM756.4,280.5L789.2,281.1L785.7,283.1L751.9,282.5ZM747.1,284.6L782.0,285.2L778.0,287.5L742.0,286.9ZM736.5,289.3L773.8,290.0L769.2,292.6L730.6,291.9ZM724.2,294.6L764.3,295.5L759.0,298.6L717.4,297.7ZM709.9,300.9L753.2,301.9L746.9,305.6L701.8,304.5ZM693.0,308.3L740.0,309.5L732.5,313.9L683.4,312.6ZM672.7,317.2L724.2,318.7L715.0,324.0L661.0,322.4ZM648.0,328.1L704.8,329.9L693.4,336.5L633.4,334.5ZM617.0,341.7L680.5,343.9L665.9,352.4L598.4,349.8ZM577.2,359.1L649.1,362.1L629.7,373.3L552.7,369.8ZM524.2,382.4L606.9,386.5L580.0,402.1L490.4,397.2ZM450.0,414.9L547.5,420.9L507.5,444.0L400.5,436.6ZM338.8,463.6L457.2,473.1L391.9,510.8L259.4,498.4ZM153.8,544.8L303.8,561.8L178.3,634.3L6.0,609.6ZM798.4,275.7L829.0,276.2L827.0,277.9L795.5,277.4ZM792.5,279.2L824.9,279.7L822.6,281.6L789.2,281.1ZM785.7,283.1L820.2,283.7L817.6,285.9L782.0,285.2ZM778.0,287.5L814.9,288.2L811.9,290.7L773.8,290.0ZM769.2,292.6L808.7,293.4L805.3,296.4L764.3,295.5ZM759.0,298.6L801.6,299.5L797.6,302.9L753.2,301.9ZM746.9,305.6L793.2,306.7L788.4,310.7L740.0,309.5ZM732.5,313.9L783.1,315.2L777.3,320.2L724.2,318.7ZM715.0,324.0L770.8,325.6L763.6,331.7L704.8,329.9ZM693.4,336.5L755.6,338.6L746.5,346.3L680.5,343.9ZM665.9,352.4L736.1,355.1L724.2,365.2L649.1,362.1ZM629.7,373.3L710.4,377.0L694.1,390.8L606.9,386.5ZM580.0,402.1L674.7,407.3L651.2,427.2L547.5,420.9ZM507.5,444.0L622.1,451.9L585.2,483.3L457.2,473.1ZM391.9,510.8L536.8,524.4L470.5,580.7L303.8,561.8ZM178.3,634.3L374.3,662.4L221.7,792.0L-14.5,745.8ZM830.9,274.6L861.2,275.1L860.2,276.7L829.0,276.2ZM827.0,277.9L859.1,278.4L857.9,280.3L824.9,279.7ZM822.6,281.6L856.7,282.2L855.4,284.3L820.2,283.7ZM817.6,285.9L854.0,286.5L852.5,288.9L814.9,288.2ZM811.9,290.7L850.9,291.5L849.2,294.3L808.7,293.4ZM805.3,296.4L847.3,297.2L845.3,300.5L801.6,299.5ZM797.6,302.9L843.1,304.0L840.7,307.8L793.2,306.7ZM788.4,310.7L838.1,312.0L835.2,316.6L783.1,315.2ZM777.3,320.2L832.0,321.7L828.5,327.4L770.8,325.6ZM763.6,331.7L824.6,333.7L820.1,340.8L755.6,338.6ZM746.5,346.3L815.1,348.8L809.4,358.0L736.1,355.1ZM724.2,365.2L802.8,368.5L795.1,380.8L710.4,377.0ZM694.1,390.8L786.0,395.4L775.1,412.8L674.7,407.3ZM651.2,427.2L761.9,434.0L745.3,460.4L622.1,451.9ZM585.2,483.3L724.1,494.3L696.1,539.3L536.8,524.4ZM470.5,580.7L657.0,601.8L598.9,694.7L374.3,662.4ZM221.7,792.0L503.6,847.2L318.2,1143.8L-57.1,1028.8ZM860.2,276.7L891.9,277.2L891.7,278.9L859.1,278.4ZM857.9,280.3L891.6,280.8L891.5,282.8L856.7,282.2ZM855.4,284.3L891.3,284.9L891.1,287.2L854.0,286.5ZM852.5,288.9L891.0,289.7L890.8,292.3L850.9,291.5ZM849.2,294.3L890.6,295.1L890.3,298.2L847.3,297.2ZM845.3,300.5L890.1,301.5L889.9,305.1L843.1,304.0ZM840.7,307.8L889.6,309.0L889.3,313.3L838.1,312.0ZM835.2,316.6L888.9,318.0L888.5,323.3L832.0,321.7ZM828.5,327.4L888.1,329.1L887.7,335.7L824.6,333.7ZM820.1,340.8L887.1,343.0L886.5,351.4L815.1,348.8ZM809.4,358.0L885.8,360.9L885.0,372.0L802.8,368.5ZM795.1,380.8L884.1,384.9L883.0,400.2L786.0,395.4ZM775.1,412.8L881.7,418.6L880.1,441.2L761.9,434.0ZM745.3,460.4L878.0,469.6L875.4,506.4L724.1,494.3ZM696.1,539.3L871.8,555.7L866.8,625.6L657.0,601.8ZM598.9,694.7L859.1,732.1L846.0,914.2L503.6,847.2ZM892.0,275.5L923.3,276.0L924.1,277.7L891.9,277.2ZM891.7,278.9L925.0,279.5L925.9,281.4L891.6,280.8ZM891.5,282.8L926.9,283.4L927.9,285.6L891.3,284.9ZM891.1,287.2L929.1,287.9L930.3,290.4L891.0,289.7ZM890.8,292.3L931.5,293.1L932.9,296.0L890.6,295.1ZM890.3,298.2L934.4,299.1L936.1,302.5L890.1,301.5ZM889.9,305.1L937.9,306.2L939.8,310.2L889.6,309.0ZM889.3,313.3L941.9,314.6L944.3,319.5L888.9,318.0ZM888.5,323.3L946.9,324.9L949.8,331.0L888.1,329.1ZM887.7,335.7L953.1,337.7L956.7,345.4L887.1,343.0ZM886.5,351.4L960.9,354.0L965.7,364.0L885.8,360.9ZM885.0,372.0L971.3,375.6L977.8,389.1L884.1,384.9ZM883.0,400.2L985.6,405.3L995.0,424.9L881.7,418.6ZM880.1,441.2L1006.7,449.0L1021.4,479.6L878.0,469.6ZM875.4,506.4L1040.6,519.5L1066.9,574.0L871.8,555.7ZM866.8,625.6L1104.7,652.6L1164.1,775.9L859.1,732.1ZM924.1,277.7L957.0,278.2L958.9,280.0L925.0,279.5ZM925.9,281.4L960.9,281.9L963.0,284.0L926.9,283.4ZM927.9,285.6L965.3,286.2L967.8,288.6L929.1,287.9ZM930.3,290.4L970.4,291.1L973.3,293.9L931.5,293.1ZM932.9,296.0L976.3,296.8L979.6,300.0L934.4,299.1ZM936.1,302.5L983.2,303.5L987.2,307.3L937.9,306.2ZM939.8,310.2L991.5,311.5L996.2,316.0L941.9,314.6ZM944.3,319.5L1001.4,321.0L1007.2,326.6L946.9,324.9ZM949.8,331.0L1013.6,332.9L1020.9,339.9L953.1,337.7ZM956.7,345.4L1029.1,347.8L1038.5,356.8L960.9,354.0ZM965.7,364.0L1049.3,367.2L1061.8,379.4L971.3,375.6ZM977.8,389.1L1076.6,393.6L1094.3,410.7L985.6,405.3ZM995.0,424.9L1115.8,431.5L1142.6,457.3L1006.7,449.0ZM1021.4,479.6L1176.8,490.3L1222.0,534.0L1040.6,519.5ZM1066.9,574.0L1284.5,594.3L1376.8,683.4L1104.7,652.6ZM1164.1,775.9L1526.5,827.9L1811.7,1103.2L1270.8,997.4ZM958.9,280.0L993.4,280.5L996.5,282.5L960.9,281.9ZM963.0,284.0L999.9,284.6L1003.5,286.9L965.3,286.2ZM967.8,288.6L1007.3,289.3L1011.5,291.9L970.4,291.1ZM973.3,293.9L1015.9,294.7L1020.7,297.7L976.3,296.8ZM979.6,300.0L1026.0,301.0L1031.6,304.6L983.2,303.5ZM987.2,307.3L1037.8,308.5L1044.6,312.7L991.5,311.5ZM996.2,316.0L1052.1,317.4L1060.3,322.6L1001.4,321.0ZM1007.2,326.6L1069.5,328.4L1079.8,334.8L1013.6,332.9ZM1020.9,339.9L1091.3,342.1L1104.4,350.3L1029.1,347.8ZM1038.5,356.8L1119.4,359.7L1136.7,370.6L1049.3,367.2ZM1061.8,379.4L1156.9,383.3L1180.8,398.4L1076.6,393.6ZM1094.3,410.7L1209.6,416.4L1244.8,438.6L1115.8,431.5ZM1142.6,457.3L1288.9,466.3L1345.7,502.0L1176.8,490.3ZM990.4,278.7L1024.5,279.2L1028.6,281.1L993.4,280.5ZM996.5,282.5L1032.9,283.1L1037.5,285.3L999.9,284.6ZM1003.5,286.9L1042.5,287.6L1047.8,290.0L1007.3,289.3ZM1011.5,291.9L1053.5,292.7L1059.6,295.6L1015.9,294.7ZM1020.7,297.7L1066.3,298.7L1073.5,302.0L1026.0,301.0ZM1031.6,304.6L1081.3,305.7L1089.9,309.7L1037.8,308.5ZM1044.6,312.7L1099.3,314.1L1109.7,318.9L1052.1,317.4ZM1060.3,322.6L1121.2,324.2L1134.0,330.2L1069.5,328.4ZM1079.8,334.8L1148.3,336.9L1164.5,344.4L1091.3,342.1ZM1104.4,350.3L1182.8,353.0L1203.9,362.8L1119.4,359.7ZM1136.7,370.6L1228.3,374.2L1257.0,387.5L1156.9,383.3ZM1180.8,398.4L1291.0,403.4L1332.1,422.5L1209.6,416.4ZM1028.6,281.1L1064.4,281.6L1070.0,283.7L1032.9,283.1ZM1037.5,285.3L1075.9,285.9L1082.3,288.3L1042.5,287.6ZM1047.8,290.0L1089.1,290.8L1096.4,293.5L1053.5,292.7ZM1059.6,295.6L1104.4,296.4L1112.9,299.6L1066.3,298.7ZM1073.5,302.0L1122.2,303.0L1132.4,306.8L1081.3,305.7ZM1089.9,309.7L1143.5,310.9L1155.7,315.4L1099.3,314.1ZM1109.7,318.9L1169.1,320.4L1184.0,325.9L1121.2,324.2ZM1134.0,330.2L1200.7,332.1L1219.4,339.0L1148.3,336.9ZM1164.5,344.4L1240.5,346.8L1264.6,355.7L1182.8,353.0ZM1059.2,279.7L1094.6,280.3L1101.0,282.2L1064.4,281.6ZM1070.0,283.7L1107.8,284.3L1115.1,286.6L1075.9,285.9ZM1082.3,288.3L1122.9,289.0L1131.3,291.5L1089.1,290.8ZM1096.4,293.5L1140.4,294.3L1150.2,297.3L1104.4,296.4ZM1112.9,299.6L1160.8,300.6L1172.3,304.1L1122.2,303.0ZM1132.4,306.8L1184.8,308.0L1198.6,312.2L1143.5,310.9ZM1155.7,315.4L1213.7,316.8L1230.4,321.9L1169.1,320.4ZM1184.0,325.9L1249.0,327.6L1269.8,334.0L1200.7,332.1ZM1101.0,282.2L1138.3,282.8L1146.4,284.9L1107.8,284.3ZM1115.1,286.6L1155.1,287.2L1164.5,289.7L1122.9,289.0ZM1131.3,291.5L1174.6,292.3L1185.4,295.2L1140.4,294.3ZM1150.2,297.3L1197.1,298.2L1209.8,301.6L1160.8,300.6ZM1172.3,304.1L1223.6,305.2L1238.7,309.1L1184.8,308.0ZM1198.6,312.2L1255.3,313.5L1273.5,318.3L1213.7,316.8ZM1130.6,280.8L1167.4,281.4L1176.3,283.4L1138.3,282.8ZM1146.4,284.9L1185.8,285.6L1196.0,287.9L1155.1,287.2ZM1164.5,289.7L1207.0,290.4L1218.7,293.1L1174.6,292.3ZM1185.4,295.2L1231.5,296.0L1245.2,299.2L1197.1,298.2ZM1176.3,283.4L1215.1,284.0L1226.0,286.2L1185.8,285.6ZM1196.0,287.9L1237.8,288.6L1250.4,291.2L1207.0,290.4Z"/>
<filter id="bl" x="-50%" y="-50%" width="200%" height="200%"><feGaussianBlur stdDeviation="5"/></filter>
<linearGradient id="shmg" gradientUnits="userSpaceOnUse" x1="0" y1="452" x2="0" y2="492"><stop offset="0" stop-color="#fff" stop-opacity="0"/><stop offset="1" stop-color="#fff" stop-opacity="1"/></linearGradient><mask id="shm" maskUnits="userSpaceOnUse" x="380" y="380" width="320" height="200"><rect x="380" y="380" width="320" height="200" fill="url(#shmg)"/></mask>
<g mask="url(#shm)"><ellipse cx="529" cy="434" rx="84" ry="84" fill="#000" fill-opacity="0.55" filter="url(#bl)"/></g>
<clipPath id="rc"><ellipse cx="538.3" cy="617.8" rx="79.5" ry="79.4"/></clipPath>
<radialGradient id="rfl" gradientUnits="userSpaceOnUse" cx="541" cy="655" r="115" fx="542.6" fy="646.6"><stop offset="0" stop-color="#fff"/><stop offset="0.14" stop-color="#fff"/><stop offset="0.3" stop-color="#d6d6d6"/><stop offset="0.48" stop-color="#a0a0a0"/><stop offset="0.67" stop-color="#858585"/><stop offset="0.8" stop-color="#7b7b7b"/><stop offset="0.9" stop-color="#787878" stop-opacity="0.45"/><stop offset="1" stop-color="#707070" stop-opacity="0.2"/></radialGradient>
<ellipse cx="538.3" cy="617.8" rx="79.5" ry="79.4" fill="url(#rfl)" fill-opacity="0.7"/>
<rect x="0" y="218" width="1202" height="2" fill="url(#f0)"/><rect x="0" y="220" width="1202" height="2" fill="url(#f1)"/><rect x="0" y="222" width="1202" height="2" fill="url(#f2)"/><rect x="0" y="224" width="1202" height="2" fill="url(#f3)"/><rect x="0" y="226" width="1202" height="2" fill="url(#f4)"/><rect x="0" y="228" width="1202" height="2" fill="url(#f5)"/><rect x="0" y="230" width="1202" height="2" fill="url(#f6)"/><rect x="0" y="232" width="1202" height="2" fill="url(#f7)"/><rect x="0" y="234" width="1202" height="2" fill="url(#f8)"/><rect x="0" y="236" width="1202" height="2" fill="url(#f9)"/><rect x="0" y="238" width="1202" height="2" fill="url(#f10)"/><rect x="0" y="240" width="1202" height="2" fill="url(#f11)"/><rect x="0" y="242" width="1202" height="2" fill="url(#f12)"/><rect x="0" y="244" width="1202" height="2" fill="url(#f13)"/><rect x="0" y="246" width="1202" height="2" fill="url(#f14)"/><rect x="0" y="248" width="1202" height="2" fill="url(#f15)"/><rect x="0" y="250" width="1202" height="2" fill="url(#f16)"/><rect x="0" y="252" width="1202" height="2" fill="url(#f17)"/><rect x="0" y="254" width="1202" height="2" fill="url(#f18)"/><rect x="0" y="256" width="1202" height="2" fill="url(#f19)"/><rect x="0" y="258" width="1202" height="2" fill="url(#f20)"/><rect x="0" y="260" width="1202" height="2" fill="url(#f21)"/><rect x="0" y="262" width="1202" height="2" fill="url(#f22)"/><rect x="0" y="264" width="1202" height="2" fill="url(#f23)"/><rect x="0" y="266" width="1202" height="2" fill="url(#f24)"/><rect x="0" y="268" width="1202" height="2" fill="url(#f25)"/><rect x="0" y="270" width="1202" height="2" fill="url(#f26)"/><rect x="0" y="272" width="1202" height="2" fill="url(#f27)"/><rect x="0" y="274" width="1202" height="2" fill="url(#f28)"/><rect x="0" y="276" width="1202" height="2" fill="url(#f29)"/><rect x="0" y="278" width="1202" height="2" fill="url(#f30)"/><rect x="0" y="280" width="1202" height="2" fill="url(#f31)"/><rect x="0" y="282" width="1202" height="2" fill="url(#f32)"/><rect x="0" y="284" width="1202" height="2" fill="url(#f33)"/><rect x="0" y="286" width="1202" height="2" fill="url(#f34)"/><rect x="0" y="288" width="1202" height="2" fill="url(#f35)"/><rect x="0" y="290" width="1202" height="2" fill="url(#f36)"/><rect x="0" y="292" width="1202" height="2" fill="url(#f37)"/><rect x="0" y="294" width="1202" height="2" fill="url(#f38)"/><rect x="0" y="296" width="1202" height="2" fill="url(#f39)"/><rect x="0" y="298" width="1202" height="2" fill="url(#f40)"/><rect x="0" y="300" width="1202" height="2" fill="url(#f41)"/><rect x="0" y="302" width="1202" height="2" fill="url(#f42)"/><rect x="0" y="304" width="1202" height="2" fill="url(#f43)"/><rect x="0" y="306" width="1202" height="2" fill="url(#f44)"/><rect x="0" y="308" width="1202" height="2" fill="url(#f45)"/><rect x="0" y="310" width="1202" height="2" fill="url(#f46)"/><rect x="0" y="312" width="1202" height="2" fill="url(#f47)"/><rect x="0" y="314" width="1202" height="2" fill="url(#f48)"/><rect x="0" y="316" width="1202" height="2" fill="url(#f49)"/><rect x="0" y="318" width="1202" height="2" fill="url(#f50)"/><rect x="0" y="320" width="1202" height="2" fill="url(#f51)"/><rect x="0" y="322" width="1202" height="2" fill="url(#f52)"/><rect x="0" y="324" width="1202" height="2" fill="url(#f53)"/><rect x="0" y="326" width="1202" height="2" fill="url(#f54)"/><rect x="0" y="328" width="1202" height="2" fill="url(#f55)"/><rect x="0" y="330" width="1202" height="2" fill="url(#f56)"/><rect x="0" y="332" width="1202" height="2" fill="url(#f57)"/><rect x="0" y="334" width="1202" height="2" fill="url(#f58)"/><rect x="0" y="336" width="1202" height="2" fill="url(#f59)"/><rect x="0" y="338" width="1202" height="2" fill="url(#f60)"/><rect x="0" y="340" width="1202" height="2" fill="url(#f61)"/><rect x="0" y="342" width="1202" height="2" fill="url(#f62)"/><rect x="0" y="344" width="1202" height="2" fill="url(#f63)"/><rect x="0" y="346" width="1202" height="2" fill="url(#f64)"/><rect x="0" y="348" width="1202" height="2" fill="url(#f65)"/><rect x="0" y="350" width="1202" height="2" fill="url(#f66)"/><rect x="0" y="352" width="1202" height="2" fill="url(#f67)"/><rect x="0" y="354" width="1202" height="2" fill="url(#f68)"/><rect x="0" y="356" width="1202" height="2" fill="url(#f69)"/><rect x="0" y="358" width="1202" height="2" fill="url(#f70)"/><rect x="0" y="360" width="1202" height="2" fill="url(#f71)"/><rect x="0" y="362" width="1202" height="2" fill="url(#f72)"/><rect x="0" y="364" width="1202" height="2" fill="url(#f73)"/><rect x="0" y="366" width="1202" height="2" fill="url(#f74)"/><rect x="0" y="368" width="1202" height="2" fill="url(#f75)"/><rect x="0" y="370" width="1202" height="2" fill="url(#f76)"/><rect x="0" y="372" width="1202" height="2" fill="url(#f77)"/><rect x="0" y="374" width="1202" height="2" fill="url(#f78)"/><rect x="0" y="376" width="1202" height="2" fill="url(#f79)"/><rect x="0" y="378" width="1202" height="2" fill="url(#f80)"/><rect x="0" y="380" width="1202" height="2" fill="url(#f81)"/><rect x="0" y="382" width="1202" height="2" fill="url(#f82)"/><rect x="0" y="384" width="1202" height="2" fill="url(#f83)"/><rect x="0" y="386" width="1202" height="2" fill="url(#f84)"/><rect x="0" y="388" width="1202" height="2" fill="url(#f85)"/><rect x="0" y="390" width="1202" height="2" fill="url(#f86)"/><rect x="0" y="392" width="1202" height="2" fill="url(#f87)"/><rect x="0" y="394" width="1202" height="2" fill="url(#f88)"/><rect x="0" y="396" width="1202" height="2" fill="url(#f89)"/><rect x="0" y="398" width="1202" height="2" fill="url(#f90)"/><rect x="0" y="400" width="1202" height="2" fill="url(#f91)"/><rect x="0" y="402" width="1202" height="2" fill="url(#f92)"/><rect x="0" y="404" width="1202" height="2" fill="url(#f93)"/><rect x="0" y="406" width="1202" height="2" fill="url(#f94)"/><rect x="0" y="408" width="1202" height="2" fill="url(#f95)"/><rect x="0" y="410" width="1202" height="2" fill="url(#f96)"/><rect x="0" y="412" width="1202" height="2" fill="url(#f97)"/><rect x="0" y="414" width="1202" height="2" fill="url(#f98)"/><rect x="0" y="416" width="1202" height="2" fill="url(#f99)"/><rect x="0" y="418" width="1202" height="2" fill="url(#f100)"/><rect x="0" y="420" width="1202" height="2" fill="url(#f101)"/><rect x="0" y="422" width="1202" height="2" fill="url(#f102)"/><rect x="0" y="424" width="1202" height="2" fill="url(#f103)"/><rect x="0" y="426" width="1202" height="2" fill="url(#f104)"/><rect x="0" y="428" width="1202" height="2" fill="url(#f105)"/><rect x="0" y="430" width="1202" height="2" fill="url(#f106)"/><rect x="0" y="432" width="1202" height="2" fill="url(#f107)"/><rect x="0" y="434" width="1202" height="2" fill="url(#f108)"/><rect x="0" y="436" width="1202" height="2" fill="url(#f109)"/><rect x="0" y="438" width="1202" height="2" fill="url(#f110)"/><rect x="0" y="440" width="1202" height="4" fill="url(#f111)"/><rect x="0" y="444" width="1202" height="4" fill="url(#f112)"/><rect x="0" y="448" width="1202" height="4" fill="url(#f113)"/><rect x="0" y="452" width="1202" height="4" fill="url(#f114)"/><rect x="0" y="456" width="1202" height="4" fill="url(#f115)"/><rect x="0" y="460" width="1202" height="4" fill="url(#f116)"/><rect x="0" y="464" width="1202" height="4" fill="url(#f117)"/><rect x="0" y="468" width="1202" height="4" fill="url(#f118)"/><rect x="0" y="472" width="1202" height="4" fill="url(#f119)"/><rect x="0" y="476" width="1202" height="4" fill="url(#f120)"/><rect x="0" y="480" width="1202" height="4" fill="url(#f121)"/><rect x="0" y="484" width="1202" height="4" fill="url(#f122)"/><rect x="0" y="488" width="1202" height="4" fill="url(#f123)"/><rect x="0" y="492" width="1202" height="4" fill="url(#f124)"/><rect x="0" y="496" width="1202" height="4" fill="url(#f125)"/><rect x="0" y="500" width="1202" height="4" fill="url(#f126)"/><rect x="0" y="504" width="1202" height="4" fill="url(#f127)"/><rect x="0" y="508" width="1202" height="4" fill="url(#f128)"/><rect x="0" y="512" width="1202" height="4" fill="url(#f129)"/><rect x="0" y="516" width="1202" height="4" fill="url(#f130)"/><rect x="0" y="520" width="1202" height="4" fill="url(#f131)"/><rect x="0" y="524" width="1202" height="4" fill="url(#f132)"/><rect x="0" y="528" width="1202" height="4" fill="url(#f133)"/><rect x="0" y="532" width="1202" height="4" fill="url(#f134)"/><rect x="0" y="536" width="1202" height="4" fill="url(#f135)"/><rect x="0" y="540" width="1202" height="4" fill="url(#f136)"/><rect x="0" y="544" width="1202" height="4" fill="url(#f137)"/><rect x="0" y="548" width="1202" height="4" fill="url(#f138)"/><rect x="0" y="552" width="1202" height="4" fill="url(#f139)"/><rect x="0" y="556" width="1202" height="4" fill="url(#f140)"/><rect x="0" y="560" width="1202" height="4" fill="url(#f141)"/><rect x="0" y="564" width="1202" height="4" fill="url(#f142)"/><rect x="0" y="568" width="1202" height="4" fill="url(#f143)"/><rect x="0" y="572" width="1202" height="4" fill="url(#f144)"/><rect x="0" y="576" width="1202" height="4" fill="url(#f145)"/><rect x="0" y="580" width="1202" height="4" fill="url(#f146)"/><rect x="0" y="584" width="1202" height="4" fill="url(#f147)"/><rect x="0" y="588" width="1202" height="4" fill="url(#f148)"/><rect x="0" y="592" width="1202" height="4" fill="url(#f149)"/><rect x="0" y="596" width="1202" height="4" fill="url(#f150)"/><rect x="0" y="600" width="1202" height="8" fill="url(#f151)"/><rect x="0" y="608" width="1202" height="8" fill="url(#f152)"/><rect x="0" y="616" width="1202" height="8" fill="url(#f153)"/><rect x="0" y="624" width="1202" height="8" fill="url(#f154)"/><rect x="0" y="632" width="1202" height="8" fill="url(#f155)"/><rect x="0" y="640" width="1202" height="8" fill="url(#f156)"/><rect x="0" y="648" width="1202" height="8" fill="url(#f157)"/><rect x="0" y="656" width="1202" height="8" fill="url(#f158)"/><rect x="0" y="664" width="1202" height="8" fill="url(#f159)"/><rect x="0" y="672" width="1202" height="8" fill="url(#f160)"/><rect x="0" y="680" width="1202" height="8" fill="url(#f161)"/><rect x="0" y="688" width="1202" height="8" fill="url(#f162)"/><rect x="0" y="696" width="1202" height="8" fill="url(#f163)"/><rect x="0" y="704" width="1202" height="8" fill="url(#f164)"/><rect x="0" y="712" width="1202" height="8" fill="url(#f165)"/><rect x="0" y="720" width="1202" height="8" fill="url(#f166)"/><rect x="0" y="728" width="1202" height="8" fill="url(#f167)"/><rect x="0" y="736" width="1202" height="8" fill="url(#f168)"/><rect x="0" y="744" width="1202" height="8" fill="url(#f169)"/><rect x="0" y="752" width="1202" height="8" fill="url(#f170)"/><rect x="0" y="760" width="1202" height="8" fill="url(#f171)"/><rect x="0" y="768" width="1202" height="8" fill="url(#f172)"/><rect x="0" y="776" width="1202" height="8" fill="url(#f173)"/><rect x="0" y="784" width="1202" height="8" fill="url(#f174)"/><rect x="0" y="792" width="1202" height="8" fill="url(#f175)"/><rect x="0" y="800" width="1202" height="8" fill="url(#f176)"/><rect x="0" y="808" width="1202" height="8" fill="url(#f177)"/><rect x="0" y="816" width="1202" height="8" fill="url(#f178)"/><rect x="0" y="824" width="1202" height="8" fill="url(#f179)"/>
<linearGradient id="sr0" gradientUnits="userSpaceOnUse" x1="508.78" y1="507.03" x2="562.72" y2="351.47"><stop offset="0" stop-color="rgb(72,72,72)"/><stop offset="1" stop-color="rgb(140,140,140)"/></linearGradient><linearGradient id="sr1" gradientUnits="userSpaceOnUse" x1="508.79" y1="507.01" x2="562.71" y2="351.49"><stop offset="0" stop-color="rgb(75,75,75)"/><stop offset="1" stop-color="rgb(142,142,142)"/></linearGradient><linearGradient id="sr2" gradientUnits="userSpaceOnUse" x1="508.81" y1="506.95" x2="562.69" y2="351.55"><stop offset="0" stop-color="rgb(77,77,77)"/><stop offset="1" stop-color="rgb(145,145,145)"/></linearGradient><linearGradient id="sr3" gradientUnits="userSpaceOnUse" x1="508.85" y1="506.85" x2="562.65" y2="351.65"><stop offset="0" stop-color="rgb(79,79,79)"/><stop offset="1" stop-color="rgb(147,147,147)"/></linearGradient><linearGradient id="sr4" gradientUnits="userSpaceOnUse" x1="508.90" y1="506.71" x2="562.60" y2="351.79"><stop offset="0" stop-color="rgb(82,82,82)"/><stop offset="1" stop-color="rgb(149,149,149)"/></linearGradient><linearGradient id="sr5" gradientUnits="userSpaceOnUse" x1="508.96" y1="506.53" x2="562.54" y2="351.97"><stop offset="0" stop-color="rgb(84,84,84)"/><stop offset="1" stop-color="rgb(152,152,152)"/></linearGradient><linearGradient id="sr6" gradientUnits="userSpaceOnUse" x1="509.04" y1="506.31" x2="562.46" y2="352.19"><stop offset="0" stop-color="rgb(87,87,87)"/><stop offset="1" stop-color="rgb(154,154,154)"/></linearGradient><linearGradient id="sr7" gradientUnits="userSpaceOnUse" x1="509.13" y1="506.04" x2="562.37" y2="352.46"><stop offset="0" stop-color="rgb(89,89,89)"/><stop offset="1" stop-color="rgb(156,156,156)"/></linearGradient><linearGradient id="sr8" gradientUnits="userSpaceOnUse" x1="509.23" y1="505.74" x2="562.27" y2="352.76"><stop offset="0" stop-color="rgb(92,92,92)"/><stop offset="1" stop-color="rgb(158,158,158)"/></linearGradient><linearGradient id="sr9" gradientUnits="userSpaceOnUse" x1="509.35" y1="505.39" x2="562.15" y2="353.11"><stop offset="0" stop-color="rgb(94,94,94)"/><stop offset="1" stop-color="rgb(161,161,161)"/></linearGradient><linearGradient id="sr10" gradientUnits="userSpaceOnUse" x1="509.49" y1="505.00" x2="562.01" y2="353.50"><stop offset="0" stop-color="rgb(97,97,97)"/><stop offset="1" stop-color="rgb(163,163,163)"/></linearGradient><linearGradient id="sr11" gradientUnits="userSpaceOnUse" x1="509.64" y1="504.56" x2="561.86" y2="353.94"><stop offset="0" stop-color="rgb(99,99,99)"/><stop offset="1" stop-color="rgb(165,165,165)"/></linearGradient><linearGradient id="sr12" gradientUnits="userSpaceOnUse" x1="509.81" y1="504.08" x2="561.69" y2="354.42"><stop offset="0" stop-color="rgb(102,102,102)"/><stop offset="1" stop-color="rgb(167,167,167)"/></linearGradient><linearGradient id="sr13" gradientUnits="userSpaceOnUse" x1="509.99" y1="503.56" x2="561.51" y2="354.94"><stop offset="0" stop-color="rgb(105,105,105)"/><stop offset="1" stop-color="rgb(169,169,169)"/></linearGradient><linearGradient id="sr14" gradientUnits="userSpaceOnUse" x1="510.19" y1="502.99" x2="561.31" y2="355.51"><stop offset="0" stop-color="rgb(107,107,107)"/><stop offset="1" stop-color="rgb(171,171,171)"/></linearGradient><linearGradient id="sr15" gradientUnits="userSpaceOnUse" x1="510.40" y1="502.37" x2="561.10" y2="356.13"><stop offset="0" stop-color="rgb(110,110,110)"/><stop offset="1" stop-color="rgb(173,173,173)"/></linearGradient><linearGradient id="sr16" gradientUnits="userSpaceOnUse" x1="510.63" y1="501.71" x2="560.87" y2="356.79"><stop offset="0" stop-color="rgb(113,113,113)"/><stop offset="1" stop-color="rgb(176,176,176)"/></linearGradient><linearGradient id="sr17" gradientUnits="userSpaceOnUse" x1="510.88" y1="500.99" x2="560.62" y2="357.51"><stop offset="0" stop-color="rgb(115,115,115)"/><stop offset="1" stop-color="rgb(178,178,178)"/></linearGradient><linearGradient id="sr18" gradientUnits="userSpaceOnUse" x1="511.14" y1="500.23" x2="560.36" y2="358.27"><stop offset="0" stop-color="rgb(118,118,118)"/><stop offset="1" stop-color="rgb(180,180,180)"/></linearGradient><linearGradient id="sr19" gradientUnits="userSpaceOnUse" x1="511.43" y1="499.41" x2="560.07" y2="359.09"><stop offset="0" stop-color="rgb(121,121,121)"/><stop offset="1" stop-color="rgb(182,182,182)"/></linearGradient><linearGradient id="sr20" gradientUnits="userSpaceOnUse" x1="511.73" y1="498.53" x2="559.77" y2="359.97"><stop offset="0" stop-color="rgb(123,123,123)"/><stop offset="1" stop-color="rgb(184,184,184)"/></linearGradient><linearGradient id="sr21" gradientUnits="userSpaceOnUse" x1="512.05" y1="497.60" x2="559.45" y2="360.90"><stop offset="0" stop-color="rgb(126,126,126)"/><stop offset="1" stop-color="rgb(186,186,186)"/></linearGradient><linearGradient id="sr22" gradientUnits="userSpaceOnUse" x1="512.40" y1="496.61" x2="559.10" y2="361.89"><stop offset="0" stop-color="rgb(129,129,129)"/><stop offset="1" stop-color="rgb(188,188,188)"/></linearGradient><linearGradient id="sr23" gradientUnits="userSpaceOnUse" x1="512.76" y1="495.56" x2="558.74" y2="362.94"><stop offset="0" stop-color="rgb(132,132,132)"/><stop offset="1" stop-color="rgb(190,190,190)"/></linearGradient><linearGradient id="sr24" gradientUnits="userSpaceOnUse" x1="513.15" y1="494.44" x2="558.35" y2="364.06"><stop offset="0" stop-color="rgb(135,135,135)"/><stop offset="1" stop-color="rgb(191,191,191)"/></linearGradient><linearGradient id="sr25" gradientUnits="userSpaceOnUse" x1="513.56" y1="493.26" x2="557.94" y2="365.24"><stop offset="0" stop-color="rgb(138,138,138)"/><stop offset="1" stop-color="rgb(193,193,193)"/></linearGradient><linearGradient id="sr26" gradientUnits="userSpaceOnUse" x1="514.00" y1="492.00" x2="557.50" y2="366.50"><stop offset="0" stop-color="rgb(141,141,141)"/><stop offset="1" stop-color="rgb(195,195,195)"/></linearGradient><linearGradient id="sr27" gradientUnits="userSpaceOnUse" x1="514.46" y1="490.67" x2="557.04" y2="367.83"><stop offset="0" stop-color="rgb(144,144,144)"/><stop offset="1" stop-color="rgb(197,197,197)"/></linearGradient><linearGradient id="sr28" gradientUnits="userSpaceOnUse" x1="514.95" y1="489.25" x2="556.55" y2="369.25"><stop offset="0" stop-color="rgb(147,147,147)"/><stop offset="1" stop-color="rgb(199,199,199)"/></linearGradient><linearGradient id="sr29" gradientUnits="userSpaceOnUse" x1="515.47" y1="487.75" x2="556.03" y2="370.75"><stop offset="0" stop-color="rgb(150,150,150)"/><stop offset="1" stop-color="rgb(200,200,200)"/></linearGradient><linearGradient id="sr30" gradientUnits="userSpaceOnUse" x1="516.02" y1="486.15" x2="555.48" y2="372.35"><stop offset="0" stop-color="rgb(153,153,153)"/><stop offset="1" stop-color="rgb(202,202,202)"/></linearGradient><linearGradient id="sr31" gradientUnits="userSpaceOnUse" x1="516.61" y1="484.45" x2="554.89" y2="374.05"><stop offset="0" stop-color="rgb(156,156,156)"/><stop offset="1" stop-color="rgb(204,204,204)"/></linearGradient><linearGradient id="sr32" gradientUnits="userSpaceOnUse" x1="517.24" y1="482.64" x2="554.26" y2="375.86"><stop offset="0" stop-color="rgb(159,159,159)"/><stop offset="1" stop-color="rgb(205,205,205)"/></linearGradient><linearGradient id="sr33" gradientUnits="userSpaceOnUse" x1="517.91" y1="480.70" x2="553.59" y2="377.80"><stop offset="0" stop-color="rgb(162,162,162)"/><stop offset="1" stop-color="rgb(207,207,207)"/></linearGradient><linearGradient id="sr34" gradientUnits="userSpaceOnUse" x1="518.63" y1="478.62" x2="552.87" y2="379.88"><stop offset="0" stop-color="rgb(165,165,165)"/><stop offset="1" stop-color="rgb(208,208,208)"/></linearGradient><linearGradient id="sr35" gradientUnits="userSpaceOnUse" x1="519.41" y1="476.39" x2="552.09" y2="382.11"><stop offset="0" stop-color="rgb(169,169,169)"/><stop offset="1" stop-color="rgb(210,210,210)"/></linearGradient><linearGradient id="sr36" gradientUnits="userSpaceOnUse" x1="520.25" y1="473.97" x2="551.25" y2="384.53"><stop offset="0" stop-color="rgb(172,172,172)"/><stop offset="1" stop-color="rgb(211,211,211)"/></linearGradient><linearGradient id="sr37" gradientUnits="userSpaceOnUse" x1="521.16" y1="471.34" x2="550.34" y2="387.16"><stop offset="0" stop-color="rgb(176,176,176)"/><stop offset="1" stop-color="rgb(212,212,212)"/></linearGradient><linearGradient id="sr38" gradientUnits="userSpaceOnUse" x1="522.16" y1="468.46" x2="549.34" y2="390.04"><stop offset="0" stop-color="rgb(179,179,179)"/><stop offset="1" stop-color="rgb(213,213,213)"/></linearGradient><linearGradient id="sr39" gradientUnits="userSpaceOnUse" x1="523.27" y1="465.26" x2="548.23" y2="393.24"><stop offset="0" stop-color="rgb(183,183,183)"/><stop offset="1" stop-color="rgb(214,214,214)"/></linearGradient><linearGradient id="sr40" gradientUnits="userSpaceOnUse" x1="524.52" y1="461.65" x2="546.98" y2="396.85"><stop offset="0" stop-color="rgb(187,187,187)"/><stop offset="1" stop-color="rgb(215,215,215)"/></linearGradient><linearGradient id="sr41" gradientUnits="userSpaceOnUse" x1="525.96" y1="457.48" x2="545.54" y2="401.02"><stop offset="0" stop-color="rgb(191,191,191)"/><stop offset="1" stop-color="rgb(216,216,216)"/></linearGradient><linearGradient id="sr42" gradientUnits="userSpaceOnUse" x1="527.71" y1="452.43" x2="543.79" y2="406.07"><stop offset="0" stop-color="rgb(196,196,196)"/><stop offset="1" stop-color="rgb(216,216,216)"/></linearGradient><linearGradient id="sr43" gradientUnits="userSpaceOnUse" x1="530.03" y1="445.74" x2="541.47" y2="412.76"><stop offset="0" stop-color="rgb(201,201,201)"/><stop offset="1" stop-color="rgb(215,215,215)"/></linearGradient>
<ellipse cx="535.75" cy="429.25" rx="82.95" ry="82.25" fill="url(#sr0)" shape-rendering="crispEdges"/><ellipse cx="535.75" cy="429.25" rx="82.93" ry="82.23" fill="url(#sr1)"/><ellipse cx="535.75" cy="429.25" rx="82.86" ry="82.16" fill="url(#sr2)"/><ellipse cx="535.75" cy="429.25" rx="82.76" ry="82.06" fill="url(#sr3)"/><ellipse cx="535.75" cy="429.25" rx="82.61" ry="81.91" fill="url(#sr4)"/><ellipse cx="535.75" cy="429.25" rx="82.41" ry="81.72" fill="url(#sr5)"/><ellipse cx="535.75" cy="429.25" rx="82.18" ry="81.48" fill="url(#sr6)"/><ellipse cx="535.75" cy="429.25" rx="81.89" ry="81.20" fill="url(#sr7)"/><ellipse cx="535.75" cy="429.25" rx="81.57" ry="80.88" fill="url(#sr8)"/><ellipse cx="535.75" cy="429.25" rx="81.20" ry="80.51" fill="url(#sr9)"/><ellipse cx="535.75" cy="429.25" rx="80.78" ry="80.10" fill="url(#sr10)"/><ellipse cx="535.75" cy="429.25" rx="80.32" ry="79.64" fill="url(#sr11)"/><ellipse cx="535.75" cy="429.25" rx="79.81" ry="79.13" fill="url(#sr12)"/><ellipse cx="535.75" cy="429.25" rx="79.25" ry="78.58" fill="url(#sr13)"/><ellipse cx="535.75" cy="429.25" rx="78.64" ry="77.98" fill="url(#sr14)"/><ellipse cx="535.75" cy="429.25" rx="77.98" ry="77.32" fill="url(#sr15)"/><ellipse cx="535.75" cy="429.25" rx="77.27" ry="76.62" fill="url(#sr16)"/><ellipse cx="535.75" cy="429.25" rx="76.51" ry="75.86" fill="url(#sr17)"/><ellipse cx="535.75" cy="429.25" rx="75.69" ry="75.05" fill="url(#sr18)"/><ellipse cx="535.75" cy="429.25" rx="74.82" ry="74.19" fill="url(#sr19)"/><ellipse cx="535.75" cy="429.25" rx="73.89" ry="73.26" fill="url(#sr20)"/><ellipse cx="535.75" cy="429.25" rx="72.89" ry="72.28" fill="url(#sr21)"/><ellipse cx="535.75" cy="429.25" rx="71.84" ry="71.23" fill="url(#sr22)"/><ellipse cx="535.75" cy="429.25" rx="70.71" ry="70.12" fill="url(#sr23)"/><ellipse cx="535.75" cy="429.25" rx="69.52" ry="68.94" fill="url(#sr24)"/><ellipse cx="535.75" cy="429.25" rx="68.26" ry="67.68" fill="url(#sr25)"/><ellipse cx="535.75" cy="429.25" rx="66.92" ry="66.35" fill="url(#sr26)"/><ellipse cx="535.75" cy="429.25" rx="65.50" ry="64.94" fill="url(#sr27)"/><ellipse cx="535.75" cy="429.25" rx="63.99" ry="63.45" fill="url(#sr28)"/><ellipse cx="535.75" cy="429.25" rx="62.38" ry="61.86" fill="url(#sr29)"/><ellipse cx="535.75" cy="429.25" rx="60.68" ry="60.17" fill="url(#sr30)"/><ellipse cx="535.75" cy="429.25" rx="58.87" ry="58.37" fill="url(#sr31)"/><ellipse cx="535.75" cy="429.25" rx="56.93" ry="56.45" fill="url(#sr32)"/><ellipse cx="535.75" cy="429.25" rx="54.87" ry="54.40" fill="url(#sr33)"/><ellipse cx="535.75" cy="429.25" rx="52.65" ry="52.21" fill="url(#sr34)"/><ellipse cx="535.75" cy="429.25" rx="50.27" ry="49.84" fill="url(#sr35)"/><ellipse cx="535.75" cy="429.25" rx="47.69" ry="47.29" fill="url(#sr36)"/><ellipse cx="535.75" cy="429.25" rx="44.89" ry="44.51" fill="url(#sr37)"/><ellipse cx="535.75" cy="429.25" rx="41.82" ry="41.46" fill="url(#sr38)"/><ellipse cx="535.75" cy="429.25" rx="38.40" ry="38.08" fill="url(#sr39)"/><ellipse cx="535.75" cy="429.25" rx="34.56" ry="34.27" fill="url(#sr40)"/><ellipse cx="535.75" cy="429.25" rx="30.10" ry="29.85" fill="url(#sr41)"/><ellipse cx="535.75" cy="429.25" rx="24.72" ry="24.52" fill="url(#sr42)"/><ellipse cx="535.75" cy="429.25" rx="17.58" ry="17.44" fill="url(#sr43)"/>
<radialGradient id="spec" gradientUnits="userSpaceOnUse" cx="540.5" cy="422.5" r="38"><stop offset="0" stop-color="#fff" stop-opacity="1"/><stop offset="0.12" stop-color="#fff" stop-opacity="0.95"/><stop offset="0.3" stop-color="#fff" stop-opacity="0.7"/><stop offset="0.45" stop-color="#fff" stop-opacity="0.42"/><stop offset="0.6" stop-color="#fff" stop-opacity="0.2"/><stop offset="0.78" stop-color="#fff" stop-opacity="0.06"/><stop offset="1" stop-color="#fff" stop-opacity="0"/></radialGradient>
<ellipse cx="535.75" cy="429.25" rx="82.95" ry="82.25" fill="url(#spec)"/>
</g></svg>
<div class="a" style="left:0px;top:0px;width:1202px;height:1px;background:#222;"></div>
<div class="a" style="left:1px;top:1px;width:1200px;height:30px;background:#fafafa;border-radius:7px 7px 0 0"></div>
<div class="a" style="left:2px;top:2px;width:1198px;height:28px;background:#f3f3f3;border-radius:6px 6px 0 0"></div>
<div class="a" style="left:1px;top:30px;width:1200px;height:1px;background:#fff;"></div>
<div class="a" style="left:30px;top:8px;font-family:'Liberation Sans',sans-serif;font-size:12.5px;letter-spacing:-0.45px;color:#8c8c8c;line-height:16px;will-change:transform">Esdief</div>
<svg class="a" style="left:0;top:0" width="30" height="26"><defs><linearGradient id="ic" x1="0" y1="0" x2="0.3" y2="1"><stop offset="0" stop-color="#5a86c0"/><stop offset="0.5" stop-color="#3a8a80"/><stop offset="1" stop-color="#50aa60"/></linearGradient><linearGradient id="ic2" x1="0" y1="0" x2="0" y2="1"><stop offset="0" stop-color="#80a8d8"/><stop offset="1" stop-color="#a0d8a0"/></linearGradient></defs><rect x="9.5" y="8.5" width="14" height="12" fill="#f4f4f4" stroke="#a4a4a4"/><rect x="10" y="9" width="13" height="1" fill="#d4d8dc"/><rect x="11" y="11" width="5" height="8" fill="url(#ic)"/><rect x="18" y="11" width="2" height="8" fill="#e2e2e2"/><rect x="21" y="11" width="2" height="5" fill="url(#ic2)"/></svg>
<div class="a" style="left:1082px;top:15px;width:10px;height:1px;background:#8c8c8c;"></div>
<div class="a" style="left:1127px;top:10px;width:8px;height:8px;border:1px solid #8c8c8c;border-radius:1.5px"></div>
<svg class="a" style="left:1172px;top:9px" width="12" height="12"><path d="M1 1L11 11M11 1L1 11" stroke="#8c8c8c" stroke-width="1.05"/></svg>
<div class="a" style="left:0px;top:31px;width:1px;height:800px;background:#3c3c3c;"></div>
<div class="a" style="left:1201px;top:31px;width:1px;height:800px;background:#3c3c3c;"></div>
<div class="a" style="left:1px;top:31px;width:1200px;height:1px;background:#45454f;"></div>
<div class="a" style="left:2px;top:32px;width:1198px;height:17px;background:#242424;"></div>
<div class="a" style="left:1px;top:49px;width:1200px;height:1px;background:#45454f;"></div>
<div class="a" style="left:1px;top:32px;width:1px;height:17px;background:#45454f;"></div>
<div class="a" style="left:1200px;top:32px;width:1px;height:17px;background:#45454f;"></div>
<div class="a" style="left:872px;top:50px;width:328px;height:720px;background:rgba(15,15,15,0.94);"></div>
<div class="a" style="left:871px;top:50px;width:1px;height:721px;background:#45454f;"></div>
<div class="a" style="left:1200px;top:50px;width:1px;height:721px;background:#45454f;"></div>
<div class="a" style="left:871px;top:770px;width:330px;height:1px;background:#45454f;"></div>
<svg class="a" style="left:1187px;top:757px" width="13" height="13"><path d="M13 0L13 13L0 13Z" fill="rgba(66,150,250,0.2)"/></svg>
<div class="a" style="left:936px;top:75px;width:71px;height:19px;background:#22446c;"></div>
<div class="a" style="left:879px;top:98px;width:312px;height:198px;border:1px solid #45454f"></div>
<div class="a" style="left:883px;top:106px;width:306px;height:1px;background:#4c4c55;"></div>
<div class="a" style="left:883px;top:127px;width:306px;height:1px;background:#4a4a52;"></div>
<div class="a" style="left:912px;top:108px;width:1px;height:41px;background:#45454d;"></div>
<div class="a" style="left:1022px;top:108px;width:1px;height:41px;background:#45454d;"></div>
<div class="a" style="left:1104px;top:108px;width:1px;height:41px;background:#45454d;"></div>
<div class="a" style="left:875px;top:302px;width:321px;height:1px;background:#45454f;"></div>
<div class="a" style="left:2px;top:790px;width:1198px;height:40px;background:rgba(15,15,15,0.94);"></div>
<div class="a" style="left:1px;top:771px;width:1200px;height:1px;background:#45454f;"></div>
<div class="a" style="left:2px;top:772px;width:1198px;height:18px;background:#0a0a0a;"></div>
<div class="a" style="left:1px;top:772px;width:1px;height:58px;background:#45454f;"></div>
<div class="a" style="left:1200px;top:772px;width:1px;height:58px;background:#45454f;"></div>
<div class="a" style="left:1px;top:830px;width:1200px;height:1px;background:#45454f;"></div>
<div class="a" style="left:0px;top:831px;width:1202px;height:1px;background:#3c3c3c;"></div>
<svg class="a" style="left:0;top:822px" width="10" height="10"><path d="M0 0V10H10V9A8 8 0 0 1 1 1V0Z" fill="#303030"/><path d="M1.5 0V1A7.5 7.5 0 0 0 9 8.5H10" fill="none" stroke="#45454f"/></svg>
<svg class="a" style="left:1192px;top:822px" width="10" height="10"><path d="M10 0V10H0V9A8 8 0 0 0 9 1V0Z" fill="#303030"/><path d="M8.5 0V1A7.5 7.5 0 0 1 1 8.5H0" fill="none" stroke="#45454f"/></svg>
<div class="a" style="left:9px;top:798px;width:19px;height:19px;background:#22446c;"></div>
<svg class="a" style="left:9px;top:798px" width="19" height="19"><path d="M5.5 4.6L14.2 9.5L5.5 14.4Z" fill="#fff"/></svg>
<div class="a" style="left:36px;top:798px;width:980px;height:19px;background:#1e2f4a;"></div>
<div class="a" style="left:38px;top:800px;width:12px;height:15px;background:#3d85e0;"></div>
<div class="a" style="left:1024px;top:798px;width:24px;height:19px;background:#1e2f4a;"></div>
<div class="a" style="left:1052px;top:798px;width:19px;height:19px;background:#22446c;"></div>
<div class="a" style="left:1075px;top:798px;width:19px;height:19px;background:#22446c;"></div>
<div class="a" style="left:1183px;top:798px;width:14px;height:19px;background:#22446c;"></div>
<svg class="a" style="left:0;top:0" width="1202" height="832" shape-rendering="crispEdges"><path fill="#fff" d="M14 37h5v1h-5zM14 38h1v1h-1zM14 39h1v1h-1zM14 40h4v1h-4zM14 41h1v1h-1zM14 42h1v1h-1zM14 43h1v1h-1zM14 44h1v1h-1zM23 36h1v1h-1zM22 39h2v1h-2zM23 40h1v1h-1zM23 41h1v1h-1zM23 42h1v1h-1zM23 43h1v1h-1zM23 44h1v1h-1zM29 36h2v1h-2zM30 37h1v1h-1zM30 38h1v1h-1zM30 39h1v1h-1zM30 40h1v1h-1zM30 41h1v1h-1zM30 42h1v1h-1zM30 43h1v1h-1zM30 44h1v1h-1zM36 39h3v1h-3zM35 40h1v1h-1zM39 40h1v1h-1zM35 41h5v1h-5zM35 42h1v1h-1zM35 43h1v1h-1zM39 43h1v1h-1zM36 44h3v1h-3zM59 37h4v1h-4zM58 38h1v1h-1zM63 38h1v1h-1zM58 39h1v1h-1zM59 40h2v1h-2zM61 41h2v1h-2zM63 42h1v1h-1zM58 43h1v1h-1zM63 43h1v1h-1zM59 44h4v1h-4zM66 39h3v1h-3zM65 40h1v1h-1zM69 40h1v1h-1zM65 41h5v1h-5zM65 42h1v1h-1zM65 43h1v1h-1zM69 43h1v1h-1zM66 44h3v1h-3zM73 37h1v1h-1zM73 38h1v1h-1zM73 39h4v1h-4zM73 40h1v1h-1zM73 41h1v1h-1zM73 42h1v1h-1zM73 43h1v1h-1zM74 44h3v1h-3zM80 37h1v1h-1zM80 38h1v1h-1zM80 39h4v1h-4zM80 40h1v1h-1zM80 41h1v1h-1zM80 42h1v1h-1zM80 43h1v1h-1zM81 44h3v1h-3zM88 36h1v1h-1zM87 39h2v1h-2zM88 40h1v1h-1zM88 41h1v1h-1zM88 42h1v1h-1zM88 43h1v1h-1zM88 44h1v1h-1zM93 39h4v1h-4zM93 40h1v1h-1zM97 40h1v1h-1zM93 41h1v1h-1zM97 41h1v1h-1zM93 42h1v1h-1zM97 42h1v1h-1zM93 43h1v1h-1zM97 43h1v1h-1zM93 44h1v1h-1zM97 44h1v1h-1zM101 39h4v1h-4zM100 40h1v1h-1zM104 40h1v1h-1zM100 41h1v1h-1zM104 41h1v1h-1zM100 42h1v1h-1zM104 42h1v1h-1zM100 43h1v1h-1zM104 43h1v1h-1zM101 44h4v1h-4zM104 45h1v1h-1zM104 46h1v1h-1zM101 47h3v1h-3zM108 39h4v1h-4zM107 40h1v1h-1zM108 41h2v1h-2zM110 42h1v1h-1zM111 43h1v1h-1zM107 44h4v1h-4zM130 37h1v1h-1zM135 37h1v1h-1zM130 38h1v1h-1zM135 38h1v1h-1zM130 39h1v1h-1zM135 39h1v1h-1zM130 40h6v1h-6zM130 41h1v1h-1zM135 41h1v1h-1zM130 42h1v1h-1zM135 42h1v1h-1zM130 43h1v1h-1zM135 43h1v1h-1zM130 44h1v1h-1zM135 44h1v1h-1zM138 39h3v1h-3zM137 40h1v1h-1zM141 40h1v1h-1zM137 41h5v1h-5zM137 42h1v1h-1zM137 43h1v1h-1zM141 43h1v1h-1zM138 44h3v1h-3zM145 36h2v1h-2zM146 37h1v1h-1zM146 38h1v1h-1zM146 39h1v1h-1zM146 40h1v1h-1zM146 41h1v1h-1zM146 42h1v1h-1zM146 43h1v1h-1zM146 44h1v1h-1zM151 39h4v1h-4zM151 40h1v1h-1zM155 40h1v1h-1zM151 41h1v1h-1zM155 41h1v1h-1zM151 42h1v1h-1zM155 42h1v1h-1zM151 43h1v1h-1zM155 43h1v1h-1zM151 44h4v1h-4zM151 45h1v1h-1zM151 46h1v1h-1zM151 47h1v1h-1zM880 61h5v1h-5zM880 62h1v1h-1zM880 63h1v1h-1zM880 64h4v1h-4zM880 65h1v1h-1zM880 66h1v1h-1zM880 67h1v1h-1zM880 68h1v1h-1zM887 61h4v1h-4zM887 62h1v1h-1zM891 62h1v1h-1zM887 63h1v1h-1zM891 63h1v1h-1zM887 64h1v1h-1zM891 64h1v1h-1zM887 65h4v1h-4zM887 66h1v1h-1zM887 67h1v1h-1zM887 68h1v1h-1zM895 61h4v1h-4zM894 62h1v1h-1zM899 62h1v1h-1zM894 63h1v1h-1zM895 64h2v1h-2zM897 65h2v1h-2zM899 66h1v1h-1zM894 67h1v1h-1zM899 67h1v1h-1zM895 68h4v1h-4zM903 63h1v1h-1zM903 64h1v1h-1zM903 67h1v1h-1zM903 68h1v1h-1zM910 61h2v1h-2zM909 62h1v1h-1zM908 63h1v1h-1zM908 64h4v1h-4zM908 65h1v1h-1zM912 65h1v1h-1zM908 66h1v1h-1zM912 66h1v1h-1zM908 67h1v1h-1zM912 67h1v1h-1zM909 68h3v1h-3zM916 61h3v1h-3zM915 62h1v1h-1zM919 62h1v1h-1zM915 63h1v1h-1zM919 63h1v1h-1zM915 64h1v1h-1zM917 64h1v1h-1zM919 64h1v1h-1zM915 65h1v1h-1zM917 65h1v1h-1zM919 65h1v1h-1zM915 66h1v1h-1zM919 66h1v1h-1zM915 67h1v1h-1zM919 67h1v1h-1zM916 68h3v1h-3zM923 67h1v1h-1zM923 68h1v1h-1zM930 61h3v1h-3zM929 62h1v1h-1zM933 62h1v1h-1zM933 63h1v1h-1zM932 64h1v1h-1zM931 65h1v1h-1zM930 66h1v1h-1zM929 67h1v1h-1zM929 68h5v1h-5zM937 61h3v1h-3zM936 62h1v1h-1zM940 62h1v1h-1zM936 63h1v1h-1zM940 63h1v1h-1zM936 64h1v1h-1zM938 64h1v1h-1zM940 64h1v1h-1zM936 65h1v1h-1zM938 65h1v1h-1zM940 65h1v1h-1zM936 66h1v1h-1zM940 66h1v1h-1zM936 67h1v1h-1zM940 67h1v1h-1zM937 68h3v1h-3zM943 61h5v1h-5zM947 62h1v1h-1zM946 63h1v1h-1zM946 64h1v1h-1zM945 65h1v1h-1zM945 66h1v1h-1zM944 67h1v1h-1zM944 68h1v1h-1zM951 61h3v1h-3zM950 62h1v1h-1zM954 62h1v1h-1zM950 63h1v1h-1zM954 63h1v1h-1zM950 64h1v1h-1zM952 64h1v1h-1zM954 64h1v1h-1zM950 65h1v1h-1zM952 65h1v1h-1zM954 65h1v1h-1zM950 66h1v1h-1zM954 66h1v1h-1zM950 67h1v1h-1zM954 67h1v1h-1zM951 68h3v1h-3zM958 61h3v1h-3zM957 62h1v1h-1zM961 62h1v1h-1zM957 63h1v1h-1zM961 63h1v1h-1zM957 64h1v1h-1zM959 64h1v1h-1zM961 64h1v1h-1zM957 65h1v1h-1zM959 65h1v1h-1zM961 65h1v1h-1zM957 66h1v1h-1zM961 66h1v1h-1zM957 67h1v1h-1zM961 67h1v1h-1zM958 68h3v1h-3zM964 61h5v1h-5zM964 62h1v1h-1zM964 63h1v1h-1zM964 64h4v1h-4zM968 65h1v1h-1zM968 66h1v1h-1zM964 67h1v1h-1zM968 67h1v1h-1zM965 68h3v1h-3zM881 78h4v1h-4zM880 79h1v1h-1zM885 79h1v1h-1zM880 80h1v1h-1zM881 81h2v1h-2zM883 82h2v1h-2zM885 83h1v1h-1zM880 84h1v1h-1zM885 84h1v1h-1zM881 85h4v1h-4zM887 77h1v1h-1zM887 78h1v1h-1zM887 79h1v1h-1zM887 80h4v1h-4zM887 81h1v1h-1zM891 81h1v1h-1zM887 82h1v1h-1zM891 82h1v1h-1zM887 83h1v1h-1zM891 83h1v1h-1zM887 84h1v1h-1zM891 84h1v1h-1zM887 85h1v1h-1zM891 85h1v1h-1zM895 80h3v1h-3zM898 81h1v1h-1zM895 82h4v1h-4zM894 83h1v1h-1zM898 83h1v1h-1zM894 84h1v1h-1zM898 84h1v1h-1zM895 85h4v1h-4zM901 80h4v1h-4zM901 81h1v1h-1zM905 81h1v1h-1zM901 82h1v1h-1zM905 82h1v1h-1zM901 83h1v1h-1zM905 83h1v1h-1zM901 84h1v1h-1zM905 84h1v1h-1zM901 85h4v1h-4zM901 86h1v1h-1zM901 87h1v1h-1zM901 88h1v1h-1zM909 80h3v1h-3zM908 81h1v1h-1zM912 81h1v1h-1zM908 82h5v1h-5zM908 83h1v1h-1zM908 84h1v1h-1zM912 84h1v1h-1zM909 85h3v1h-3zM916 80h4v1h-4zM915 81h1v1h-1zM916 82h2v1h-2zM918 83h1v1h-1zM919 84h1v1h-1zM915 85h4v1h-4zM924 80h1v1h-1zM924 81h1v1h-1zM924 84h1v1h-1zM924 85h1v1h-1zM943 81h2v1h-2zM943 82h2v1h-2zM942 83h1v1h-1zM945 83h1v1h-1zM942 84h1v1h-1zM945 84h1v1h-1zM942 85h4v1h-4zM941 86h1v1h-1zM946 86h1v1h-1zM941 87h1v1h-1zM946 87h1v1h-1zM941 88h1v1h-1zM946 88h1v1h-1zM952 80h1v1h-1zM952 81h1v1h-1zM952 82h1v1h-1zM949 83h4v1h-4zM948 84h1v1h-1zM952 84h1v1h-1zM948 85h1v1h-1zM952 85h1v1h-1zM948 86h1v1h-1zM952 86h1v1h-1zM948 87h1v1h-1zM952 87h1v1h-1zM949 88h4v1h-4zM959 80h1v1h-1zM959 81h1v1h-1zM959 82h1v1h-1zM956 83h4v1h-4zM955 84h1v1h-1zM959 84h1v1h-1zM955 85h1v1h-1zM959 85h1v1h-1zM955 86h1v1h-1zM959 86h1v1h-1zM955 87h1v1h-1zM959 87h1v1h-1zM956 88h4v1h-4zM970 81h4v1h-4zM969 82h1v1h-1zM974 82h1v1h-1zM969 83h1v1h-1zM970 84h2v1h-2zM972 85h2v1h-2zM974 86h1v1h-1zM969 87h1v1h-1zM974 87h1v1h-1zM970 88h4v1h-4zM976 80h1v1h-1zM976 81h1v1h-1zM976 82h1v1h-1zM976 83h4v1h-4zM976 84h1v1h-1zM980 84h1v1h-1zM976 85h1v1h-1zM980 85h1v1h-1zM976 86h1v1h-1zM980 86h1v1h-1zM976 87h1v1h-1zM980 87h1v1h-1zM976 88h1v1h-1zM980 88h1v1h-1zM984 83h3v1h-3zM987 84h1v1h-1zM984 85h4v1h-4zM983 86h1v1h-1zM987 86h1v1h-1zM983 87h1v1h-1zM987 87h1v1h-1zM984 88h4v1h-4zM990 83h4v1h-4zM990 84h1v1h-1zM994 84h1v1h-1zM990 85h1v1h-1zM994 85h1v1h-1zM990 86h1v1h-1zM994 86h1v1h-1zM990 87h1v1h-1zM994 87h1v1h-1zM990 88h4v1h-4zM990 89h1v1h-1zM990 90h1v1h-1zM990 91h1v1h-1zM998 83h3v1h-3zM997 84h1v1h-1zM1001 84h1v1h-1zM997 85h5v1h-5zM997 86h1v1h-1zM997 87h1v1h-1zM1001 87h1v1h-1zM998 88h3v1h-3zM921 113h2v1h-2zM926 113h1v1h-1zM921 114h2v1h-2zM926 114h1v1h-1zM921 115h1v1h-1zM923 115h1v1h-1zM926 115h1v1h-1zM921 116h1v1h-1zM923 116h1v1h-1zM926 116h1v1h-1zM921 117h1v1h-1zM924 117h1v1h-1zM926 117h1v1h-1zM921 118h1v1h-1zM924 118h1v1h-1zM926 118h1v1h-1zM921 119h1v1h-1zM925 119h2v1h-2zM921 120h1v1h-1zM925 120h2v1h-2zM929 115h3v1h-3zM932 116h1v1h-1zM929 117h4v1h-4zM928 118h1v1h-1zM932 118h1v1h-1zM928 119h1v1h-1zM932 119h1v1h-1zM929 120h4v1h-4zM934 115h3v1h-3zM938 115h2v1h-2zM934 116h1v1h-1zM937 116h1v1h-1zM940 116h1v1h-1zM934 117h1v1h-1zM937 117h1v1h-1zM940 117h1v1h-1zM934 118h1v1h-1zM937 118h1v1h-1zM940 118h1v1h-1zM934 119h1v1h-1zM937 119h1v1h-1zM940 119h1v1h-1zM934 120h1v1h-1zM937 120h1v1h-1zM940 120h1v1h-1zM943 115h3v1h-3zM942 116h1v1h-1zM946 116h1v1h-1zM942 117h5v1h-5zM942 118h1v1h-1zM942 119h1v1h-1zM946 119h1v1h-1zM943 120h3v1h-3zM1032 113h4v1h-4zM1031 114h1v1h-1zM1036 114h1v1h-1zM1031 115h1v1h-1zM1032 116h2v1h-2zM1034 117h2v1h-2zM1036 118h1v1h-1zM1031 119h1v1h-1zM1036 119h1v1h-1zM1032 120h4v1h-4zM1038 112h1v1h-1zM1038 113h1v1h-1zM1038 114h1v1h-1zM1038 115h4v1h-4zM1038 116h1v1h-1zM1042 116h1v1h-1zM1038 117h1v1h-1zM1042 117h1v1h-1zM1038 118h1v1h-1zM1042 118h1v1h-1zM1038 119h1v1h-1zM1042 119h1v1h-1zM1038 120h1v1h-1zM1042 120h1v1h-1zM1046 115h3v1h-3zM1049 116h1v1h-1zM1046 117h4v1h-4zM1045 118h1v1h-1zM1049 118h1v1h-1zM1045 119h1v1h-1zM1049 119h1v1h-1zM1046 120h4v1h-4zM1052 115h4v1h-4zM1052 116h1v1h-1zM1056 116h1v1h-1zM1052 117h1v1h-1zM1056 117h1v1h-1zM1052 118h1v1h-1zM1056 118h1v1h-1zM1052 119h1v1h-1zM1056 119h1v1h-1zM1052 120h4v1h-4zM1052 121h1v1h-1zM1052 122h1v1h-1zM1052 123h1v1h-1zM1060 115h3v1h-3zM1059 116h1v1h-1zM1063 116h1v1h-1zM1059 117h5v1h-5zM1059 118h1v1h-1zM1059 119h1v1h-1zM1063 119h1v1h-1zM1060 120h3v1h-3zM1113 113h1v1h-1zM1113 114h1v1h-1zM1113 115h1v1h-1zM1113 116h1v1h-1zM1113 117h1v1h-1zM1113 118h1v1h-1zM1113 119h1v1h-1zM1113 120h5v1h-5zM1121 115h3v1h-3zM1124 116h1v1h-1zM1121 117h4v1h-4zM1120 118h1v1h-1zM1124 118h1v1h-1zM1120 119h1v1h-1zM1124 119h1v1h-1zM1121 120h4v1h-4zM1127 115h1v1h-1zM1131 115h1v1h-1zM1127 116h1v1h-1zM1131 116h1v1h-1zM1127 117h1v1h-1zM1131 117h1v1h-1zM1127 118h1v1h-1zM1131 118h1v1h-1zM1127 119h1v1h-1zM1131 119h1v1h-1zM1128 120h4v1h-4zM1131 121h1v1h-1zM1131 122h1v1h-1zM1128 123h3v1h-3zM1135 115h3v1h-3zM1134 116h1v1h-1zM1138 116h1v1h-1zM1134 117h5v1h-5zM1134 118h1v1h-1zM1134 119h1v1h-1zM1138 119h1v1h-1zM1135 120h3v1h-3zM1141 115h1v1h-1zM1143 115h2v1h-2zM1141 116h2v1h-2zM1145 116h1v1h-1zM1141 117h1v1h-1zM1141 118h1v1h-1zM1141 119h1v1h-1zM1141 120h1v1h-1zM922 134h4v1h-4zM921 135h1v1h-1zM926 135h1v1h-1zM921 136h1v1h-1zM922 137h2v1h-2zM924 138h2v1h-2zM926 139h1v1h-1zM921 140h1v1h-1zM926 140h1v1h-1zM922 141h4v1h-4zM928 133h1v1h-1zM928 134h1v1h-1zM928 135h1v1h-1zM928 136h4v1h-4zM928 137h1v1h-1zM932 137h1v1h-1zM928 138h1v1h-1zM932 138h1v1h-1zM928 139h1v1h-1zM932 139h1v1h-1zM928 140h1v1h-1zM932 140h1v1h-1zM928 141h1v1h-1zM932 141h1v1h-1zM936 136h3v1h-3zM939 137h1v1h-1zM936 138h4v1h-4zM935 139h1v1h-1zM939 139h1v1h-1zM935 140h1v1h-1zM939 140h1v1h-1zM936 141h4v1h-4zM942 136h4v1h-4zM942 137h1v1h-1zM946 137h1v1h-1zM942 138h1v1h-1zM946 138h1v1h-1zM942 139h1v1h-1zM946 139h1v1h-1zM942 140h1v1h-1zM946 140h1v1h-1zM942 141h4v1h-4zM942 142h1v1h-1zM942 143h1v1h-1zM942 144h1v1h-1zM950 136h3v1h-3zM949 137h1v1h-1zM953 137h1v1h-1zM949 138h5v1h-5zM949 139h1v1h-1zM949 140h1v1h-1zM953 140h1v1h-1zM950 141h3v1h-3zM964 134h3v1h-3zM963 135h1v1h-1zM967 135h1v1h-1zM963 136h1v1h-1zM967 136h1v1h-1zM963 137h1v1h-1zM965 137h1v1h-1zM967 137h1v1h-1zM963 138h1v1h-1zM965 138h1v1h-1zM967 138h1v1h-1zM963 139h1v1h-1zM967 139h1v1h-1zM963 140h1v1h-1zM967 140h1v1h-1zM964 141h3v1h-3zM1032 134h4v1h-4zM1031 135h1v1h-1zM1036 135h1v1h-1zM1031 136h1v1h-1zM1032 137h2v1h-2zM1034 138h2v1h-2zM1036 139h1v1h-1zM1031 140h1v1h-1zM1036 140h1v1h-1zM1032 141h4v1h-4zM1038 136h4v1h-4zM1038 137h1v1h-1zM1042 137h1v1h-1zM1038 138h1v1h-1zM1042 138h1v1h-1zM1038 139h1v1h-1zM1042 139h1v1h-1zM1038 140h1v1h-1zM1042 140h1v1h-1zM1038 141h4v1h-4zM1038 142h1v1h-1zM1038 143h1v1h-1zM1038 144h1v1h-1zM1045 133h1v1h-1zM1045 134h1v1h-1zM1045 135h1v1h-1zM1045 136h4v1h-4zM1045 137h1v1h-1zM1049 137h1v1h-1zM1045 138h1v1h-1zM1049 138h1v1h-1zM1045 139h1v1h-1zM1049 139h1v1h-1zM1045 140h1v1h-1zM1049 140h1v1h-1zM1045 141h1v1h-1zM1049 141h1v1h-1zM1053 136h3v1h-3zM1052 137h1v1h-1zM1056 137h1v1h-1zM1052 138h5v1h-5zM1052 139h1v1h-1zM1052 140h1v1h-1zM1056 140h1v1h-1zM1053 141h3v1h-3zM1059 136h1v1h-1zM1061 136h2v1h-2zM1059 137h2v1h-2zM1063 137h1v1h-1zM1059 138h1v1h-1zM1059 139h1v1h-1zM1059 140h1v1h-1zM1059 141h1v1h-1zM1067 136h3v1h-3zM1066 137h1v1h-1zM1070 137h1v1h-1zM1066 138h5v1h-5zM1066 139h1v1h-1zM1066 140h1v1h-1zM1070 140h1v1h-1zM1067 141h3v1h-3zM1114 134h3v1h-3zM1113 135h1v1h-1zM1117 135h1v1h-1zM1113 136h1v1h-1zM1117 136h1v1h-1zM1113 137h1v1h-1zM1115 137h1v1h-1zM1117 137h1v1h-1zM1113 138h1v1h-1zM1115 138h1v1h-1zM1117 138h1v1h-1zM1113 139h1v1h-1zM1117 139h1v1h-1zM1113 140h1v1h-1zM1117 140h1v1h-1zM1114 141h3v1h-3zM6 777h7v1h-7zM9 778h1v1h-1zM9 779h1v1h-1zM9 780h1v1h-1zM9 781h1v1h-1zM9 782h1v1h-1zM9 783h1v1h-1zM9 784h1v1h-1zM16 776h1v1h-1zM15 779h2v1h-2zM16 780h1v1h-1zM16 781h1v1h-1zM16 782h1v1h-1zM16 783h1v1h-1zM16 784h1v1h-1zM20 779h3v1h-3zM24 779h2v1h-2zM20 780h1v1h-1zM23 780h1v1h-1zM26 780h1v1h-1zM20 781h1v1h-1zM23 781h1v1h-1zM26 781h1v1h-1zM20 782h1v1h-1zM23 782h1v1h-1zM26 782h1v1h-1zM20 783h1v1h-1zM23 783h1v1h-1zM26 783h1v1h-1zM20 784h1v1h-1zM23 784h1v1h-1zM26 784h1v1h-1zM29 779h3v1h-3zM28 780h1v1h-1zM32 780h1v1h-1zM28 781h5v1h-5zM28 782h1v1h-1zM28 783h1v1h-1zM32 783h1v1h-1zM29 784h3v1h-3zM36 776h2v1h-2zM37 777h1v1h-1zM37 778h1v1h-1zM37 779h1v1h-1zM37 780h1v1h-1zM37 781h1v1h-1zM37 782h1v1h-1zM37 783h1v1h-1zM37 784h1v1h-1zM44 776h1v1h-1zM43 779h2v1h-2zM44 780h1v1h-1zM44 781h1v1h-1zM44 782h1v1h-1zM44 783h1v1h-1zM44 784h1v1h-1zM49 779h4v1h-4zM49 780h1v1h-1zM53 780h1v1h-1zM49 781h1v1h-1zM53 781h1v1h-1zM49 782h1v1h-1zM53 782h1v1h-1zM49 783h1v1h-1zM53 783h1v1h-1zM49 784h1v1h-1zM53 784h1v1h-1zM57 779h3v1h-3zM56 780h1v1h-1zM60 780h1v1h-1zM56 781h5v1h-5zM56 782h1v1h-1zM56 783h1v1h-1zM60 783h1v1h-1zM57 784h3v1h-3zM524 804h3v1h-3zM523 805h1v1h-1zM527 805h1v1h-1zM523 806h1v1h-1zM527 806h1v1h-1zM523 807h1v1h-1zM525 807h1v1h-1zM527 807h1v1h-1zM523 808h1v1h-1zM525 808h1v1h-1zM527 808h1v1h-1zM523 809h1v1h-1zM527 809h1v1h-1zM523 810h1v1h-1zM527 810h1v1h-1zM524 811h3v1h-3zM1030 804h3v1h-3zM1029 805h1v1h-1zM1033 805h1v1h-1zM1029 806h1v1h-1zM1033 806h1v1h-1zM1029 807h1v1h-1zM1031 807h1v1h-1zM1033 807h1v1h-1zM1029 808h1v1h-1zM1031 808h1v1h-1zM1033 808h1v1h-1zM1029 809h1v1h-1zM1033 809h1v1h-1zM1029 810h1v1h-1zM1033 810h1v1h-1zM1030 811h3v1h-3zM1059 808h5v1h-5zM1084 806h1v1h-1zM1084 807h1v1h-1zM1082 808h5v1h-5zM1084 809h1v1h-1zM1084 810h1v1h-1zM1099 804h5v1h-5zM1099 805h1v1h-1zM1099 806h1v1h-1zM1099 807h4v1h-4zM1099 808h1v1h-1zM1099 809h1v1h-1zM1099 810h1v1h-1zM1099 811h1v1h-1zM1106 806h1v1h-1zM1108 806h2v1h-2zM1106 807h2v1h-2zM1110 807h1v1h-1zM1106 808h1v1h-1zM1106 809h1v1h-1zM1106 810h1v1h-1zM1106 811h1v1h-1zM1114 806h3v1h-3zM1117 807h1v1h-1zM1114 808h4v1h-4zM1113 809h1v1h-1zM1117 809h1v1h-1zM1113 810h1v1h-1zM1117 810h1v1h-1zM1114 811h4v1h-4zM1119 806h3v1h-3zM1123 806h2v1h-2zM1119 807h1v1h-1zM1122 807h1v1h-1zM1125 807h1v1h-1zM1119 808h1v1h-1zM1122 808h1v1h-1zM1125 808h1v1h-1zM1119 809h1v1h-1zM1122 809h1v1h-1zM1125 809h1v1h-1zM1119 810h1v1h-1zM1122 810h1v1h-1zM1125 810h1v1h-1zM1119 811h1v1h-1zM1122 811h1v1h-1zM1125 811h1v1h-1zM1128 806h3v1h-3zM1127 807h1v1h-1zM1131 807h1v1h-1zM1127 808h5v1h-5zM1127 809h1v1h-1zM1127 810h1v1h-1zM1131 810h1v1h-1zM1128 811h3v1h-3zM1134 804h2v1h-2zM1139 804h1v1h-1zM1134 805h2v1h-2zM1139 805h1v1h-1zM1134 806h1v1h-1zM1136 806h1v1h-1zM1139 806h1v1h-1zM1134 807h1v1h-1zM1136 807h1v1h-1zM1139 807h1v1h-1zM1134 808h1v1h-1zM1137 808h1v1h-1zM1139 808h1v1h-1zM1134 809h1v1h-1zM1137 809h1v1h-1zM1139 809h1v1h-1zM1134 810h1v1h-1zM1138 810h2v1h-2zM1134 811h1v1h-1zM1138 811h2v1h-2zM1141 806h1v1h-1zM1145 806h1v1h-1zM1141 807h1v1h-1zM1145 807h1v1h-1zM1141 808h1v1h-1zM1145 808h1v1h-1zM1141 809h1v1h-1zM1145 809h1v1h-1zM1141 810h1v1h-1zM1145 810h1v1h-1zM1142 811h4v1h-4zM1147 806h3v1h-3zM1151 806h2v1h-2zM1147 807h1v1h-1zM1150 807h1v1h-1zM1153 807h1v1h-1zM1147 808h1v1h-1zM1150 808h1v1h-1zM1153 808h1v1h-1zM1147 809h1v1h-1zM1150 809h1v1h-1zM1153 809h1v1h-1zM1147 810h1v1h-1zM1150 810h1v1h-1zM1153 810h1v1h-1zM1147 811h1v1h-1zM1150 811h1v1h-1zM1153 811h1v1h-1zM1155 803h1v1h-1zM1155 804h1v1h-1zM1155 805h1v1h-1zM1155 806h4v1h-4zM1155 807h1v1h-1zM1159 807h1v1h-1zM1155 808h1v1h-1zM1159 808h1v1h-1zM1155 809h1v1h-1zM1159 809h1v1h-1zM1155 810h1v1h-1zM1159 810h1v1h-1zM1155 811h4v1h-4zM1163 806h3v1h-3zM1162 807h1v1h-1zM1166 807h1v1h-1zM1162 808h5v1h-5zM1162 809h1v1h-1zM1162 810h1v1h-1zM1166 810h1v1h-1zM1163 811h3v1h-3zM1169 806h1v1h-1zM1171 806h2v1h-2zM1169 807h2v1h-2zM1173 807h1v1h-1zM1169 808h1v1h-1zM1169 809h1v1h-1zM1169 810h1v1h-1zM1169 811h1v1h-1zM1189 804h4v1h-4zM1188 805h1v1h-1zM1193 805h1v1h-1zM1188 806h1v1h-1zM1189 807h2v1h-2zM1191 808h2v1h-2zM1193 809h1v1h-1zM1188 810h1v1h-1zM1193 810h1v1h-1zM1189 811h4v1h-4z"/></svg>
</body></html>
